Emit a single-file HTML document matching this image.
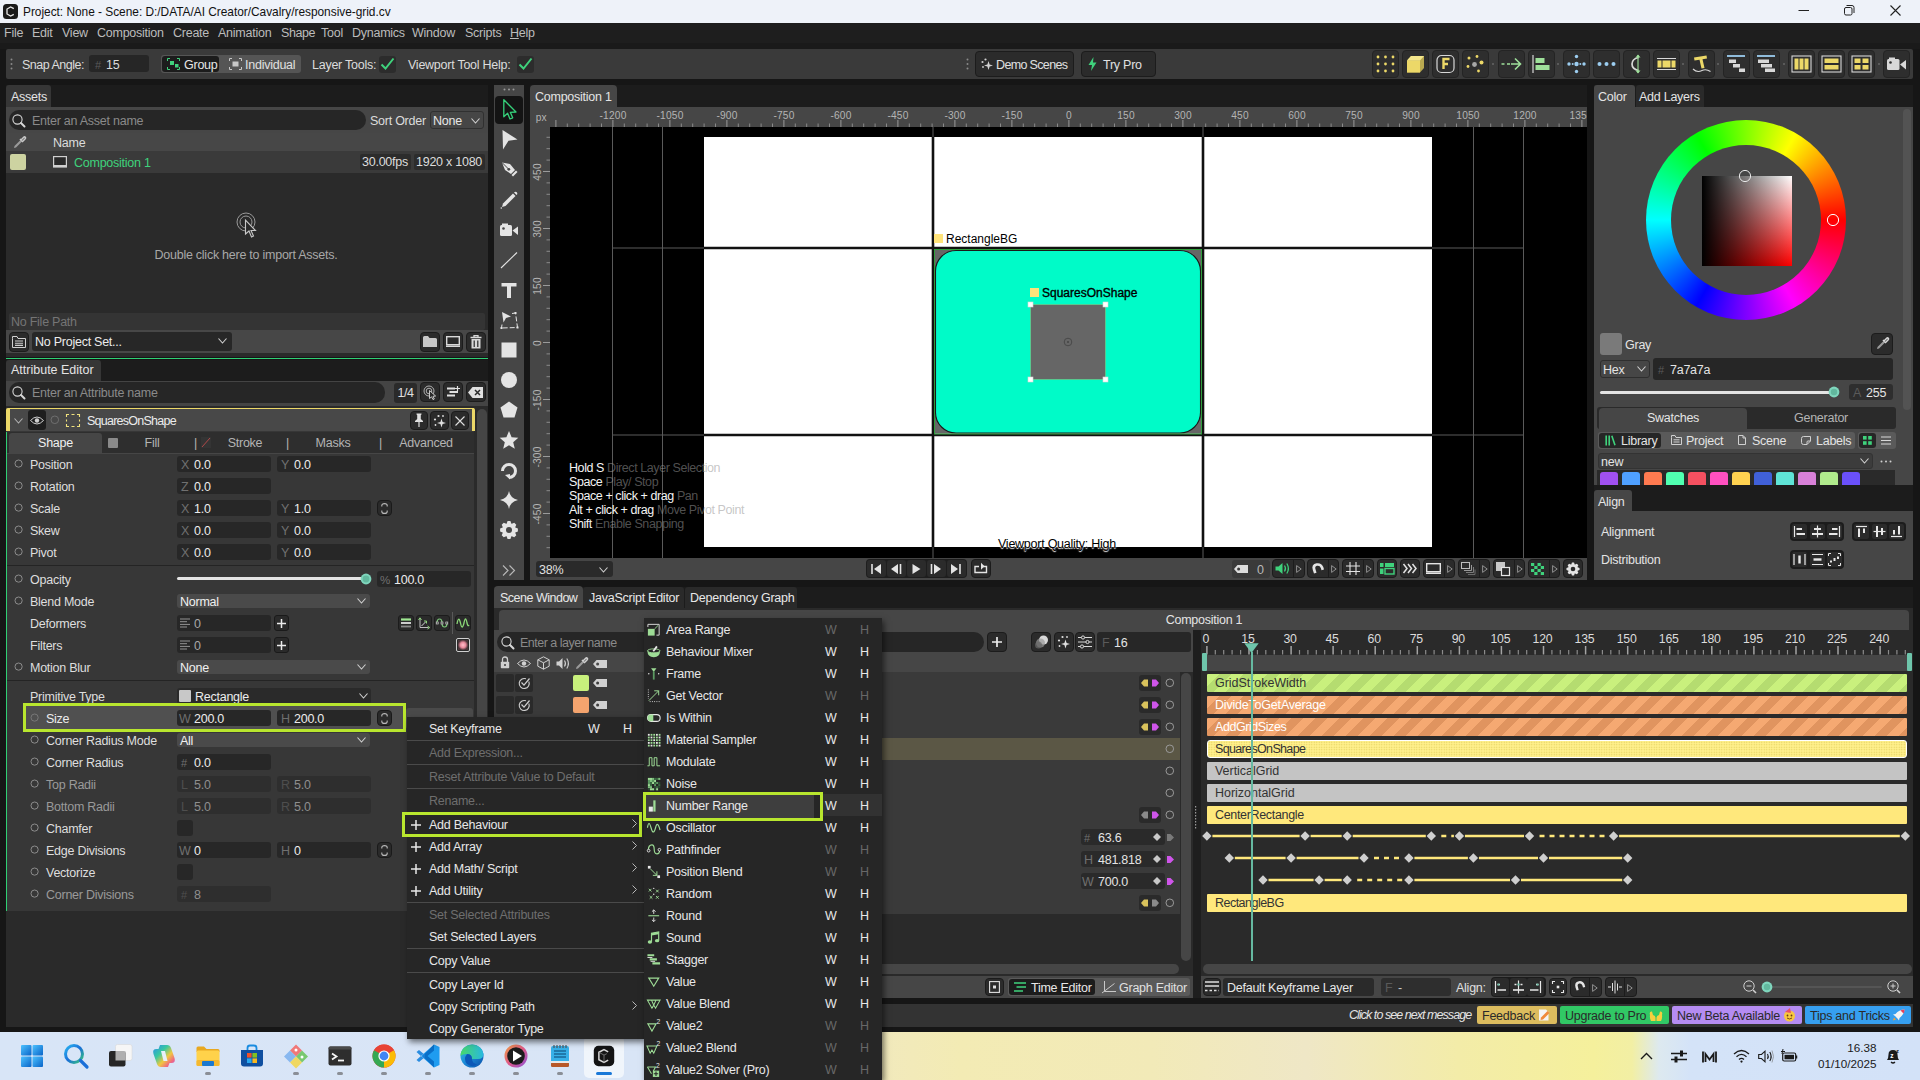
<!DOCTYPE html>
<html><head><meta charset="utf-8"><title>Cavalry</title>
<style>
html,body{margin:0;padding:0;}
body{width:1920px;height:1080px;overflow:hidden;position:relative;background:#161616;font-family:"Liberation Sans",sans-serif;font-size:12.5px;color:#d2d2d2;}
body div, body svg{position:absolute;box-sizing:border-box;}
svg{overflow:visible;}
.f{background:#262626;border-radius:3px;}
.dd{background:#4a4a4a;border-radius:3px;}
.btn{background:#2b2b2b;border:1px solid #1c1c1c;border-radius:4px;}
</style></head><body>
<div style="left:0px;top:0px;width:1920px;height:23px;background:#eef2f9;"></div><svg style="left:3px;top:4px;" width="15" height="15" viewBox="0 0 15 15"><rect x="0" y="0" width="15" height="15" rx="3.5" fill="#1a1a1a"/><path d="M10.8 4.6 L7.6 2.9 L4 5 V10 L7.6 12.1 L10.8 10.4" fill="none" stroke="#e8e8e8" stroke-width="1.3"/></svg><div style="left:23px;top:3.5px;height:16px;line-height:16px;color:#111;font-size:11.9px;letter-spacing:-0.02px;white-space:nowrap;">Project: None - Scene: D:/DATA/AI Creator/Cavalry/responsive-grid.cv</div><svg style="left:1798px;top:4px;" width="110" height="14" viewBox="0 0 110 14"><path d="M0.5 6.5 H11" stroke="#222" stroke-width="1" fill="none"/><rect x="46.5" y="3.5" width="7.5" height="7.5" rx="1.5" fill="none" stroke="#222" stroke-width="1"/><path d="M48.5 1.5 H54 Q56 1.5 56 3.5 V9" fill="none" stroke="#222" stroke-width="1"/><path d="M92.5 1.5 L102.5 11.5 M102.5 1.5 L92.5 11.5" stroke="#222" stroke-width="1.1" fill="none"/></svg><div style="left:0px;top:23px;width:1920px;height:20px;background:#1e1e1e;"></div><div style="left:0px;top:43px;width:1920px;height:6px;background:#1a1a1a;"></div><div style="left:4px;top:25.0px;height:16px;line-height:16px;color:#bcbcbc;font-size:12.5px;letter-spacing:-0.25px;white-space:nowrap;">File</div><div style="left:32px;top:25.0px;height:16px;line-height:16px;color:#bcbcbc;font-size:12.5px;letter-spacing:-0.25px;white-space:nowrap;">Edit</div><div style="left:62px;top:25.0px;height:16px;line-height:16px;color:#bcbcbc;font-size:12.5px;letter-spacing:-0.25px;white-space:nowrap;">View</div><div style="left:97px;top:25.0px;height:16px;line-height:16px;color:#bcbcbc;font-size:12.5px;letter-spacing:-0.25px;white-space:nowrap;">Composition</div><div style="left:173px;top:25.0px;height:16px;line-height:16px;color:#bcbcbc;font-size:12.5px;letter-spacing:-0.25px;white-space:nowrap;">Create</div><div style="left:218px;top:25.0px;height:16px;line-height:16px;color:#bcbcbc;font-size:12.5px;letter-spacing:-0.25px;white-space:nowrap;">Animation</div><div style="left:281px;top:25.0px;height:16px;line-height:16px;color:#bcbcbc;font-size:12.5px;letter-spacing:-0.45px;white-space:nowrap;">Shape</div><div style="left:321px;top:25.0px;height:16px;line-height:16px;color:#bcbcbc;font-size:12.5px;letter-spacing:-0.25px;white-space:nowrap;">Tool</div><div style="left:352px;top:25.0px;height:16px;line-height:16px;color:#bcbcbc;font-size:12.5px;letter-spacing:-0.25px;white-space:nowrap;">Dynamics</div><div style="left:412px;top:25.0px;height:16px;line-height:16px;color:#bcbcbc;font-size:12.5px;letter-spacing:-0.25px;white-space:nowrap;">Window</div><div style="left:465px;top:25.0px;height:16px;line-height:16px;color:#bcbcbc;font-size:12.5px;letter-spacing:-0.25px;white-space:nowrap;">Scripts</div><div style="left:510px;top:25.0px;height:16px;line-height:16px;color:#bcbcbc;font-size:12.5px;letter-spacing:-0.25px;white-space:nowrap;"><u>H</u>elp</div><div style="left:6px;top:49px;width:1907px;height:30px;background:#3a3a3a;border-radius:2px;"></div><svg style="left:10px;top:58px;" width="3" height="12" viewBox="0 0 3 12"><circle cx="1.5" cy="1.5" r="1" fill="#8a8a8a"/><circle cx="1.5" cy="6" r="1" fill="#8a8a8a"/><circle cx="1.5" cy="10.5" r="1" fill="#8a8a8a"/></svg><div style="left:22px;top:56.5px;height:16px;line-height:16px;color:#dcdcdc;font-size:12.5px;letter-spacing:-0.5px;white-space:nowrap;">Snap Angle:</div><div class="f" style="left:89px;top:55px;width:60px;height:17px;"></div><div style="left:95px;top:56.5px;height:16px;line-height:16px;color:#5a5a5a;font-size:11px;letter-spacing:-0.25px;white-space:nowrap;">#</div><div style="left:106px;top:56.5px;height:16px;line-height:16px;color:#dcdcdc;font-size:12.5px;letter-spacing:-0.25px;white-space:nowrap;">15</div><div style="left:161px;top:55px;width:140px;height:18px;background:#555;border-radius:3px;"></div><div style="left:162px;top:56px;width:57px;height:16px;background:#1c1c1c;border-radius:3px;"></div><svg style="left:167px;top:58px;" width="13" height="12" viewBox="0 0 13 12"><rect x="3" y="3" width="4" height="4" fill="#3fd27c"/><rect x="8" y="6" width="3.5" height="3.5" fill="#3fd27c"/><path d="M0.5 3 V0.5 H3 M10 0.5 H12.5 V3 M12.5 9 V11.5 H10 M3 11.5 H0.5 V9" fill="none" stroke="#3fd27c" stroke-width="1"/></svg><div style="left:184px;top:56.5px;height:16px;line-height:16px;color:#e6e6e6;font-size:12.5px;letter-spacing:-0.25px;white-space:nowrap;">Group</div><svg style="left:229px;top:58px;" width="13" height="12" viewBox="0 0 13 12"><rect x="3.5" y="3.5" width="6" height="5" fill="#c8c8c8"/><path d="M0.5 3 V0.5 H3 M10 0.5 H12.5 V3 M12.5 9 V11.5 H10 M3 11.5 H0.5 V9" fill="none" stroke="#c8c8c8" stroke-width="1"/></svg><div style="left:245px;top:56.5px;height:16px;line-height:16px;color:#e0e0e0;font-size:12.5px;letter-spacing:-0.25px;white-space:nowrap;">Individual</div><div style="left:312px;top:56.5px;height:16px;line-height:16px;color:#dcdcdc;font-size:12.5px;letter-spacing:-0.25px;white-space:nowrap;">Layer Tools:</div><div style="left:379px;top:56px;width:17px;height:17px;background:#2c2c2c;border-radius:3px;"></div><svg style="left:380px;top:57px;" width="15" height="14" viewBox="0 0 15 14"><path d="M1.5 7.5 L5.5 11.5 L13.5 1.5" fill="none" stroke="#3fd27c" stroke-width="2"/></svg><div style="left:408px;top:56.5px;height:16px;line-height:16px;color:#dcdcdc;font-size:12.5px;letter-spacing:-0.25px;white-space:nowrap;">Viewport Tool Help:</div><div style="left:517px;top:56px;width:17px;height:17px;background:#2c2c2c;border-radius:3px;"></div><svg style="left:518px;top:57px;" width="15" height="14" viewBox="0 0 15 14"><path d="M1.5 7.5 L5.5 11.5 L13.5 1.5" fill="none" stroke="#3fd27c" stroke-width="2"/></svg><svg style="left:966px;top:58px;" width="3" height="12" viewBox="0 0 3 12"><circle cx="1.5" cy="1.5" r="1" fill="#8a8a8a"/><circle cx="1.5" cy="6" r="1" fill="#8a8a8a"/><circle cx="1.5" cy="10.5" r="1" fill="#8a8a8a"/></svg><div class="btn" style="left:975px;top:51px;width:99px;height:26px;"></div><svg style="left:981px;top:58px;" width="12" height="12" viewBox="0 0 12 12"><path d="M7.5 3 L8.6 6.4 L12 7.5 L8.6 8.6 L7.5 12 L6.4 8.6 L3 7.5 L6.4 6.4 Z" fill="#d0d0d0"/><circle cx="1.5" cy="4" r="1.1" fill="#d0d0d0"/><circle cx="4.5" cy="1.5" r="1.1" fill="#d0d0d0"/><circle cx="2" cy="9" r="0.9" fill="#d0d0d0"/></svg><div style="left:996px;top:56.5px;height:16px;line-height:16px;color:#e0e0e0;font-size:12.5px;letter-spacing:-0.65px;white-space:nowrap;">Demo Scenes</div><div class="btn" style="left:1081px;top:51px;width:75px;height:26px;"></div><svg style="left:1088px;top:57px;" width="9" height="14" viewBox="0 0 9 14"><path d="M5.5 0 L0.5 8 H4 L3 14 L8.5 5.5 H5 Z" fill="#3fd27c"/></svg><div style="left:1103px;top:56.5px;height:16px;line-height:16px;color:#e0e0e0;font-size:12.5px;letter-spacing:-0.25px;white-space:nowrap;">Try Pro</div><div style="left:1372px;top:50px;width:27px;height:28px;background:#2e2e2e;border-radius:4px;border:1px solid #242424;"></div><svg style="left:1375px;top:54px;" width="21" height="20" viewBox="0 0 21 20"><circle cx="3.0" cy="3" r="1.400" fill="#ecd868"/><circle cx="3.0" cy="10" r="1.400" fill="#ecd868"/><circle cx="3.0" cy="17" r="1.400" fill="#ecd868"/><circle cx="10.5" cy="3" r="1.400" fill="#ecd868"/><circle cx="10.5" cy="10" r="1.400" fill="#ecd868"/><circle cx="10.5" cy="17" r="1.400" fill="#ecd868"/><circle cx="18.0" cy="3" r="1.400" fill="#ecd868"/><circle cx="18.0" cy="10" r="1.400" fill="#ecd868"/><circle cx="18.0" cy="17" r="1.400" fill="#ecd868"/></svg><div style="left:1402px;top:50px;width:27px;height:28px;background:#2e2e2e;border-radius:4px;border:1px solid #242424;"></div><svg style="left:1405px;top:54px;" width="21" height="20" viewBox="0 0 21 20"><path d="M2 6.500 L6 2 H19 V14 L15 18.500 H2 Z" fill="#b8a850"/><rect x="2" y="6.500" width="13" height="12" fill="#ecd868"/><path d="M2 6.500 L6 2 H19 L15 6.500 Z" fill="#f4e68c"/></svg><div style="left:1432px;top:50px;width:27px;height:28px;background:#2e2e2e;border-radius:4px;border:1px solid #242424;"></div><svg style="left:1435px;top:54px;" width="21" height="20" viewBox="0 0 21 20"><rect x="2" y="1.500" width="17" height="17" rx="4.500" fill="none" stroke="#d8d8d8" stroke-width="1.200"/><path d="M8.500 15 V5 H14.500 M8.500 10 H13" fill="none" stroke="#ecd868" stroke-width="2.400"/></svg><div style="left:1462px;top:50px;width:27px;height:28px;background:#2e2e2e;border-radius:4px;border:1px solid #242424;"></div><svg style="left:1465px;top:54px;" width="21" height="20" viewBox="0 0 21 20"><circle cx="4" cy="4" r="1.500" fill="#ecd868"/><circle cx="12" cy="2.500" r="1.400" fill="#ecd868"/><circle cx="9.500" cy="10.500" r="2.400" fill="#a8a8a8"/><circle cx="16.500" cy="8.500" r="2" fill="#ecd868"/><circle cx="3" cy="12.500" r="1.400" fill="#ecd868"/><circle cx="13.500" cy="17" r="1.400" fill="#ecd868"/></svg><svg style="left:1492px;top:63px;" width="2" height="2" viewBox="0 0 2 2"><circle cx="1" cy="1" r="0.900" fill="#6a6a6a"/></svg><div style="left:1497.5px;top:50px;width:27px;height:28px;background:#2e2e2e;border-radius:4px;border:1px solid #242424;"></div><svg style="left:1500.5px;top:54px;" width="21" height="20" viewBox="0 0 21 20"><path d="M0.500 10 H11" stroke="#9ee09a" stroke-width="1.600" stroke-dasharray="3 2.500"/><path d="M10 10 H19 M14 4.500 L19.500 10 L14 15.500" fill="none" stroke="#9ee09a" stroke-width="1.600"/></svg><div style="left:1527.5px;top:50px;width:27px;height:28px;background:#2e2e2e;border-radius:4px;border:1px solid #242424;"></div><svg style="left:1530.5px;top:54px;" width="21" height="20" viewBox="0 0 21 20"><path d="M2 1 V19" stroke="#d8d8d8" stroke-width="1.200"/><rect x="4.500" y="4" width="9" height="5" fill="#9ee09a"/><rect x="4.500" y="11" width="14" height="5" fill="#9ee09a"/></svg><svg style="left:1557px;top:63px;" width="2" height="2" viewBox="0 0 2 2"><circle cx="1" cy="1" r="0.900" fill="#6a6a6a"/></svg><div style="left:1562.5px;top:50px;width:27px;height:28px;background:#2e2e2e;border-radius:4px;border:1px solid #242424;"></div><svg style="left:1565.5px;top:54px;" width="21" height="20" viewBox="0 0 21 20"><circle cx="10.500" cy="10" r="2.200" fill="#9ccdf0"/><circle cx="10.500" cy="2.500" r="1.700" fill="#9ccdf0"/><circle cx="10.500" cy="17.500" r="1.700" fill="#9ccdf0"/><circle cx="3" cy="10" r="1.700" fill="#9ccdf0"/><circle cx="18" cy="10" r="1.700" fill="#9ccdf0"/><circle cx="6.700" cy="10" r="1" fill="#9ccdf0"/><circle cx="14.300" cy="10" r="1" fill="#9ccdf0"/></svg><div style="left:1593px;top:50px;width:27px;height:28px;background:#2e2e2e;border-radius:4px;border:1px solid #242424;"></div><svg style="left:1596px;top:54px;" width="21" height="20" viewBox="0 0 21 20"><circle cx="3.500" cy="10" r="2" fill="#9ccdf0"/><circle cx="10.500" cy="10" r="2" fill="#9ccdf0"/><circle cx="17.500" cy="10" r="2" fill="#9ccdf0"/></svg><div style="left:1623px;top:50px;width:27px;height:28px;background:#2e2e2e;border-radius:4px;border:1px solid #242424;"></div><svg style="left:1626px;top:54px;" width="21" height="20" viewBox="0 0 21 20"><path d="M12.500 3.500 Q6 5 6 10 Q6 15 12.500 16.500" fill="none" stroke="#d8d8d8" stroke-width="1.700"/><path d="M12 1 V19" stroke="#9ee09a" stroke-width="1.100"/><path d="M9.500 3.500 L12 0.500 L14.500 3.500 Z M9.500 16.500 L12 19.500 L14.500 16.500 Z" fill="#9ee09a"/></svg><div style="left:1652.5px;top:50px;width:27px;height:28px;background:#2e2e2e;border-radius:4px;border:1px solid #242424;"></div><svg style="left:1655.5px;top:54px;" width="21" height="20" viewBox="0 0 21 20"><path d="M1 4.500 H20 M1 15.500 H20" stroke="#d8d8d8" stroke-width="1"/><rect x="1.500" y="6.500" width="4" height="7" fill="#ecd868"/><rect x="6.500" y="6.500" width="8" height="7" fill="#ecd868"/><rect x="15.500" y="6.500" width="4" height="7" fill="#ecd868"/></svg><svg style="left:1682px;top:63px;" width="2" height="2" viewBox="0 0 2 2"><circle cx="1" cy="1" r="0.900" fill="#6a6a6a"/></svg><div style="left:1687.5px;top:50px;width:27px;height:28px;background:#2e2e2e;border-radius:4px;border:1px solid #242424;"></div><svg style="left:1690.5px;top:54px;" width="21" height="20" viewBox="0 0 21 20"><path d="M3 3.500 L15.500 1.500 L16 4.500 L11.500 5.200 L13.500 14 L10.500 14.500 L8.500 5.700 L3.500 6.500 Z" fill="#ecd868"/><path d="M2 15 Q6 19 11 16.500 Q15 14.500 19.500 17.500" fill="none" stroke="#d8d8d8" stroke-width="1.100"/></svg><svg style="left:1717px;top:63px;" width="2" height="2" viewBox="0 0 2 2"><circle cx="1" cy="1" r="0.900" fill="#6a6a6a"/></svg><div style="left:1723px;top:50px;width:27px;height:28px;background:#2e2e2e;border-radius:4px;border:1px solid #242424;"></div><svg style="left:1726px;top:54px;" width="21" height="20" viewBox="0 0 21 20"><path d="M1 2 H19" stroke="#9ccdf0" stroke-width="1.800"/><rect x="3" y="5.500" width="7" height="3.500" fill="#d8d8d8"/><rect x="7" y="10" width="7" height="3.500" fill="#d8d8d8"/><rect x="13" y="14.500" width="6" height="3.500" fill="#d8d8d8"/></svg><div style="left:1753px;top:50px;width:27px;height:28px;background:#2e2e2e;border-radius:4px;border:1px solid #242424;"></div><svg style="left:1756px;top:54px;" width="21" height="20" viewBox="0 0 21 20"><path d="M1 2 H19" stroke="#9ccdf0" stroke-width="1.800"/><rect x="2" y="5.500" width="11" height="3.500" fill="#d8d8d8"/><rect x="5" y="10" width="11" height="3.500" fill="#d8d8d8"/><rect x="9" y="14.500" width="10" height="3.500" fill="#d8d8d8"/></svg><svg style="left:1782.5px;top:63px;" width="2" height="2" viewBox="0 0 2 2"><circle cx="1" cy="1" r="0.900" fill="#6a6a6a"/></svg><div style="left:1788px;top:50px;width:27px;height:28px;background:#2e2e2e;border-radius:4px;border:1px solid #242424;"></div><svg style="left:1791px;top:54px;" width="21" height="20" viewBox="0 0 21 20"><rect x="1" y="2" width="19" height="16" fill="none" stroke="#d8d8d8" stroke-width="1.100"/><rect x="3.500" y="4.500" width="4" height="11" fill="#ecd868"/><rect x="8.500" y="4.500" width="4" height="11" fill="#ecd868"/><rect x="13.500" y="4.500" width="4" height="11" fill="#ecd868"/></svg><div style="left:1818px;top:50px;width:27px;height:28px;background:#2e2e2e;border-radius:4px;border:1px solid #242424;"></div><svg style="left:1821px;top:54px;" width="21" height="20" viewBox="0 0 21 20"><rect x="1" y="2" width="19" height="16" fill="none" stroke="#d8d8d8" stroke-width="1.100"/><rect x="3.500" y="4.500" width="14" height="4.500" fill="#ecd868"/><rect x="3.500" y="11" width="14" height="4.500" fill="#ecd868"/></svg><div style="left:1848px;top:50px;width:27px;height:28px;background:#2e2e2e;border-radius:4px;border:1px solid #242424;"></div><svg style="left:1851px;top:54px;" width="21" height="20" viewBox="0 0 21 20"><rect x="1" y="2" width="19" height="16" fill="none" stroke="#d8d8d8" stroke-width="1.100"/><rect x="3.500" y="4.500" width="6" height="4.500" fill="#ecd868"/><rect x="11.500" y="4.500" width="6" height="4.500" fill="#ecd868"/><rect x="3.500" y="11" width="6" height="4.500" fill="#ecd868"/><rect x="11.500" y="11" width="6" height="4.500" fill="#ecd868"/></svg><svg style="left:1877.5px;top:63px;" width="2" height="2" viewBox="0 0 2 2"><circle cx="1" cy="1" r="0.900" fill="#6a6a6a"/></svg><div style="left:1883px;top:50px;width:27px;height:28px;background:#2e2e2e;border-radius:4px;border:1px solid #242424;"></div><svg style="left:1886px;top:54px;" width="21" height="20" viewBox="0 0 21 20"><rect x="1" y="5" width="12.500" height="11" rx="1.500" fill="#d8d8d8"/><path d="M14 10.500 L20 6 V15.500 Z" fill="#d8d8d8"/><rect x="3" y="3.500" width="6" height="2" fill="#d8d8d8"/><circle cx="4.500" cy="8.500" r="1.300" fill="#2e2e2e"/></svg><div style="left:6px;top:85px;width:482px;height:22px;background:#1c1c1c;"></div><div style="left:6px;top:85px;width:45px;height:22px;background:#363636;border-radius:3px 3px 0 0;"></div><div style="left:11px;top:88.5px;height:16px;line-height:16px;color:#e4e4e4;font-size:12.5px;letter-spacing:-0.25px;white-space:nowrap;">Assets</div><div style="left:6px;top:107px;width:482px;height:250px;background:#2a2a2a;"></div><div style="left:6px;top:107px;width:482px;height:26px;background:#464646;"></div><div style="left:9px;top:110px;width:357px;height:20px;background:#262626;border-radius:10px;"></div><svg style="left:12px;top:113.5px;" width="14" height="14" viewBox="0 0 14 14"><circle cx="5.5" cy="5.5" r="4.6" fill="none" stroke="#d8d8d8" stroke-width="1.1"/><path d="M9 9 L12.5 12.5" stroke="#d8d8d8" stroke-width="2" stroke-linecap="round"/></svg><div style="left:32px;top:112.5px;height:16px;line-height:16px;color:#8a8a8a;font-size:12.5px;letter-spacing:-0.25px;white-space:nowrap;">Enter an Asset name</div><div style="left:370px;top:112.5px;height:16px;line-height:16px;color:#dcdcdc;font-size:12.5px;letter-spacing:-0.25px;white-space:nowrap;">Sort Order</div><div style="left:430px;top:111px;width:54px;height:18px;background:#464646;border-radius:3px;border:1px solid #303030;"></div><div style="left:433px;top:112.5px;height:16px;line-height:16px;color:#e6e6e6;font-size:12.5px;letter-spacing:-0.25px;white-space:nowrap;">None</div><svg style="left:471px;top:117.5px;" width="9" height="6" viewBox="0 0 9 6"><path d="M0.5 0.5 L4.5 5 L8.5 0.5" fill="none" stroke="#d0d0d0" stroke-width="1.1"/></svg><div style="left:6px;top:133px;width:482px;height:18px;background:#474747;"></div><svg style="left:13px;top:136px;" width="13" height="13" viewBox="0 0 13 13"><path d="M1 12 L1.5 10 L7.5 4 L9 5.5 L3 11.5 Z" fill="#9a9a9a"/><path d="M7 3 L10 6 M8 4 L10.5 1.5 Q11.5 0.5 12.3 1.3 Q13 2 12 3 L9.5 5.5" stroke="#c8c8c8" stroke-width="1.6" fill="none"/></svg><div style="left:53px;top:134.5px;height:16px;line-height:16px;color:#dcdcdc;font-size:12.5px;letter-spacing:-0.25px;white-space:nowrap;">Name</div><div style="left:6px;top:151px;width:482px;height:22px;background:#3a3a3a;"></div><div style="left:10px;top:154px;width:16px;height:16px;background:#cdd3a1;border-radius:2px;"></div><svg style="left:53px;top:156px;" width="14" height="12" viewBox="0 0 14 12"><rect x="0.6" y="0.6" width="12.8" height="9" fill="#2a2a2a" stroke="#d0d0d0" stroke-width="1.2"/><rect x="0" y="10" width="14" height="1.6" fill="#d0d0d0"/></svg><div style="left:74px;top:154.5px;height:16px;line-height:16px;color:#3fd27c;font-size:12.5px;letter-spacing:-0.25px;white-space:nowrap;">Composition 1</div><div style="left:360px;top:154px;width:51px;height:16px;background:#2c2c2c;border-radius:2px;"></div><div style="left:362px;top:154.0px;height:16px;line-height:16px;color:#dcdcdc;font-size:12.5px;letter-spacing:-0.25px;white-space:nowrap;">30.00fps</div><div style="left:414px;top:154px;width:71px;height:16px;background:#2c2c2c;border-radius:2px;"></div><div style="left:416px;top:154.0px;height:16px;line-height:16px;color:#dcdcdc;font-size:12.5px;letter-spacing:-0.25px;white-space:nowrap;">1920 x 1080</div><svg style="left:235px;top:211px;" width="24" height="28" viewBox="0 0 24 28"><circle cx="11" cy="11" r="9" fill="none" stroke="#9a9a9a" stroke-width="1"/><circle cx="11" cy="11" r="6" fill="none" stroke="#9a9a9a" stroke-width="1"/><path d="M10.5 9 V23 L14 20 L16.5 26 L18.5 25 L16 19.5 L20.5 19.5 Z" fill="#2a2a2a" stroke="#c8c8c8" stroke-width="1.1"/></svg><div style="left:66px;top:246.5px;height:16px;line-height:16px;color:#a8a8a8;font-size:12.5px;letter-spacing:-0.25px;white-space:nowrap;width:360px;text-align:center;">Double click here to import Assets.</div><div style="left:9px;top:313px;width:476px;height:17px;background:#343434;border-radius:2px;"></div><div style="left:11px;top:313.5px;height:16px;line-height:16px;color:#757575;font-size:12.5px;letter-spacing:-0.25px;white-space:nowrap;">No File Path</div><div style="left:6px;top:330px;width:482px;height:23px;background:#474747;"></div><div class="btn" style="left:9px;top:332px;width:20px;height:20px;"></div><svg style="left:12px;top:336px;" width="14" height="12" viewBox="0 0 14 12"><path d="M0.5 2.5 V0.5 H5 L6 2.5 H13.5 V11.5 H0.5 Z" fill="none" stroke="#d0d0d0" stroke-width="1"/><path d="M3 5 H11 M3 7.2 H11 M3 9.4 H11" stroke="#d0d0d0" stroke-width="1.1"/></svg><div style="left:32px;top:332px;width:200px;height:19px;background:#272727;border-radius:3px;"></div><div style="left:35px;top:333.5px;height:16px;line-height:16px;color:#ececec;font-size:12.5px;letter-spacing:-0.25px;white-space:nowrap;">No Project Set...</div><svg style="left:218px;top:338px;" width="9" height="6" viewBox="0 0 9 6"><path d="M0.5 0.5 L4.5 5 L8.5 0.5" fill="none" stroke="#d0d0d0" stroke-width="1.1"/></svg><div class="btn" style="left:420px;top:332px;width:20px;height:20px;"></div><div class="btn" style="left:443px;top:332px;width:20px;height:20px;"></div><div class="btn" style="left:466px;top:332px;width:20px;height:20px;"></div><svg style="left:423px;top:336px;" width="14" height="11" viewBox="0 0 14 11"><path d="M0 1.5 Q0 0 1.5 0 H5 L6.5 2 H12.5 Q14 2 14 3.5 V11 H0 Z" fill="#c8c8c8"/></svg><svg style="left:446px;top:336px;" width="14" height="11" viewBox="0 0 14 11"><rect x="0.7" y="0.7" width="12.6" height="8" fill="#2a2a2a" stroke="#d8d8d8" stroke-width="1.4"/><rect x="0" y="9.5" width="14" height="1.5" fill="#d8d8d8"/></svg><svg style="left:470px;top:335px;" width="12" height="14" viewBox="0 0 12 14"><path d="M0.5 2.5 H11.5 M4 2.5 V0.7 H8 V2.5" stroke="#d8d8d8" stroke-width="1.3" fill="none"/><path d="M1.5 4 H10.5 V13.5 H1.5 Z" fill="#d8d8d8"/><path d="M4.2 5.5 V12 M7.8 5.5 V12" stroke="#2a2a2a" stroke-width="1.2"/></svg><div style="left:6px;top:358px;width:482px;height:1px;background:#2fcf74;"></div><div style="left:6px;top:360px;width:482px;height:21px;background:#1c1c1c;"></div><div style="left:6px;top:360px;width:95px;height:21px;background:#363636;border-radius:3px 3px 0 0;"></div><div style="left:11px;top:361.7px;height:16px;line-height:16px;color:#e4e4e4;font-size:12.5px;letter-spacing:0px;white-space:nowrap;">Attribute Editor</div><div style="left:6px;top:381px;width:482px;height:646px;background:#2a2a2a;"></div><div style="left:6px;top:381px;width:482px;height:25px;background:#444444;"></div><div style="left:9px;top:382px;width:376px;height:21px;background:#262626;border-radius:10px;"></div><svg style="left:12px;top:385.5px;" width="14" height="14" viewBox="0 0 14 14"><circle cx="5.5" cy="5.5" r="4.6" fill="none" stroke="#d8d8d8" stroke-width="1.1"/><path d="M9 9 L12.5 12.5" stroke="#d8d8d8" stroke-width="2" stroke-linecap="round"/></svg><div style="left:32px;top:384.5px;height:16px;line-height:16px;color:#8a8a8a;font-size:12.5px;letter-spacing:-0.25px;white-space:nowrap;">Enter an Attribute name</div><div style="left:394px;top:383px;width:23px;height:20px;background:#2a2a2a;border-radius:3px;"></div><div style="left:394px;top:384.5px;height:16px;line-height:16px;color:#e0e0e0;font-size:12.5px;letter-spacing:-0.5px;white-space:nowrap;width:23px;text-align:center;">1/4</div><div class="btn" style="left:420px;top:382px;width:20px;height:20px;"></div><div class="btn" style="left:443px;top:382px;width:20px;height:20px;"></div><div class="btn" style="left:466px;top:382px;width:20px;height:20px;"></div><svg style="left:423px;top:385px;" width="15" height="15" viewBox="0 0 15 15"><circle cx="6" cy="6" r="5" fill="none" stroke="#b0b0b0" stroke-width="1"/><circle cx="6" cy="6" r="2.8" fill="none" stroke="#b0b0b0" stroke-width="1"/><path d="M6.5 5.5 V13.5 L8.6 11.8 L10 14.6 L11.3 14 L10 11.3 L12.6 11 Z" fill="#2b2b2b" stroke="#d8d8d8" stroke-width="0.9"/></svg><svg style="left:447px;top:386px;" width="13" height="12" viewBox="0 0 13 12"><path d="M0 2.5 H8 M2.5 6 H11 M0 9.5 H8" stroke="#e0e0e0" stroke-width="1.8"/><path d="M10.5 0 V5 M8 2.5 H13" stroke="#e0e0e0" stroke-width="1.2"/></svg><svg style="left:468px;top:387px;" width="15" height="11" viewBox="0 0 15 11"><path d="M0 5.5 L4.5 0 H15 V11 H4.5 Z" fill="#e0e0e0"/><path d="M7 3 L12 8 M12 3 L7 8" stroke="#2b2b2b" stroke-width="1.5"/></svg><div style="left:6px;top:408px;width:468px;height:503px;background:#373737;"></div><div style="left:477px;top:409px;width:10px;height:400px;background:#454545;border-radius:5px;"></div><div style="left:6px;top:408px;width:469px;height:23px;background:#484848;border-left:4px solid #ecd868;border-right:3px solid #ecd868;border-top:1px solid #ecd868;border-radius:2px 2px 0 0;"></div><svg style="left:14px;top:418px;" width="9" height="6" viewBox="0 0 9 6"><path d="M0.5 0.5 L4.5 5 L8.5 0.5" fill="none" stroke="#b0b0b0" stroke-width="1.1"/></svg><div style="left:28px;top:410px;width:18px;height:20px;background:#1e1e1e;border-radius:3px;"></div><svg style="left:30px;top:415.5px;" width="14" height="9" viewBox="0 0 14 9"><path d="M0.5 4.5 Q7 -2.5 13.5 4.5 Q7 11.5 0.5 4.5 Z" fill="none" stroke="#d0d0d0" stroke-width="1"/><circle cx="7" cy="4.5" r="2.2" fill="#d0d0d0"/></svg><svg style="left:50.2px;top:415.2px;" width="9.6" height="9.6" viewBox="0 0 9.6 9.6"><circle cx="4.8" cy="4.8" r="3.8" fill="none" stroke="#6e6e6e" stroke-width="1"/></svg><svg style="left:66px;top:414px;" width="14" height="13" viewBox="0 0 14 13"><path d="M0.5 3 V0.5 H3 M5.5 0.5 H8.5 M11 0.5 H13.5 V3 M13.5 5.5 V7.5 M13.5 10 V12.5 H11 M8.5 12.5 H5.5 M3 12.5 H0.5 V10 M0.5 7.5 V5.5" fill="none" stroke="#f0e27e" stroke-width="1.1"/></svg><div style="left:87px;top:412.5px;height:16px;line-height:16px;color:#ececec;font-size:12.5px;letter-spacing:-0.75px;white-space:nowrap;">SquaresOnShape</div><div class="btn" style="left:410px;top:411px;width:18px;height:19px;"></div><div class="btn" style="left:430px;top:411px;width:19px;height:19px;"></div><div class="btn" style="left:451px;top:411px;width:18px;height:19px;"></div><svg style="left:414px;top:413px;" width="10" height="15" viewBox="0 0 10 15"><path d="M2.5 0.5 H7.5 V1.5 L6.8 2 V6 L9 8 V9 H1 V8 L3.2 6 V2 L2.5 1.5 Z" fill="#e0e0e0"/><path d="M5 9 V14" stroke="#e0e0e0" stroke-width="1.2"/></svg><svg style="left:433px;top:414px;" width="14" height="14" viewBox="0 0 14 14"><path d="M8.5 4.5 L9.6 7.9 L13 9 L9.6 10.1 L8.5 13.5 L7.4 10.1 L4 9 L7.4 7.9 Z" fill="#e0e0e0"/><circle cx="2" cy="5.5" r="1.1" fill="#e0e0e0"/><circle cx="5.5" cy="2" r="1.1" fill="#e0e0e0"/><circle cx="2.5" cy="11" r="0.9" fill="#e0e0e0"/><circle cx="10" cy="2" r="0.9" fill="#e0e0e0"/></svg><svg style="left:455px;top:416px;" width="10" height="10" viewBox="0 0 10 10"><path d="M0.5 0.5 L9.5 9.5 M9.5 0.5 L0.5 9.5" stroke="#e0e0e0" stroke-width="1.1"/></svg><div style="left:6px;top:432px;width:1px;height:479px;background:#2fcf74;"></div><div style="left:7px;top:432px;width:467px;height:21px;background:#2e2e2e;"></div><div style="left:9px;top:433px;width:93px;height:20px;background:#464646;border-radius:3px 3px 0 0;"></div><div style="left:9px;top:434.5px;height:16px;line-height:16px;color:#f0f0f0;font-size:12.5px;letter-spacing:-0.25px;white-space:nowrap;width:93px;text-align:center;">Shape</div><div style="left:108px;top:438px;width:10px;height:10px;background:#8a8a8a;border-radius:1px;"></div><div style="left:104px;top:434.5px;height:16px;line-height:16px;color:#b4b4b4;font-size:12.5px;letter-spacing:-0.25px;white-space:nowrap;width:96px;text-align:center;">Fill</div><div style="left:194px;top:434.5px;height:16px;line-height:16px;color:#b4b4b4;font-size:12.5px;letter-spacing:-0.25px;white-space:nowrap;">|</div><svg style="left:201px;top:437px;" width="10" height="11" viewBox="0 0 10 11"><rect x="0" y="0" width="10" height="11" fill="#343434"/><path d="M1 10 L9 1" stroke="#b04848" stroke-width="1"/></svg><div style="left:198px;top:434.5px;height:16px;line-height:16px;color:#b4b4b4;font-size:12.5px;letter-spacing:-0.25px;white-space:nowrap;width:94px;text-align:center;">Stroke</div><div style="left:286px;top:434.5px;height:16px;line-height:16px;color:#b4b4b4;font-size:12.5px;letter-spacing:-0.25px;white-space:nowrap;">|</div><div style="left:286px;top:434.5px;height:16px;line-height:16px;color:#b4b4b4;font-size:12.5px;letter-spacing:-0.25px;white-space:nowrap;width:94px;text-align:center;">Masks</div><div style="left:379px;top:434.5px;height:16px;line-height:16px;color:#b4b4b4;font-size:12.5px;letter-spacing:-0.25px;white-space:nowrap;">|</div><div style="left:380px;top:434.5px;height:16px;line-height:16px;color:#b4b4b4;font-size:12.5px;letter-spacing:-0.25px;white-space:nowrap;width:92px;text-align:center;">Advanced</div><div style="left:7px;top:453px;width:467px;height:1px;background:#464646;"></div><svg style="left:14.4px;top:458.9px;" width="9.2" height="9.2" viewBox="0 0 9.2 9.2"><circle cx="4.6" cy="4.6" r="3.6" fill="none" stroke="#8c8c8c" stroke-width="1"/></svg><div style="left:30px;top:456.5px;height:16px;line-height:16px;color:#dedede;font-size:12.5px;letter-spacing:-0.25px;white-space:nowrap;">Position</div><div style="left:177px;top:456px;width:94px;height:16px;background:#272727;border-radius:3px;"></div><div style="left:181px;top:456.5px;height:16px;line-height:16px;color:#707070;font-size:12.5px;letter-spacing:-0.3px;white-space:nowrap;">X</div><div style="left:194px;top:456.5px;height:16px;line-height:16px;color:#ececec;font-size:12.5px;letter-spacing:-0.25px;white-space:nowrap;">0.0</div><div style="left:277px;top:456px;width:94px;height:16px;background:#272727;border-radius:3px;"></div><div style="left:281px;top:456.5px;height:16px;line-height:16px;color:#707070;font-size:12.5px;letter-spacing:-0.3px;white-space:nowrap;">Y</div><div style="left:294px;top:456.5px;height:16px;line-height:16px;color:#ececec;font-size:12.5px;letter-spacing:-0.25px;white-space:nowrap;">0.0</div><svg style="left:14.4px;top:480.9px;" width="9.2" height="9.2" viewBox="0 0 9.2 9.2"><circle cx="4.6" cy="4.6" r="3.6" fill="none" stroke="#8c8c8c" stroke-width="1"/></svg><div style="left:30px;top:478.5px;height:16px;line-height:16px;color:#dedede;font-size:12.5px;letter-spacing:-0.25px;white-space:nowrap;">Rotation</div><div style="left:177px;top:478px;width:94px;height:16px;background:#272727;border-radius:3px;"></div><div style="left:181px;top:478.5px;height:16px;line-height:16px;color:#707070;font-size:12.5px;letter-spacing:-0.3px;white-space:nowrap;">Z</div><div style="left:194px;top:478.5px;height:16px;line-height:16px;color:#ececec;font-size:12.5px;letter-spacing:-0.25px;white-space:nowrap;">0.0</div><svg style="left:14.4px;top:502.9px;" width="9.2" height="9.2" viewBox="0 0 9.2 9.2"><circle cx="4.6" cy="4.6" r="3.6" fill="none" stroke="#8c8c8c" stroke-width="1"/></svg><div style="left:30px;top:500.5px;height:16px;line-height:16px;color:#dedede;font-size:12.5px;letter-spacing:-0.25px;white-space:nowrap;">Scale</div><div style="left:177px;top:500px;width:94px;height:16px;background:#272727;border-radius:3px;"></div><div style="left:181px;top:500.5px;height:16px;line-height:16px;color:#707070;font-size:12.5px;letter-spacing:-0.3px;white-space:nowrap;">X</div><div style="left:194px;top:500.5px;height:16px;line-height:16px;color:#ececec;font-size:12.5px;letter-spacing:-0.25px;white-space:nowrap;">1.0</div><div style="left:277px;top:500px;width:94px;height:16px;background:#272727;border-radius:3px;"></div><div style="left:281px;top:500.5px;height:16px;line-height:16px;color:#707070;font-size:12.5px;letter-spacing:-0.3px;white-space:nowrap;">Y</div><div style="left:294px;top:500.5px;height:16px;line-height:16px;color:#ececec;font-size:12.5px;letter-spacing:-0.25px;white-space:nowrap;">1.0</div><svg style="left:14.4px;top:524.9px;" width="9.2" height="9.2" viewBox="0 0 9.2 9.2"><circle cx="4.6" cy="4.6" r="3.6" fill="none" stroke="#8c8c8c" stroke-width="1"/></svg><div style="left:30px;top:522.5px;height:16px;line-height:16px;color:#dedede;font-size:12.5px;letter-spacing:-0.25px;white-space:nowrap;">Skew</div><div style="left:177px;top:522px;width:94px;height:16px;background:#272727;border-radius:3px;"></div><div style="left:181px;top:522.5px;height:16px;line-height:16px;color:#707070;font-size:12.5px;letter-spacing:-0.3px;white-space:nowrap;">X</div><div style="left:194px;top:522.5px;height:16px;line-height:16px;color:#ececec;font-size:12.5px;letter-spacing:-0.25px;white-space:nowrap;">0.0</div><div style="left:277px;top:522px;width:94px;height:16px;background:#272727;border-radius:3px;"></div><div style="left:281px;top:522.5px;height:16px;line-height:16px;color:#707070;font-size:12.5px;letter-spacing:-0.3px;white-space:nowrap;">Y</div><div style="left:294px;top:522.5px;height:16px;line-height:16px;color:#ececec;font-size:12.5px;letter-spacing:-0.25px;white-space:nowrap;">0.0</div><svg style="left:14.4px;top:546.9px;" width="9.2" height="9.2" viewBox="0 0 9.2 9.2"><circle cx="4.6" cy="4.6" r="3.6" fill="none" stroke="#8c8c8c" stroke-width="1"/></svg><div style="left:30px;top:544.5px;height:16px;line-height:16px;color:#dedede;font-size:12.5px;letter-spacing:-0.25px;white-space:nowrap;">Pivot</div><div style="left:177px;top:544px;width:94px;height:16px;background:#272727;border-radius:3px;"></div><div style="left:181px;top:544.5px;height:16px;line-height:16px;color:#707070;font-size:12.5px;letter-spacing:-0.3px;white-space:nowrap;">X</div><div style="left:194px;top:544.5px;height:16px;line-height:16px;color:#ececec;font-size:12.5px;letter-spacing:-0.25px;white-space:nowrap;">0.0</div><div style="left:277px;top:544px;width:94px;height:16px;background:#272727;border-radius:3px;"></div><div style="left:281px;top:544.5px;height:16px;line-height:16px;color:#707070;font-size:12.5px;letter-spacing:-0.3px;white-space:nowrap;">Y</div><div style="left:294px;top:544.5px;height:16px;line-height:16px;color:#ececec;font-size:12.5px;letter-spacing:-0.25px;white-space:nowrap;">0.0</div><div style="left:377px;top:500px;width:15px;height:16px;background:#2a2a2a;border-radius:4px;border:1px solid #1a1a1a;"></div><svg style="left:381px;top:502.5px;" width="7" height="11" viewBox="0 0 7 11"><path d="M0.8 3.4 V2.6 Q0.8 0.6 3.5 0.6 Q6.2 0.6 6.2 2.6 V3.4 M0.8 7.6 V8.4 Q0.8 10.4 3.5 10.4 Q6.2 10.4 6.2 8.4 V7.6" fill="none" stroke="#b8b8b8" stroke-width="1.1"/></svg><div style="left:7px;top:565px;width:467px;height:1px;background:#242424;"></div><svg style="left:14.4px;top:573.9px;" width="9.2" height="9.2" viewBox="0 0 9.2 9.2"><circle cx="4.6" cy="4.6" r="3.6" fill="none" stroke="#8c8c8c" stroke-width="1"/></svg><div style="left:30px;top:571.5px;height:16px;line-height:16px;color:#dedede;font-size:12.5px;letter-spacing:-0.25px;white-space:nowrap;">Opacity</div><div style="left:177px;top:577px;width:190px;height:3px;background:#e4e4e4;border-radius:2px;"></div><svg style="left:360px;top:573px;" width="12" height="12" viewBox="0 0 12 12"><circle cx="6" cy="6" r="5.4" fill="#7fd6bd"/><circle cx="6" cy="6" r="3.4" fill="#62b89e"/></svg><div style="left:377px;top:571px;width:94px;height:16px;background:#272727;border-radius:3px;"></div><div style="left:380px;top:571.5px;height:16px;line-height:16px;color:#707070;font-size:11.5px;letter-spacing:-0.25px;white-space:nowrap;">%</div><div style="left:394px;top:571.5px;height:16px;line-height:16px;color:#ececec;font-size:12.5px;letter-spacing:-0.25px;white-space:nowrap;">100.0</div><svg style="left:14.4px;top:595.9px;" width="9.2" height="9.2" viewBox="0 0 9.2 9.2"><circle cx="4.6" cy="4.6" r="3.6" fill="none" stroke="#8c8c8c" stroke-width="1"/></svg><div style="left:30px;top:593.5px;height:16px;line-height:16px;color:#dedede;font-size:12.5px;letter-spacing:-0.25px;white-space:nowrap;">Blend Mode</div><div class="dd" style="left:177px;top:594px;width:193px;height:14px;"></div><div style="left:180px;top:593.5px;height:16px;line-height:16px;color:#f0f0f0;font-size:12.5px;letter-spacing:-0.25px;white-space:nowrap;">Normal</div><svg style="left:357px;top:598px;" width="9" height="6" viewBox="0 0 9 6"><path d="M0.5 0.5 L4.5 5 L8.5 0.5" fill="none" stroke="#d0d0d0" stroke-width="1.1"/></svg><div style="left:30px;top:615.5px;height:16px;line-height:16px;color:#dedede;font-size:12.5px;letter-spacing:-0.25px;white-space:nowrap;">Deformers</div><div style="left:177px;top:615px;width:94px;height:16px;background:#272727;border-radius:3px;"></div><svg style="left:180px;top:618px;" width="10" height="10" viewBox="0 0 10 10"><path d="M0 1 H10 M0 3.7 H7 M0 6.4 H10 M0 9 H7" stroke="#a0a0a0" stroke-width="0.9"/></svg><div style="left:194px;top:615.5px;height:16px;line-height:16px;color:#a8a8a8;font-size:12.5px;letter-spacing:-0.25px;white-space:nowrap;">0</div><div style="left:274px;top:615px;width:15px;height:16px;background:#2a2a2a;border-radius:3px;border:1px solid #1a1a1a;"></div><svg style="left:277px;top:618.5px;" width="9" height="9" viewBox="0 0 9 9"><path d="M4.5 0 V9 M0 4.5 H9" stroke="#ececec" stroke-width="1.5"/></svg><div style="left:30px;top:637.5px;height:16px;line-height:16px;color:#dedede;font-size:12.5px;letter-spacing:-0.25px;white-space:nowrap;">Filters</div><div style="left:177px;top:637px;width:94px;height:16px;background:#272727;border-radius:3px;"></div><svg style="left:180px;top:640px;" width="10" height="10" viewBox="0 0 10 10"><path d="M0 1 H10 M0 3.7 H7 M0 6.4 H10 M0 9 H7" stroke="#a0a0a0" stroke-width="0.9"/></svg><div style="left:194px;top:637.5px;height:16px;line-height:16px;color:#a8a8a8;font-size:12.5px;letter-spacing:-0.25px;white-space:nowrap;">0</div><div style="left:274px;top:637px;width:15px;height:16px;background:#2a2a2a;border-radius:3px;border:1px solid #1a1a1a;"></div><svg style="left:277px;top:640.5px;" width="9" height="9" viewBox="0 0 9 9"><path d="M4.5 0 V9 M0 4.5 H9" stroke="#ececec" stroke-width="1.5"/></svg><div style="left:398px;top:615px;width:16px;height:16px;background:#2a2a2a;border-radius:3px;border:1px solid #1c1c1c;"></div><div style="left:416px;top:615px;width:16px;height:16px;background:#2a2a2a;border-radius:3px;border:1px solid #1c1c1c;"></div><div style="left:434px;top:615px;width:16px;height:16px;background:#2a2a2a;border-radius:3px;border:1px solid #1c1c1c;"></div><div style="left:455px;top:615px;width:16px;height:16px;background:#2a2a2a;border-radius:3px;border:1px solid #1c1c1c;"></div><svg style="left:401px;top:618px;" width="10" height="10" viewBox="0 0 10 10"><path d="M0 1.500 H10" stroke="#9ee890" stroke-width="2.200"/><path d="M0 5 H10" stroke="#e0e0e0" stroke-width="1.800"/><path d="M0 8.500 H10" stroke="#8a8a8a" stroke-width="1.800"/></svg><svg style="left:418px;top:617px;" width="12" height="12" viewBox="0 0 12 12"><path d="M2 2 V10.500 H10.500" stroke="#c0c0c0" stroke-width="1" fill="none"/><path d="M3.500 9 L8 4.500" stroke="#d8d8d8" stroke-width="1"/><path d="M0.500 3 L2 0.800 L3.500 3 M9.500 9 L11.700 10.500 L9.500 12" stroke="#8cd878" stroke-width="1" fill="none"/><path d="M6 4 H8.500 V6.500" stroke="#8cd878" stroke-width="1" fill="none"/></svg><svg style="left:436px;top:618px;" width="12" height="10" viewBox="0 0 12 10"><path d="M1 5 Q1 1 3.500 1 Q6 1 6 5 Q6 9 8.500 9 Q11 9 11 5" stroke="#7cc878" stroke-width="1.200" fill="none"/><rect x="0.200" y="4" width="2" height="2" fill="#373737" stroke="#e0e0e0" stroke-width="0.600"/><rect x="5" y="4" width="2" height="2" fill="#373737" stroke="#e0e0e0" stroke-width="0.600"/><rect x="9.800" y="4" width="2" height="2" fill="#373737" stroke="#e0e0e0" stroke-width="0.600"/></svg><div style="left:452px;top:612px;width:1px;height:22px;background:#5a5a5a;"></div><svg style="left:457px;top:618px;" width="12" height="10" viewBox="0 0 12 10"><path d="M0 6 Q1.5 -3 3.5 5 Q5 13 7 5 Q8.5 -3 10 5 Q11 9 12 7" stroke="#8cd878" stroke-width="1.3" fill="none"/></svg><div style="left:456px;top:638px;width:14px;height:14px;background:#2a2a2a;border-radius:2px;border:1px solid #d0d0d0;"></div><svg style="left:458px;top:640px;" width="10" height="10" viewBox="0 0 10 10"><defs><radialGradient id="pk"><stop offset="0" stop-color="#ffc0cc"/><stop offset="0.550" stop-color="#e88a9c"/><stop offset="1" stop-color="#4a3438"/></radialGradient></defs><rect x="0" y="0" width="10" height="10" fill="url(#pk)"/></svg><svg style="left:14.4px;top:661.9px;" width="9.2" height="9.2" viewBox="0 0 9.2 9.2"><circle cx="4.6" cy="4.6" r="3.6" fill="none" stroke="#8c8c8c" stroke-width="1"/></svg><div style="left:30px;top:659.5px;height:16px;line-height:16px;color:#dedede;font-size:12.5px;letter-spacing:-0.25px;white-space:nowrap;">Motion Blur</div><div class="dd" style="left:177px;top:660px;width:193px;height:14px;"></div><div style="left:180px;top:659.5px;height:16px;line-height:16px;color:#f0f0f0;font-size:12.5px;letter-spacing:-0.25px;white-space:nowrap;">None</div><svg style="left:357px;top:664px;" width="9" height="6" viewBox="0 0 9 6"><path d="M0.5 0.5 L4.5 5 L8.5 0.5" fill="none" stroke="#d0d0d0" stroke-width="1.1"/></svg><div style="left:7px;top:680px;width:467px;height:1px;background:#242424;"></div><div style="left:30px;top:688.5px;height:16px;line-height:16px;color:#dedede;font-size:12.5px;letter-spacing:-0.25px;white-space:nowrap;">Primitive Type</div><div style="left:177px;top:688px;width:194px;height:16px;background:#2a2a2a;border-radius:3px;"></div><div style="left:179px;top:690px;width:12px;height:12px;background:#c8c8c8;border-radius:1px;"></div><div style="left:195px;top:688.5px;height:16px;line-height:16px;color:#ececec;font-size:12.5px;letter-spacing:-0.25px;white-space:nowrap;">Rectangle</div><svg style="left:359px;top:693px;" width="9" height="6" viewBox="0 0 9 6"><path d="M0.5 0.5 L4.5 5 L8.5 0.5" fill="none" stroke="#d0d0d0" stroke-width="1.1"/></svg><div style="left:23px;top:703px;width:383px;height:29px;background:#b8e62e;"></div><div style="left:26px;top:706px;width:377px;height:23px;background:#505050;"></div><svg style="left:30.4px;top:712.9px;" width="9.2" height="9.2" viewBox="0 0 9.2 9.2"><circle cx="4.6" cy="4.6" r="3.6" fill="none" stroke="#777" stroke-width="1"/></svg><div style="left:46px;top:710.5px;height:16px;line-height:16px;color:#ececec;font-size:12.5px;letter-spacing:-0.25px;white-space:nowrap;">Size</div><div style="left:177px;top:710px;width:94px;height:16px;background:#272727;border-radius:3px;"></div><div style="left:179px;top:710.5px;height:16px;line-height:16px;color:#6e6e6e;font-size:12.5px;letter-spacing:-0.3px;white-space:nowrap;">W</div><div style="left:194px;top:710.5px;height:16px;line-height:16px;color:#ececec;font-size:12.5px;letter-spacing:-0.25px;white-space:nowrap;">200.0</div><div style="left:277px;top:710px;width:94px;height:16px;background:#272727;border-radius:3px;"></div><div style="left:281px;top:710.5px;height:16px;line-height:16px;color:#6e6e6e;font-size:12.5px;letter-spacing:-0.3px;white-space:nowrap;">H</div><div style="left:294px;top:710.5px;height:16px;line-height:16px;color:#ececec;font-size:12.5px;letter-spacing:-0.25px;white-space:nowrap;">200.0</div><div style="left:377px;top:710px;width:15px;height:16px;background:#2a2a2a;border-radius:4px;border:1px solid #1a1a1a;"></div><svg style="left:381px;top:712.5px;" width="7" height="11" viewBox="0 0 7 11"><path d="M0.8 3.4 V2.6 Q0.8 0.6 3.5 0.6 Q6.2 0.6 6.2 2.6 V3.4 M0.8 7.6 V8.4 Q0.8 10.4 3.5 10.4 Q6.2 10.4 6.2 8.4 V7.6" fill="none" stroke="#b8b8b8" stroke-width="1.1"/></svg><svg style="left:30.4px;top:734.9px;" width="9.2" height="9.2" viewBox="0 0 9.2 9.2"><circle cx="4.6" cy="4.6" r="3.6" fill="none" stroke="#8c8c8c" stroke-width="1"/></svg><div style="left:46px;top:732.5px;height:16px;line-height:16px;color:#dedede;font-size:12.5px;letter-spacing:-0.25px;white-space:nowrap;">Corner Radius Mode</div><div class="dd" style="left:177px;top:733px;width:193px;height:14px;"></div><div style="left:180px;top:732.5px;height:16px;line-height:16px;color:#f0f0f0;font-size:12.5px;letter-spacing:-0.25px;white-space:nowrap;">All</div><svg style="left:357px;top:737px;" width="9" height="6" viewBox="0 0 9 6"><path d="M0.5 0.5 L4.5 5 L8.5 0.5" fill="none" stroke="#d0d0d0" stroke-width="1.1"/></svg><svg style="left:30.4px;top:756.9px;" width="9.2" height="9.2" viewBox="0 0 9.2 9.2"><circle cx="4.6" cy="4.6" r="3.6" fill="none" stroke="#8c8c8c" stroke-width="1"/></svg><div style="left:46px;top:754.5px;height:16px;line-height:16px;color:#dedede;font-size:12.5px;letter-spacing:-0.25px;white-space:nowrap;">Corner Radius</div><div style="left:177px;top:754px;width:94px;height:16px;background:#272727;border-radius:3px;"></div><div style="left:181px;top:754.5px;height:16px;line-height:16px;color:#707070;font-size:11px;letter-spacing:-0.3px;white-space:nowrap;">#</div><div style="left:194px;top:754.5px;height:16px;line-height:16px;color:#ececec;font-size:12.5px;letter-spacing:-0.25px;white-space:nowrap;">0.0</div><svg style="left:30.4px;top:778.9px;" width="9.2" height="9.2" viewBox="0 0 9.2 9.2"><circle cx="4.6" cy="4.6" r="3.6" fill="none" stroke="#8c8c8c" stroke-width="1"/></svg><div style="left:46px;top:776.5px;height:16px;line-height:16px;color:#9a9a9a;font-size:12.5px;letter-spacing:-0.25px;white-space:nowrap;">Top Radii</div><div style="left:177px;top:776px;width:94px;height:16px;background:#2e2e2e;border-radius:3px;"></div><div style="left:181px;top:776.5px;height:16px;line-height:16px;color:#4e4e4e;font-size:12.5px;letter-spacing:-0.3px;white-space:nowrap;">L</div><div style="left:194px;top:776.5px;height:16px;line-height:16px;color:#8e8e8e;font-size:12.5px;letter-spacing:-0.25px;white-space:nowrap;">5.0</div><div style="left:277px;top:776px;width:94px;height:16px;background:#2e2e2e;border-radius:3px;"></div><div style="left:281px;top:776.5px;height:16px;line-height:16px;color:#4e4e4e;font-size:12.5px;letter-spacing:-0.3px;white-space:nowrap;">R</div><div style="left:294px;top:776.5px;height:16px;line-height:16px;color:#8e8e8e;font-size:12.5px;letter-spacing:-0.25px;white-space:nowrap;">5.0</div><svg style="left:30.4px;top:800.9px;" width="9.2" height="9.2" viewBox="0 0 9.2 9.2"><circle cx="4.6" cy="4.6" r="3.6" fill="none" stroke="#8c8c8c" stroke-width="1"/></svg><div style="left:46px;top:798.5px;height:16px;line-height:16px;color:#9a9a9a;font-size:12.5px;letter-spacing:-0.25px;white-space:nowrap;">Bottom Radii</div><div style="left:177px;top:798px;width:94px;height:16px;background:#2e2e2e;border-radius:3px;"></div><div style="left:181px;top:798.5px;height:16px;line-height:16px;color:#4e4e4e;font-size:12.5px;letter-spacing:-0.3px;white-space:nowrap;">L</div><div style="left:194px;top:798.5px;height:16px;line-height:16px;color:#8e8e8e;font-size:12.5px;letter-spacing:-0.25px;white-space:nowrap;">5.0</div><div style="left:277px;top:798px;width:94px;height:16px;background:#2e2e2e;border-radius:3px;"></div><div style="left:281px;top:798.5px;height:16px;line-height:16px;color:#4e4e4e;font-size:12.5px;letter-spacing:-0.3px;white-space:nowrap;">R</div><div style="left:294px;top:798.5px;height:16px;line-height:16px;color:#8e8e8e;font-size:12.5px;letter-spacing:-0.25px;white-space:nowrap;">5.0</div><svg style="left:30.4px;top:822.9px;" width="9.2" height="9.2" viewBox="0 0 9.2 9.2"><circle cx="4.6" cy="4.6" r="3.6" fill="none" stroke="#8c8c8c" stroke-width="1"/></svg><div style="left:46px;top:820.5px;height:16px;line-height:16px;color:#dedede;font-size:12.5px;letter-spacing:-0.25px;white-space:nowrap;">Chamfer</div><div style="left:177px;top:820px;width:16px;height:16px;background:#272727;border-radius:3px;"></div><svg style="left:30.4px;top:844.9px;" width="9.2" height="9.2" viewBox="0 0 9.2 9.2"><circle cx="4.6" cy="4.6" r="3.6" fill="none" stroke="#8c8c8c" stroke-width="1"/></svg><div style="left:46px;top:842.5px;height:16px;line-height:16px;color:#dedede;font-size:12.5px;letter-spacing:-0.25px;white-space:nowrap;">Edge Divisions</div><div style="left:177px;top:842px;width:94px;height:16px;background:#272727;border-radius:3px;"></div><div style="left:179px;top:842.5px;height:16px;line-height:16px;color:#707070;font-size:12.5px;letter-spacing:-0.3px;white-space:nowrap;">W</div><div style="left:194px;top:842.5px;height:16px;line-height:16px;color:#ececec;font-size:12.5px;letter-spacing:-0.25px;white-space:nowrap;">0</div><div style="left:277px;top:842px;width:94px;height:16px;background:#272727;border-radius:3px;"></div><div style="left:281px;top:842.5px;height:16px;line-height:16px;color:#707070;font-size:12.5px;letter-spacing:-0.3px;white-space:nowrap;">H</div><div style="left:294px;top:842.5px;height:16px;line-height:16px;color:#ececec;font-size:12.5px;letter-spacing:-0.25px;white-space:nowrap;">0</div><div style="left:377px;top:842px;width:15px;height:16px;background:#2a2a2a;border-radius:4px;border:1px solid #1a1a1a;"></div><svg style="left:381px;top:844.5px;" width="7" height="11" viewBox="0 0 7 11"><path d="M0.8 3.4 V2.6 Q0.8 0.6 3.5 0.6 Q6.2 0.6 6.2 2.6 V3.4 M0.8 7.6 V8.4 Q0.8 10.4 3.5 10.4 Q6.2 10.4 6.2 8.4 V7.6" fill="none" stroke="#b8b8b8" stroke-width="1.1"/></svg><svg style="left:30.4px;top:866.9px;" width="9.2" height="9.2" viewBox="0 0 9.2 9.2"><circle cx="4.6" cy="4.6" r="3.6" fill="none" stroke="#8c8c8c" stroke-width="1"/></svg><div style="left:46px;top:864.5px;height:16px;line-height:16px;color:#dedede;font-size:12.5px;letter-spacing:-0.25px;white-space:nowrap;">Vectorize</div><div style="left:177px;top:864px;width:16px;height:16px;background:#272727;border-radius:3px;"></div><svg style="left:30.4px;top:888.9px;" width="9.2" height="9.2" viewBox="0 0 9.2 9.2"><circle cx="4.6" cy="4.6" r="3.6" fill="none" stroke="#8c8c8c" stroke-width="1"/></svg><div style="left:46px;top:886.5px;height:16px;line-height:16px;color:#9a9a9a;font-size:12.5px;letter-spacing:-0.25px;white-space:nowrap;">Corner Divisions</div><div style="left:177px;top:886px;width:94px;height:16px;background:#2e2e2e;border-radius:3px;"></div><div style="left:181px;top:886.5px;height:16px;line-height:16px;color:#4e4e4e;font-size:11px;letter-spacing:-0.3px;white-space:nowrap;">#</div><div style="left:194px;top:886.5px;height:16px;line-height:16px;color:#8e8e8e;font-size:12.5px;letter-spacing:-0.25px;white-space:nowrap;">8</div><div style="left:494px;top:85px;width:30px;height:495px;background:#464646;"></div><svg style="left:503px;top:88px;" width="12" height="3" viewBox="0 0 12 3"><circle cx="1.5" cy="1.5" r="1" fill="#9a9a9a"/><circle cx="6" cy="1.5" r="1" fill="#9a9a9a"/><circle cx="10.5" cy="1.5" r="1" fill="#9a9a9a"/></svg><div style="left:495px;top:96px;width:28px;height:28px;background:#141414;border-radius:4px;"></div><svg style="left:499px;top:99px;" width="20" height="20" viewBox="0 0 20 20"><path d="M4.800 0.800 V17.800 L8.600 14.300 L11 20 L13.700 18.800 L11.300 13.300 L17 13 Z" fill="none" stroke="#35d07a" stroke-width="1.3" stroke-linejoin="round"/></svg><svg style="left:499px;top:130px;" width="20" height="20" viewBox="0 0 20 20"><path d="M3.500 0 L18.500 9.500 L9.500 10.800 L4 19.500 Z" fill="#e4e4e4"/></svg><svg style="left:499px;top:160px;" width="20" height="20" viewBox="0 0 20 20"><path d="M3 2.5 L11 4 L16 10 L12 14 L6 10 Z" fill="#e4e4e4"/><path d="M3 2.5 L9.5 9" stroke="#464646" stroke-width="1"/><circle cx="9.8" cy="9.3" r="1.4" fill="#464646"/><path d="M12.5 15 L17 10.5 L18.5 12 L14 16.5 Z" fill="#e4e4e4"/></svg><svg style="left:499px;top:190px;" width="20" height="20" viewBox="0 0 20 20"><path d="M3 17 L4 13.5 L14 3.5 L16.5 6 L6.5 16 Z" fill="#e4e4e4"/><path d="M15 2.5 Q16.5 1 18 2.5 Q19 4 17.5 5 Z" fill="#e4e4e4"/><circle cx="2.3" cy="18" r="0.8" fill="#e4e4e4"/></svg><svg style="left:499px;top:220px;" width="20" height="20" viewBox="0 0 20 20"><rect x="1" y="5" width="12" height="11" rx="1.5" fill="#e4e4e4"/><path d="M13.5 10.5 L19 6.5 V15 Z" fill="#e4e4e4"/><rect x="3" y="3.5" width="6" height="2" fill="#e4e4e4"/><circle cx="4.5" cy="8.5" r="1.3" fill="#464646"/></svg><svg style="left:499px;top:250px;" width="20" height="20" viewBox="0 0 20 20"><path d="M2 18 L18 2.5" stroke="#e4e4e4" stroke-width="1.1"/></svg><svg style="left:499px;top:280px;" width="20" height="20" viewBox="0 0 20 20"><path d="M2.5 3 H17.5 V6.5 H12 V18 H8 V6.5 H2.5 Z" fill="#e4e4e4"/></svg><svg style="left:499px;top:310px;" width="20" height="20" viewBox="0 0 20 20"><path d="M3 2 L12 6.5 L7 8 L4.5 12.5 Z" fill="#e4e4e4"/><path d="M13 3.5 L16.5 3 L18.5 17.5 L2.5 18 L3 14.5" stroke="#e4e4e4" stroke-width="1" fill="none" stroke-dasharray="5 2"/><rect x="1.5" y="17" width="2" height="2" fill="#e4e4e4"/><rect x="17.5" y="16.5" width="2" height="2" fill="#e4e4e4"/><rect x="15.5" y="2" width="2" height="2" fill="#e4e4e4"/></svg><svg style="left:499px;top:340px;" width="20" height="20" viewBox="0 0 20 20"><rect x="2.5" y="2.5" width="15" height="15" fill="#e4e4e4"/></svg><svg style="left:499px;top:370px;" width="20" height="20" viewBox="0 0 20 20"><circle cx="10" cy="10" r="8" fill="#e4e4e4"/></svg><svg style="left:499px;top:400px;" width="20" height="20" viewBox="0 0 20 20"><path d="M10 1.5 L18.5 7.5 L15.5 17.5 H4.5 L1.5 7.5 Z" fill="#e4e4e4"/></svg><svg style="left:499px;top:430px;" width="20" height="20" viewBox="0 0 20 20"><path d="M10 1 L12.6 7.2 L19.3 7.8 L14.2 12.2 L15.8 18.8 L10 15.2 L4.2 18.8 L5.8 12.2 L0.7 7.8 L7.4 7.2 Z" fill="#e4e4e4"/></svg><svg style="left:499px;top:460px;" width="20" height="20" viewBox="0 0 20 20"><path d="M3.5 11 A6.5 6.5 0 1 1 10 17.5" fill="none" stroke="#e4e4e4" stroke-width="3"/><path d="M6 15 L11 14 L11 19.5 Z" fill="#e4e4e4"/></svg><svg style="left:499px;top:490px;" width="20" height="20" viewBox="0 0 20 20"><path d="M10 1 Q11 8 19 10 Q11 12 10 19 Q9 12 1 10 Q9 8 10 1 Z" fill="#e4e4e4"/></svg><svg style="left:499px;top:520px;" width="20" height="20" viewBox="0 0 20 20"><polygon points="18.89,8.57 18.89,11.43 16.36,12.40 16.19,12.81 17.30,15.27 15.27,17.30 12.81,16.19 12.40,16.36 11.43,18.89 8.57,18.89 7.60,16.36 7.19,16.19 4.73,17.30 2.70,15.27 3.81,12.81 3.64,12.40 1.11,11.43 1.11,8.57 3.64,7.60 3.81,7.19 2.70,4.73 4.73,2.70 7.19,3.81 7.60,3.64 8.57,1.11 11.43,1.11 12.40,3.64 12.81,3.81 15.27,2.70 17.30,4.73 16.19,7.19 16.36,7.60" fill="#e4e4e4"/><circle cx="10" cy="10" r="3" fill="#464646"/></svg><svg style="left:502px;top:565px;" width="14" height="11" viewBox="0 0 14 11"><path d="M1 0.5 L6 5.5 L1 10.5 M7.5 0.5 L12.5 5.5 L7.5 10.5" fill="none" stroke="#b8b8b8" stroke-width="1.1"/></svg><div style="left:530px;top:85px;width:1057px;height:22px;background:#1c1c1c;"></div><div style="left:530px;top:85px;width:87px;height:22px;background:#464646;border-radius:4px 4px 0 0;"></div><div style="left:535px;top:88.5px;height:16px;line-height:16px;color:#e4e4e4;font-size:12.5px;letter-spacing:-0.25px;white-space:nowrap;">Composition 1</div><div style="left:530px;top:107px;width:1057px;height:473px;background:#464646;"></div><div style="left:550px;top:127px;width:1037px;height:431px;background:#000;"></div><svg style="left:530px;top:107px;" width="1057" height="20" viewBox="0 0 1057 20"><path d="M25.9 13 V20" stroke="#9a9a9a" stroke-width="1"/><path d="M37.3 16.5 V20" stroke="#8a8a8a" stroke-width="1"/><path d="M48.7 16.5 V20" stroke="#8a8a8a" stroke-width="1"/><path d="M60.1 16.5 V20" stroke="#8a8a8a" stroke-width="1"/><path d="M71.5 16.5 V20" stroke="#8a8a8a" stroke-width="1"/><path d="M82.9 13 V20" stroke="#9a9a9a" stroke-width="1"/><path d="M94.3 16.5 V20" stroke="#8a8a8a" stroke-width="1"/><path d="M105.7 16.5 V20" stroke="#8a8a8a" stroke-width="1"/><path d="M117.1 16.5 V20" stroke="#8a8a8a" stroke-width="1"/><path d="M128.5 16.5 V20" stroke="#8a8a8a" stroke-width="1"/><path d="M139.9 13 V20" stroke="#9a9a9a" stroke-width="1"/><path d="M151.3 16.5 V20" stroke="#8a8a8a" stroke-width="1"/><path d="M162.7 16.5 V20" stroke="#8a8a8a" stroke-width="1"/><path d="M174.1 16.5 V20" stroke="#8a8a8a" stroke-width="1"/><path d="M185.5 16.5 V20" stroke="#8a8a8a" stroke-width="1"/><path d="M196.9 13 V20" stroke="#9a9a9a" stroke-width="1"/><path d="M208.3 16.5 V20" stroke="#8a8a8a" stroke-width="1"/><path d="M219.7 16.5 V20" stroke="#8a8a8a" stroke-width="1"/><path d="M231.1 16.5 V20" stroke="#8a8a8a" stroke-width="1"/><path d="M242.5 16.5 V20" stroke="#8a8a8a" stroke-width="1"/><path d="M253.9 13 V20" stroke="#9a9a9a" stroke-width="1"/><path d="M265.3 16.5 V20" stroke="#8a8a8a" stroke-width="1"/><path d="M276.7 16.5 V20" stroke="#8a8a8a" stroke-width="1"/><path d="M288.1 16.5 V20" stroke="#8a8a8a" stroke-width="1"/><path d="M299.5 16.5 V20" stroke="#8a8a8a" stroke-width="1"/><path d="M310.9 13 V20" stroke="#9a9a9a" stroke-width="1"/><path d="M322.3 16.5 V20" stroke="#8a8a8a" stroke-width="1"/><path d="M333.7 16.5 V20" stroke="#8a8a8a" stroke-width="1"/><path d="M345.1 16.5 V20" stroke="#8a8a8a" stroke-width="1"/><path d="M356.5 16.5 V20" stroke="#8a8a8a" stroke-width="1"/><path d="M367.9 13 V20" stroke="#9a9a9a" stroke-width="1"/><path d="M379.3 16.5 V20" stroke="#8a8a8a" stroke-width="1"/><path d="M390.7 16.5 V20" stroke="#8a8a8a" stroke-width="1"/><path d="M402.1 16.5 V20" stroke="#8a8a8a" stroke-width="1"/><path d="M413.5 16.5 V20" stroke="#8a8a8a" stroke-width="1"/><path d="M424.9 13 V20" stroke="#9a9a9a" stroke-width="1"/><path d="M436.3 16.5 V20" stroke="#8a8a8a" stroke-width="1"/><path d="M447.7 16.5 V20" stroke="#8a8a8a" stroke-width="1"/><path d="M459.1 16.5 V20" stroke="#8a8a8a" stroke-width="1"/><path d="M470.5 16.5 V20" stroke="#8a8a8a" stroke-width="1"/><path d="M481.9 13 V20" stroke="#9a9a9a" stroke-width="1"/><path d="M493.3 16.5 V20" stroke="#8a8a8a" stroke-width="1"/><path d="M504.7 16.5 V20" stroke="#8a8a8a" stroke-width="1"/><path d="M516.1 16.5 V20" stroke="#8a8a8a" stroke-width="1"/><path d="M527.5 16.5 V20" stroke="#8a8a8a" stroke-width="1"/><path d="M538.9 13 V20" stroke="#9a9a9a" stroke-width="1"/><path d="M550.3 16.5 V20" stroke="#8a8a8a" stroke-width="1"/><path d="M561.7 16.5 V20" stroke="#8a8a8a" stroke-width="1"/><path d="M573.1 16.5 V20" stroke="#8a8a8a" stroke-width="1"/><path d="M584.5 16.5 V20" stroke="#8a8a8a" stroke-width="1"/><path d="M595.9 13 V20" stroke="#9a9a9a" stroke-width="1"/><path d="M607.3 16.5 V20" stroke="#8a8a8a" stroke-width="1"/><path d="M618.7 16.5 V20" stroke="#8a8a8a" stroke-width="1"/><path d="M630.1 16.5 V20" stroke="#8a8a8a" stroke-width="1"/><path d="M641.5 16.5 V20" stroke="#8a8a8a" stroke-width="1"/><path d="M652.9 13 V20" stroke="#9a9a9a" stroke-width="1"/><path d="M664.3 16.5 V20" stroke="#8a8a8a" stroke-width="1"/><path d="M675.7 16.5 V20" stroke="#8a8a8a" stroke-width="1"/><path d="M687.1 16.5 V20" stroke="#8a8a8a" stroke-width="1"/><path d="M698.5 16.5 V20" stroke="#8a8a8a" stroke-width="1"/><path d="M709.9 13 V20" stroke="#9a9a9a" stroke-width="1"/><path d="M721.3 16.5 V20" stroke="#8a8a8a" stroke-width="1"/><path d="M732.7 16.5 V20" stroke="#8a8a8a" stroke-width="1"/><path d="M744.1 16.5 V20" stroke="#8a8a8a" stroke-width="1"/><path d="M755.5 16.5 V20" stroke="#8a8a8a" stroke-width="1"/><path d="M766.9 13 V20" stroke="#9a9a9a" stroke-width="1"/><path d="M778.3 16.5 V20" stroke="#8a8a8a" stroke-width="1"/><path d="M789.7 16.5 V20" stroke="#8a8a8a" stroke-width="1"/><path d="M801.1 16.5 V20" stroke="#8a8a8a" stroke-width="1"/><path d="M812.5 16.5 V20" stroke="#8a8a8a" stroke-width="1"/><path d="M823.9 13 V20" stroke="#9a9a9a" stroke-width="1"/><path d="M835.3 16.5 V20" stroke="#8a8a8a" stroke-width="1"/><path d="M846.7 16.5 V20" stroke="#8a8a8a" stroke-width="1"/><path d="M858.1 16.5 V20" stroke="#8a8a8a" stroke-width="1"/><path d="M869.5 16.5 V20" stroke="#8a8a8a" stroke-width="1"/><path d="M880.9 13 V20" stroke="#9a9a9a" stroke-width="1"/><path d="M892.3 16.5 V20" stroke="#8a8a8a" stroke-width="1"/><path d="M903.7 16.5 V20" stroke="#8a8a8a" stroke-width="1"/><path d="M915.1 16.5 V20" stroke="#8a8a8a" stroke-width="1"/><path d="M926.5 16.5 V20" stroke="#8a8a8a" stroke-width="1"/><path d="M937.9 13 V20" stroke="#9a9a9a" stroke-width="1"/><path d="M949.3 16.5 V20" stroke="#8a8a8a" stroke-width="1"/><path d="M960.7 16.5 V20" stroke="#8a8a8a" stroke-width="1"/><path d="M972.1 16.5 V20" stroke="#8a8a8a" stroke-width="1"/><path d="M983.5 16.5 V20" stroke="#8a8a8a" stroke-width="1"/><path d="M994.9 13 V20" stroke="#9a9a9a" stroke-width="1"/><path d="M1006.3 16.5 V20" stroke="#8a8a8a" stroke-width="1"/><path d="M1017.7 16.5 V20" stroke="#8a8a8a" stroke-width="1"/><path d="M1029.1 16.5 V20" stroke="#8a8a8a" stroke-width="1"/><path d="M1040.5 16.5 V20" stroke="#8a8a8a" stroke-width="1"/><path d="M1051.9 13 V20" stroke="#9a9a9a" stroke-width="1"/></svg><div style="left:588.0px;top:109.6px;height:12px;line-height:12px;color:#b4b4b4;font-size:10.2px;letter-spacing:0.2px;white-space:nowrap;width:50px;text-align:center;">-1200</div><div style="left:645.0px;top:109.6px;height:12px;line-height:12px;color:#b4b4b4;font-size:10.2px;letter-spacing:0.2px;white-space:nowrap;width:50px;text-align:center;">-1050</div><div style="left:702.0px;top:109.6px;height:12px;line-height:12px;color:#b4b4b4;font-size:10.2px;letter-spacing:0.2px;white-space:nowrap;width:50px;text-align:center;">-900</div><div style="left:759.0px;top:109.6px;height:12px;line-height:12px;color:#b4b4b4;font-size:10.2px;letter-spacing:0.2px;white-space:nowrap;width:50px;text-align:center;">-750</div><div style="left:816.0px;top:109.6px;height:12px;line-height:12px;color:#b4b4b4;font-size:10.2px;letter-spacing:0.2px;white-space:nowrap;width:50px;text-align:center;">-600</div><div style="left:873.0px;top:109.6px;height:12px;line-height:12px;color:#b4b4b4;font-size:10.2px;letter-spacing:0.2px;white-space:nowrap;width:50px;text-align:center;">-450</div><div style="left:930.0px;top:109.6px;height:12px;line-height:12px;color:#b4b4b4;font-size:10.2px;letter-spacing:0.2px;white-space:nowrap;width:50px;text-align:center;">-300</div><div style="left:987.0px;top:109.6px;height:12px;line-height:12px;color:#b4b4b4;font-size:10.2px;letter-spacing:0.2px;white-space:nowrap;width:50px;text-align:center;">-150</div><div style="left:1044.0px;top:109.6px;height:12px;line-height:12px;color:#b4b4b4;font-size:10.2px;letter-spacing:0.2px;white-space:nowrap;width:50px;text-align:center;">0</div><div style="left:1101.0px;top:109.6px;height:12px;line-height:12px;color:#b4b4b4;font-size:10.2px;letter-spacing:0.2px;white-space:nowrap;width:50px;text-align:center;">150</div><div style="left:1158.0px;top:109.6px;height:12px;line-height:12px;color:#b4b4b4;font-size:10.2px;letter-spacing:0.2px;white-space:nowrap;width:50px;text-align:center;">300</div><div style="left:1215.0px;top:109.6px;height:12px;line-height:12px;color:#b4b4b4;font-size:10.2px;letter-spacing:0.2px;white-space:nowrap;width:50px;text-align:center;">450</div><div style="left:1272.0px;top:109.6px;height:12px;line-height:12px;color:#b4b4b4;font-size:10.2px;letter-spacing:0.2px;white-space:nowrap;width:50px;text-align:center;">600</div><div style="left:1329.0px;top:109.6px;height:12px;line-height:12px;color:#b4b4b4;font-size:10.2px;letter-spacing:0.2px;white-space:nowrap;width:50px;text-align:center;">750</div><div style="left:1386.0px;top:109.6px;height:12px;line-height:12px;color:#b4b4b4;font-size:10.2px;letter-spacing:0.2px;white-space:nowrap;width:50px;text-align:center;">900</div><div style="left:1443.0px;top:109.6px;height:12px;line-height:12px;color:#b4b4b4;font-size:10.2px;letter-spacing:0.2px;white-space:nowrap;width:50px;text-align:center;">1050</div><div style="left:1500.0px;top:109.6px;height:12px;line-height:12px;color:#b4b4b4;font-size:10.2px;letter-spacing:0.2px;white-space:nowrap;width:50px;text-align:center;">1200</div><div style="left:1567px;top:109.6px;height:12px;line-height:12px;color:#b4b4b4;font-size:10.2px;letter-spacing:0.2px;white-space:nowrap;width:20px;text-align:right;overflow:hidden;">135</div><div style="left:535.8px;top:109.6px;height:16px;line-height:16px;color:#b4b4b4;font-size:10.2px;letter-spacing:0px;white-space:nowrap;">px</div><svg style="left:530px;top:127px;" width="20" height="431" viewBox="0 0 20 431"><path d="M16.5 420.7 H20" stroke="#8a8a8a" stroke-width="1"/><path d="M16.5 409.3 H20" stroke="#8a8a8a" stroke-width="1"/><path d="M16.5 397.9 H20" stroke="#8a8a8a" stroke-width="1"/><path d="M13 386.5 H20" stroke="#9a9a9a" stroke-width="1"/><path d="M16.5 375.1 H20" stroke="#8a8a8a" stroke-width="1"/><path d="M16.5 363.7 H20" stroke="#8a8a8a" stroke-width="1"/><path d="M16.5 352.3 H20" stroke="#8a8a8a" stroke-width="1"/><path d="M16.5 340.9 H20" stroke="#8a8a8a" stroke-width="1"/><path d="M13 329.5 H20" stroke="#9a9a9a" stroke-width="1"/><path d="M16.5 318.1 H20" stroke="#8a8a8a" stroke-width="1"/><path d="M16.5 306.7 H20" stroke="#8a8a8a" stroke-width="1"/><path d="M16.5 295.3 H20" stroke="#8a8a8a" stroke-width="1"/><path d="M16.5 283.9 H20" stroke="#8a8a8a" stroke-width="1"/><path d="M13 272.5 H20" stroke="#9a9a9a" stroke-width="1"/><path d="M16.5 261.1 H20" stroke="#8a8a8a" stroke-width="1"/><path d="M16.5 249.7 H20" stroke="#8a8a8a" stroke-width="1"/><path d="M16.5 238.3 H20" stroke="#8a8a8a" stroke-width="1"/><path d="M16.5 226.9 H20" stroke="#8a8a8a" stroke-width="1"/><path d="M13 215.5 H20" stroke="#9a9a9a" stroke-width="1"/><path d="M16.5 204.1 H20" stroke="#8a8a8a" stroke-width="1"/><path d="M16.5 192.7 H20" stroke="#8a8a8a" stroke-width="1"/><path d="M16.5 181.3 H20" stroke="#8a8a8a" stroke-width="1"/><path d="M16.5 169.9 H20" stroke="#8a8a8a" stroke-width="1"/><path d="M13 158.5 H20" stroke="#9a9a9a" stroke-width="1"/><path d="M16.5 147.1 H20" stroke="#8a8a8a" stroke-width="1"/><path d="M16.5 135.7 H20" stroke="#8a8a8a" stroke-width="1"/><path d="M16.5 124.3 H20" stroke="#8a8a8a" stroke-width="1"/><path d="M16.5 112.9 H20" stroke="#8a8a8a" stroke-width="1"/><path d="M13 101.5 H20" stroke="#9a9a9a" stroke-width="1"/><path d="M16.5 90.1 H20" stroke="#8a8a8a" stroke-width="1"/><path d="M16.5 78.7 H20" stroke="#8a8a8a" stroke-width="1"/><path d="M16.5 67.3 H20" stroke="#8a8a8a" stroke-width="1"/><path d="M16.5 55.9 H20" stroke="#8a8a8a" stroke-width="1"/><path d="M13 44.5 H20" stroke="#9a9a9a" stroke-width="1"/><path d="M16.5 33.1 H20" stroke="#8a8a8a" stroke-width="1"/><path d="M16.5 21.7 H20" stroke="#8a8a8a" stroke-width="1"/><path d="M16.5 10.3 H20" stroke="#8a8a8a" stroke-width="1"/></svg><div style="left:513.3px;top:507.5px;width:50px;height:12px;line-height:12px;font-size:10.2px;letter-spacing:0.2px;color:#b4b4b4;text-align:center;transform:rotate(-90deg);">-450</div><div style="left:513.3px;top:450.5px;width:50px;height:12px;line-height:12px;font-size:10.2px;letter-spacing:0.2px;color:#b4b4b4;text-align:center;transform:rotate(-90deg);">-300</div><div style="left:513.3px;top:393.5px;width:50px;height:12px;line-height:12px;font-size:10.2px;letter-spacing:0.2px;color:#b4b4b4;text-align:center;transform:rotate(-90deg);">-150</div><div style="left:513.3px;top:336.5px;width:50px;height:12px;line-height:12px;font-size:10.2px;letter-spacing:0.2px;color:#b4b4b4;text-align:center;transform:rotate(-90deg);">0</div><div style="left:513.3px;top:279.5px;width:50px;height:12px;line-height:12px;font-size:10.2px;letter-spacing:0.2px;color:#b4b4b4;text-align:center;transform:rotate(-90deg);">150</div><div style="left:513.3px;top:222.5px;width:50px;height:12px;line-height:12px;font-size:10.2px;letter-spacing:0.2px;color:#b4b4b4;text-align:center;transform:rotate(-90deg);">300</div><div style="left:513.3px;top:165.5px;width:50px;height:12px;line-height:12px;font-size:10.2px;letter-spacing:0.2px;color:#b4b4b4;text-align:center;transform:rotate(-90deg);">450</div><svg style="left:550px;top:127px;" width="1037" height="431" viewBox="0 0 1037 431"><rect x="154" y="10" width="728" height="410" fill="#fff"/><path d="M62.5 0 L62.5 431" stroke="#5a5a5a" stroke-width="1"/><path d="M112.5 0 L112.5 431" stroke="#5a5a5a" stroke-width="1"/><path d="M923.5 0 L923.5 431" stroke="#5a5a5a" stroke-width="1"/><path d="M973.5 0 L973.5 431" stroke="#5a5a5a" stroke-width="1"/><path d="M62.5 121 L154 121" stroke="#5a5a5a" stroke-width="1"/><path d="M882 121 L973.5 121" stroke="#5a5a5a" stroke-width="1"/><path d="M62.5 308 L154 308" stroke="#5a5a5a" stroke-width="1"/><path d="M882 308 L973.5 308" stroke="#5a5a5a" stroke-width="1"/><path d="M383 0 L383 10" stroke="#5a5a5a" stroke-width="1"/><path d="M383 420 L383 431" stroke="#5a5a5a" stroke-width="1"/><path d="M383 10 L383 420" stroke="#111" stroke-width="2.6"/><path d="M653 0 L653 10" stroke="#5a5a5a" stroke-width="1"/><path d="M653 420 L653 431" stroke="#5a5a5a" stroke-width="1"/><path d="M653 10 L653 420" stroke="#111" stroke-width="2.6"/><path d="M154 121 L882 121" stroke="#111" stroke-width="2.6"/><path d="M154 308 L882 308" stroke="#111" stroke-width="2.6"/><rect x="385" y="123" width="266" height="183.5" fill="#666"/><rect x="385.5" y="123.5" width="265" height="182.500" rx="20.500" fill="#00fbc8" stroke="#1a1a1a" stroke-width="1.100"/><rect x="384.5" y="122.5" width="267" height="184.5" fill="none" stroke="#2f9e3c" stroke-width="1"/><rect x="480" y="177" width="76" height="76" fill="#666"/><rect x="480.5" y="177.5" width="75" height="75" fill="none" stroke="#58c890" stroke-width="1"/><rect x="478.0" y="175.0" width="5" height="5" fill="#fff" stroke="#d8d8d8" stroke-width="0.6"/><rect x="553.0" y="175.0" width="5" height="5" fill="#fff" stroke="#d8d8d8" stroke-width="0.6"/><rect x="478.0" y="250.0" width="5" height="5" fill="#fff" stroke="#d8d8d8" stroke-width="0.6"/><rect x="553.0" y="250.0" width="5" height="5" fill="#fff" stroke="#d8d8d8" stroke-width="0.6"/><circle cx="518" cy="215" r="3.8" fill="none" stroke="#454545" stroke-width="0.9"/><circle cx="518" cy="215" r="1" fill="#454545"/><rect x="384" y="107" width="9" height="9" fill="#ffe37a"/><rect x="480" y="161" width="9" height="9" fill="#ffe37a"/></svg><div style="left:946px;top:230.5px;height:16px;line-height:16px;color:#000;font-size:12px;letter-spacing:0px;white-space:nowrap;text-shadow:0 0 1px #fff;">RectangleBG</div><div style="left:1042px;top:285.0px;height:16px;line-height:16px;color:#000;font-size:12px;letter-spacing:0px;white-space:nowrap;-webkit-text-stroke:0.350px #000;">SquaresOnShape</div><div style="left:569px;top:460.5px;height:14px;line-height:14px;color:#fff;font-size:12.5px;letter-spacing:-0.42px;white-space:nowrap;"><span style="color:#f4f4f4">Hold S</span> <span style="color:rgba(150,150,150,.55)">Direct Layer Selection</span></div><div style="left:569px;top:474.5px;height:14px;line-height:14px;color:#fff;font-size:12.5px;letter-spacing:-0.42px;white-space:nowrap;"><span style="color:#f4f4f4">Space</span> <span style="color:rgba(150,150,150,.55)">Play/ Stop</span></div><div style="left:569px;top:488.5px;height:14px;line-height:14px;color:#fff;font-size:12.5px;letter-spacing:-0.42px;white-space:nowrap;"><span style="color:#f4f4f4">Space + click + drag</span> <span style="color:rgba(150,150,150,.55)">Pan</span></div><div style="left:569px;top:502.5px;height:14px;line-height:14px;color:#fff;font-size:12.5px;letter-spacing:-0.42px;white-space:nowrap;"><span style="color:#f4f4f4">Alt + click + drag</span> <span style="color:rgba(150,150,150,.55)">Move Pivot Point</span></div><div style="left:569px;top:516.5px;height:14px;line-height:14px;color:#fff;font-size:12.5px;letter-spacing:-0.42px;white-space:nowrap;"><span style="color:#f4f4f4">Shift</span> <span style="color:rgba(150,150,150,.55)">Enable Snapping</span></div><div style="left:998px;top:535.5px;height:16px;line-height:16px;color:#000;font-size:12.5px;letter-spacing:-0.25px;white-space:nowrap;text-shadow:0 1px 1px #fff,0 0 2px #fff;">Viewport Quality: High</div><div style="left:0;top:-1px;width:1920px;height:0"><div style="left:536px;top:562px;width:77px;height:16px;background:#2a2a2a;border-radius:3px;"></div><div style="left:539px;top:563.0px;height:16px;line-height:16px;color:#e0e0e0;font-size:12.5px;letter-spacing:-0.25px;white-space:nowrap;">38%</div><svg style="left:599px;top:568px;" width="9" height="6" viewBox="0 0 9 6"><path d="M0.5 0.5 L4.5 5 L8.5 0.5" fill="none" stroke="#d0d0d0" stroke-width="1.1"/></svg><div style="left:866px;top:560px;width:101px;height:19px;background:#1e1e1e;border-radius:4px;"></div><div style="left:867px;top:561px;width:19px;height:17px;background:#2b2b2b;border-radius:3px;"></div><svg style="left:869px;top:562.5px;" width="14" height="14" viewBox="0 0 14 14"><path d="M3 2 V12" stroke="#e4e4e4" stroke-width="1.6"/><path d="M12 2 V12 L5 7 Z" fill="#e4e4e4"/></svg><div style="left:887px;top:561px;width:19px;height:17px;background:#2b2b2b;border-radius:3px;"></div><svg style="left:889px;top:562.5px;" width="14" height="14" viewBox="0 0 14 14"><path d="M9 2 V12 L2 7 Z" fill="#e4e4e4"/><path d="M11.5 2 V12" stroke="#e4e4e4" stroke-width="1.6"/></svg><div style="left:907px;top:561px;width:19px;height:17px;background:#2b2b2b;border-radius:3px;"></div><svg style="left:909px;top:562.5px;" width="14" height="14" viewBox="0 0 14 14"><path d="M3.5 2 V12 L11.5 7 Z" fill="#e4e4e4"/></svg><div style="left:927px;top:561px;width:19px;height:17px;background:#2b2b2b;border-radius:3px;"></div><svg style="left:929px;top:562.5px;" width="14" height="14" viewBox="0 0 14 14"><path d="M2.5 2 V12" stroke="#e4e4e4" stroke-width="1.6"/><path d="M5 2 V12 L12 7 Z" fill="#e4e4e4"/></svg><div style="left:947px;top:561px;width:19px;height:17px;background:#2b2b2b;border-radius:3px;"></div><svg style="left:949px;top:562.5px;" width="14" height="14" viewBox="0 0 14 14"><path d="M2 2 V12 L9 7 Z" fill="#e4e4e4"/><path d="M11 2 V12" stroke="#e4e4e4" stroke-width="1.6"/></svg><div style="left:971px;top:560px;width:20px;height:19px;background:#2b2b2b;border-radius:4px;border:1px solid #1c1c1c;"></div><svg style="left:974px;top:563px;" width="14" height="12" viewBox="0 0 14 12"><path d="M1 5 V10.5 H12.5 V4.5 H9" fill="none" stroke="#e4e4e4" stroke-width="1.4"/><path d="M1 5 V4.5 H5" fill="none" stroke="#e4e4e4" stroke-width="1.4"/><path d="M7 1 L10.5 4.5 L7 8 Z" fill="#e4e4e4" transform="translate(0,-0.3)"/></svg><div style="left:1232px;top:561px;width:38px;height:18px;background:#3a3a3a;border-radius:3px;"></div><svg style="left:1234px;top:566px;" width="14" height="8" viewBox="0 0 14 8"><path d="M0 4 L3.5 0 H14 V8 H3.5 Z" fill="#dcdcdc"/><circle cx="4.6" cy="4" r="1.5" fill="#3a3a3a"/></svg><div style="left:1257px;top:562.5px;height:16px;line-height:16px;color:#b8b8b8;font-size:12.5px;letter-spacing:-0.25px;white-space:nowrap;">0</div><div style="left:1272px;top:560px;width:33px;height:19px;background:#2b2b2b;border-radius:4px;border:1px solid #1c1c1c;"></div><svg style="left:1275px;top:563px;" width="16" height="13" viewBox="0 0 16 13"><path d="M0.5 4.5 H3.5 L7.5 1 V12 L3.5 8.5 H0.5 Z" fill="#3fd27c"/><path d="M9.5 3.5 Q11.5 6.5 9.5 9.5 M11.8 1.5 Q15 6.5 11.8 11.5" fill="none" stroke="#3fd27c" stroke-width="1.2"/></svg><div style="left:1293px;top:561px;width:1px;height:17px;background:#1c1c1c;"></div><svg style="left:1296px;top:565.5px;" width="6" height="8" viewBox="0 0 6 8"><path d="M0.6 0.6 L5.2 4 L0.6 7.4 Z" fill="none" stroke="#9a9a9a" stroke-width="0.9"/></svg><div style="left:1307px;top:560px;width:32px;height:19px;background:#2b2b2b;border-radius:4px;border:1px solid #1c1c1c;"></div><svg style="left:1311px;top:563px;" width="14" height="13" viewBox="0 0 14 13"><path d="M3 11.5 L1.8 8 Q0 2.5 5.5 1.3 Q10.5 0.5 12.3 5 L13 7.5 L10.5 8.3 L9.8 6 Q8.8 3.2 6 3.8 Q3.5 4.6 4.5 7.3 L5.5 10.7 Z" fill="#e4e4e4"/></svg><div style="left:1328px;top:561px;width:1px;height:17px;background:#1c1c1c;"></div><svg style="left:1331px;top:565.5px;" width="6" height="8" viewBox="0 0 6 8"><path d="M0.6 0.6 L5.2 4 L0.6 7.4 Z" fill="none" stroke="#9a9a9a" stroke-width="0.9"/></svg><div style="left:1342px;top:560px;width:32px;height:19px;background:#2b2b2b;border-radius:4px;border:1px solid #1c1c1c;"></div><svg style="left:1346px;top:563px;" width="14" height="13" viewBox="0 0 14 13"><path d="M4 0 V13 M10 0 V13 M0 4 H14 M0 9.5 H14" stroke="#e4e4e4" stroke-width="1.1"/></svg><div style="left:1363px;top:561px;width:1px;height:17px;background:#1c1c1c;"></div><svg style="left:1366px;top:565.5px;" width="6" height="8" viewBox="0 0 6 8"><path d="M0.6 0.6 L5.2 4 L0.6 7.4 Z" fill="none" stroke="#9a9a9a" stroke-width="0.9"/></svg><div style="left:1377px;top:560px;width:20px;height:19px;background:#2b2b2b;border-radius:4px;border:1px solid #1c1c1c;"></div><svg style="left:1380px;top:564px;" width="14" height="11" viewBox="0 0 14 11"><rect x="0" y="0" width="3.5" height="4" fill="#3fd27c"/><rect x="5" y="0" width="9" height="4" fill="#3fd27c"/><rect x="0" y="5.5" width="3.5" height="5.5" fill="#3fd27c"/><rect x="5" y="5.5" width="9" height="5.5" fill="none" stroke="#3fd27c" stroke-width="1.4"/></svg><div style="left:1400px;top:560px;width:20px;height:19px;background:#2b2b2b;border-radius:4px;border:1px solid #1c1c1c;"></div><svg style="left:1403px;top:565px;" width="14" height="9" viewBox="0 0 14 9"><path d="M0.5 0 L4 4.5 L0.5 9 M5 0 L8.5 4.5 L5 9 M9.5 0 L13 4.5 L9.5 9" fill="none" stroke="#e4e4e4" stroke-width="1.5"/></svg><div style="left:1423px;top:560px;width:32px;height:19px;background:#2b2b2b;border-radius:4px;border:1px solid #1c1c1c;"></div><svg style="left:1426px;top:564px;" width="15" height="11" viewBox="0 0 15 11"><rect x="0.7" y="0.7" width="13.6" height="8" fill="#2b2b2b" stroke="#e4e4e4" stroke-width="1.4"/><rect x="0" y="9.5" width="15" height="1.5" fill="#e4e4e4"/></svg><div style="left:1444px;top:561px;width:1px;height:17px;background:#1c1c1c;"></div><svg style="left:1447px;top:565.5px;" width="6" height="8" viewBox="0 0 6 8"><path d="M0.6 0.6 L5.2 4 L0.6 7.4 Z" fill="none" stroke="#9a9a9a" stroke-width="0.9"/></svg><div style="left:1458px;top:560px;width:32px;height:19px;background:#2b2b2b;border-radius:4px;border:1px solid #1c1c1c;"></div><svg style="left:1461px;top:563px;" width="14" height="13" viewBox="0 0 14 13"><rect x="0.5" y="0.5" width="8" height="6" fill="none" stroke="#bcbcbc" stroke-width="1"/><path d="M10.5 3 V8.5 H3" fill="none" stroke="#9a9a9a" stroke-width="1"/><path d="M12.5 5 V10.5 H5" fill="none" stroke="#7c7c7c" stroke-width="1"/><path d="M14 7.5 V12.5 H7" fill="none" stroke="#6a6a6a" stroke-width="1"/></svg><div style="left:1479px;top:561px;width:1px;height:17px;background:#1c1c1c;"></div><svg style="left:1482px;top:565.5px;" width="6" height="8" viewBox="0 0 6 8"><path d="M0.6 0.6 L5.2 4 L0.6 7.4 Z" fill="none" stroke="#9a9a9a" stroke-width="0.9"/></svg><div style="left:1493px;top:560px;width:32px;height:19px;background:#2b2b2b;border-radius:4px;border:1px solid #1c1c1c;"></div><svg style="left:1496px;top:563px;" width="15" height="14" viewBox="0 0 15 14"><rect x="0" y="0" width="9" height="9" fill="#c8c8c8"/><rect x="5.5" y="5.5" width="8" height="8" fill="#2b2b2b" stroke="#e4e4e4" stroke-width="1.2"/></svg><div style="left:1514px;top:561px;width:1px;height:17px;background:#1c1c1c;"></div><svg style="left:1517px;top:565.5px;" width="6" height="8" viewBox="0 0 6 8"><path d="M0.6 0.6 L5.2 4 L0.6 7.4 Z" fill="none" stroke="#9a9a9a" stroke-width="0.9"/></svg><div style="left:1528px;top:560px;width:32px;height:19px;background:#2b2b2b;border-radius:4px;border:1px solid #1c1c1c;"></div><svg style="left:1531px;top:564px;" width="13" height="12" viewBox="0 0 13 12"><rect x="0.0" y="0" width="3.25" height="3" fill="#3fd27c"/><rect x="0.0" y="6" width="3.25" height="3" fill="#3fd27c"/><rect x="3.25" y="3" width="3.25" height="3" fill="#3fd27c"/><rect x="3.25" y="9" width="3.25" height="3" fill="#3fd27c"/><rect x="6.5" y="0" width="3.25" height="3" fill="#3fd27c"/><rect x="6.5" y="6" width="3.25" height="3" fill="#3fd27c"/><rect x="9.75" y="3" width="3.25" height="3" fill="#3fd27c"/><rect x="9.75" y="9" width="3.25" height="3" fill="#3fd27c"/></svg><div style="left:1549px;top:561px;width:1px;height:17px;background:#1c1c1c;"></div><svg style="left:1552px;top:565.5px;" width="6" height="8" viewBox="0 0 6 8"><path d="M0.6 0.6 L5.2 4 L0.6 7.4 Z" fill="none" stroke="#9a9a9a" stroke-width="0.9"/></svg><div style="left:1563px;top:560px;width:20px;height:19px;background:#2b2b2b;border-radius:4px;border:1px solid #1c1c1c;"></div><svg style="left:1566px;top:563px;" width="14" height="14" viewBox="0 0 14 14"><polygon points="13.52,5.95 13.52,8.05 11.59,8.73 11.46,9.02 12.35,10.86 10.86,12.35 9.02,11.46 8.73,11.59 8.05,13.52 5.95,13.52 5.27,11.59 4.98,11.46 3.14,12.35 1.65,10.86 2.54,9.02 2.41,8.73 0.48,8.05 0.48,5.95 2.41,5.27 2.54,4.98 1.65,3.14 3.14,1.65 4.98,2.54 5.27,2.41 5.95,0.48 8.05,0.48 8.73,2.41 9.02,2.54 10.86,1.65 12.35,3.14 11.46,4.98 11.59,5.27" fill="#e4e4e4"/><circle cx="7" cy="7" r="2.3" fill="#2b2b2b"/></svg></div><div style="left:1594px;top:85px;width:319px;height:22px;background:#1c1c1c;"></div><div style="left:1594px;top:85px;width:41px;height:22px;background:#464646;border-radius:3px 3px 0 0;"></div><div style="left:1598px;top:88.5px;height:16px;line-height:16px;color:#e4e4e4;font-size:12.5px;letter-spacing:-0.25px;white-space:nowrap;">Color</div><div style="left:1636px;top:85px;width:68px;height:22px;background:#2a2a2a;border-radius:3px 3px 0 0;"></div><div style="left:1639px;top:88.5px;height:16px;line-height:16px;color:#e4e4e4;font-size:12.5px;letter-spacing:-0.25px;white-space:nowrap;">Add Layers</div><div style="left:1594px;top:107px;width:319px;height:377.5px;background:#464646;"></div><div style="left:1900px;top:107px;width:13px;height:378px;background:#464646;"></div><div style="left:1903px;top:109px;width:8px;height:301px;background:#535353;border-radius:4px;"></div><div style="left:1646px;top:120px;width:200px;height:200px;border-radius:50%;background:conic-gradient(from 90deg,#ff0000,#ff00ff,#0000ff,#00ffff,#00ff00,#ffff00,#ff0000);"></div><div style="left:1671px;top:145px;width:150px;height:150px;background:#464646;border-radius:50%;"></div><div style="left:1702px;top:176px;width:90px;height:90px;background:linear-gradient(to right,#000,rgba(0,0,0,0)),linear-gradient(to bottom,#fff,#f00);"></div><svg style="left:1738px;top:169px;" width="14" height="14" viewBox="0 0 14 14"><circle cx="7" cy="7" r="5.6" fill="none" stroke="#e8e8e8" stroke-width="1"/></svg><svg style="left:1826px;top:213px;" width="14" height="14" viewBox="0 0 14 14"><circle cx="7" cy="7" r="5.6" fill="none" stroke="#fff" stroke-width="1"/></svg><div style="left:1600px;top:333px;width:22px;height:22px;background:#7a7a7a;border-radius:3px;"></div><div style="left:1625px;top:336.5px;height:16px;line-height:16px;color:#e4e4e4;font-size:12.5px;letter-spacing:-0.25px;white-space:nowrap;">Gray</div><div style="left:1871px;top:333px;width:22px;height:22px;background:#2b2b2b;border-radius:4px;border:1px solid #1c1c1c;"></div><svg style="left:1876px;top:337px;" width="13" height="13" viewBox="0 0 13 13"><path d="M1 12 L1.5 10 L7.5 4 L9 5.5 L3 11.5 Z" fill="#9a9a9a"/><path d="M7 3 L10 6 M8 4 L10.5 1.5 Q11.5 0.5 12.3 1.3 Q13 2 12 3 L9.5 5.5" stroke="#d8d8d8" stroke-width="1.6" fill="none"/></svg><div style="left:1600px;top:360px;width:50px;height:18px;background:#464646;border-radius:3px;border:1px solid #2e2e2e;"></div><div style="left:1603px;top:361.5px;height:16px;line-height:16px;color:#e4e4e4;font-size:12.5px;letter-spacing:-0.25px;white-space:nowrap;">Hex</div><svg style="left:1637px;top:366px;" width="9" height="6" viewBox="0 0 9 6"><path d="M0.5 0.5 L4.5 5 L8.5 0.5" fill="none" stroke="#d0d0d0" stroke-width="1.1"/></svg><div style="left:1653px;top:358px;width:240px;height:22px;background:#262626;border-radius:3px;"></div><div style="left:1658px;top:361.5px;height:16px;line-height:16px;color:#5a5a5a;font-size:11px;letter-spacing:-0.25px;white-space:nowrap;">#</div><div style="left:1670px;top:361.5px;height:16px;line-height:16px;color:#e4e4e4;font-size:12.5px;letter-spacing:-0.25px;white-space:nowrap;">7a7a7a</div><div style="left:1600px;top:390.5px;width:236px;height:3px;background:#e4e4e4;border-radius:2px;"></div><svg style="left:1828px;top:386px;" width="12" height="12" viewBox="0 0 12 12"><circle cx="6" cy="6" r="5.4" fill="#7fd6bd"/><circle cx="6" cy="6" r="3.2" fill="#62b89e"/></svg><div style="left:1849px;top:384px;width:44px;height:16px;background:#2e2e2e;border-radius:3px;"></div><div style="left:1853px;top:384.5px;height:16px;line-height:16px;color:#5a5a5a;font-size:12.5px;letter-spacing:-0.25px;white-space:nowrap;">A</div><div style="left:1866px;top:384.5px;height:16px;line-height:16px;color:#e4e4e4;font-size:12.5px;letter-spacing:-0.25px;white-space:nowrap;">255</div><div style="left:1597px;top:407px;width:299px;height:22px;background:#2a2a2a;border-radius:3px;"></div><div style="left:1599px;top:408px;width:148px;height:21px;background:#464646;border-radius:4px 4px 0 0;"></div><div style="left:1599px;top:410.0px;height:16px;line-height:16px;color:#e4e4e4;font-size:12.5px;letter-spacing:-0.25px;white-space:nowrap;width:148px;text-align:center;">Swatches</div><div style="left:1747px;top:410.0px;height:16px;line-height:16px;color:#b4b4b4;font-size:12.5px;letter-spacing:-0.25px;white-space:nowrap;width:148px;text-align:center;">Generator</div><div style="left:1598px;top:432px;width:257px;height:17px;background:#5a5a5a;border-radius:3px;"></div><div style="left:1599px;top:433px;width:62px;height:15px;background:#262626;border-radius:3px;"></div><svg style="left:1605px;top:435px;" width="11" height="11" viewBox="0 0 11 11"><path d="M1.2 0.5 V10.5 M4.2 0.5 V10.5 M6.8 0.8 L10 10.3" stroke="#3fd27c" stroke-width="1.6" fill="none"/></svg><div style="left:1621px;top:433.0px;height:16px;line-height:16px;color:#e4e4e4;font-size:12.5px;letter-spacing:-0.25px;white-space:nowrap;">Library</div><svg style="left:1671px;top:435px;" width="11" height="10" viewBox="0 0 11 10"><path d="M0.5 2.5 V0.5 H4 L5 2.5 H10.5 V9.5 H0.5 Z" fill="none" stroke="#d0d0d0" stroke-width="1"/><path d="M2.5 4.8 H8.5 M2.5 7 H8.5" stroke="#d0d0d0" stroke-width="1"/></svg><div style="left:1686px;top:433.0px;height:16px;line-height:16px;color:#e4e4e4;font-size:12.5px;letter-spacing:-0.25px;white-space:nowrap;">Project</div><svg style="left:1738px;top:435px;" width="8" height="10" viewBox="0 0 8 10"><path d="M0.5 0.5 H5 L7.5 3 V9.5 H0.5 Z M5 0.5 V3 H7.5" fill="none" stroke="#d0d0d0" stroke-width="1"/></svg><div style="left:1752px;top:433.0px;height:16px;line-height:16px;color:#e4e4e4;font-size:12.5px;letter-spacing:-0.25px;white-space:nowrap;">Scene</div><svg style="left:1801px;top:436px;" width="10" height="9" viewBox="0 0 10 9"><path d="M2.5 0.5 H9.5 V5 L6 8.5 H2.5 Q0.5 8.5 0.5 6.5 V2.5 Q0.5 0.5 2.5 0.5 Z M9.5 5 H7 Q6 5 6 6 V8.5" fill="none" stroke="#d0d0d0" stroke-width="1"/></svg><div style="left:1816px;top:433.0px;height:16px;line-height:16px;color:#e4e4e4;font-size:12.5px;letter-spacing:-0.25px;white-space:nowrap;">Labels</div><div style="left:1858px;top:432px;width:38px;height:17px;background:#5a5a5a;border-radius:3px;"></div><div style="left:1859px;top:433px;width:17px;height:15px;background:#262626;border-radius:3px;"></div><svg style="left:1863px;top:436px;" width="9" height="9" viewBox="0 0 9 9"><rect x="0" y="0" width="3.6" height="3.6" fill="#3fd27c"/><rect x="5.2" y="0" width="3.6" height="3.6" fill="#3fd27c"/><rect x="0" y="5.2" width="3.6" height="3.6" fill="#3fd27c"/><rect x="5.2" y="5.2" width="3.6" height="3.6" fill="#3fd27c"/></svg><svg style="left:1881px;top:436px;" width="10" height="9" viewBox="0 0 10 9"><path d="M0 1 H10 M0 4.5 H10 M0 8 H10" stroke="#d8d8d8" stroke-width="1"/></svg><div style="left:1598px;top:453px;width:275px;height:16px;background:#3c3c3c;border-radius:3px;border:1px solid #333;"></div><div style="left:1601px;top:454.0px;height:16px;line-height:16px;color:#e4e4e4;font-size:12.5px;letter-spacing:-0.25px;white-space:nowrap;">new</div><svg style="left:1860px;top:458px;" width="9" height="6" viewBox="0 0 9 6"><path d="M0.5 0.5 L4.5 5 L8.5 0.5" fill="none" stroke="#d0d0d0" stroke-width="1.1"/></svg><svg style="left:1880px;top:460px;" width="12" height="3" viewBox="0 0 12 3"><circle cx="1.5" cy="1.5" r="1" fill="#d0d0d0"/><circle cx="6" cy="1.5" r="1" fill="#d0d0d0"/><circle cx="10.5" cy="1.5" r="1" fill="#d0d0d0"/></svg><div style="left:1597px;top:470px;width:298px;height:14.5px;background:#2a2a2a;"></div><div style="left:1600px;top:472px;width:18px;height:12.5px;background:#a050f0;border-radius:3px 3px 0 0;"></div><div style="left:1622px;top:472px;width:18px;height:12.5px;background:#4fa0ff;border-radius:3px 3px 0 0;"></div><div style="left:1644px;top:472px;width:18px;height:12.5px;background:#ff7a50;border-radius:3px 3px 0 0;"></div><div style="left:1666px;top:472px;width:18px;height:12.5px;background:#50ffb0;border-radius:3px 3px 0 0;"></div><div style="left:1688px;top:472px;width:18px;height:12.5px;background:#f55060;border-radius:3px 3px 0 0;"></div><div style="left:1710px;top:472px;width:18px;height:12.5px;background:#ff50c0;border-radius:3px 3px 0 0;"></div><div style="left:1732px;top:472px;width:18px;height:12.5px;background:#ffd250;border-radius:3px 3px 0 0;"></div><div style="left:1754px;top:472px;width:18px;height:12.5px;background:#4060d8;border-radius:3px 3px 0 0;"></div><div style="left:1776px;top:472px;width:18px;height:12.5px;background:#5fe3d6;border-radius:3px 3px 0 0;"></div><div style="left:1798px;top:472px;width:18px;height:12.5px;background:#d880d8;border-radius:3px 3px 0 0;"></div><div style="left:1820px;top:472px;width:18px;height:12.5px;background:#b0ea8c;border-radius:3px 3px 0 0;"></div><div style="left:1842px;top:472px;width:18px;height:12.5px;background:#6a50fa;border-radius:3px 3px 0 0;"></div><div style="left:1594px;top:485px;width:319px;height:5px;background:#1c1c1c;"></div><div style="left:1594px;top:490px;width:319px;height:21px;background:#1c1c1c;"></div><div style="left:1594px;top:490px;width:38px;height:21px;background:#464646;border-radius:3px 3px 0 0;"></div><div style="left:1598px;top:493.8px;height:16px;line-height:16px;color:#e4e4e4;font-size:12.5px;letter-spacing:-0.25px;white-space:nowrap;">Align</div><div style="left:1594px;top:511px;width:319px;height:69px;background:#464646;"></div><div style="left:1601px;top:524.0px;height:16px;line-height:16px;color:#e4e4e4;font-size:12.5px;letter-spacing:-0.25px;white-space:nowrap;">Alignment</div><div style="left:1601px;top:552.0px;height:16px;line-height:16px;color:#e4e4e4;font-size:12.5px;letter-spacing:-0.25px;white-space:nowrap;">Distribution</div><div style="left:1790px;top:522px;width:54px;height:19px;background:#1c1c1c;border-radius:4px;"></div><div style="left:1791px;top:523px;width:17px;height:17px;background:#2b2b2b;border-radius:3px;border:1px solid #1c1c1c;"></div><svg style="left:1793px;top:525px;" width="13" height="13" viewBox="0 0 13 13"><path d="M1.5 1 V12" stroke="#e8e8e8" stroke-width="1.2"/><path d="M3.5 4 H9 M3.5 9 H12" stroke="#e8e8e8" stroke-width="2"/></svg><div style="left:1809px;top:523px;width:17px;height:17px;background:#2b2b2b;border-radius:3px;border:1px solid #1c1c1c;"></div><svg style="left:1811px;top:525px;" width="13" height="13" viewBox="0 0 13 13"><path d="M6.5 0.5 V12.5" stroke="#e8e8e8" stroke-width="1.2"/><path d="M3 4 H10 M1 9 H12" stroke="#e8e8e8" stroke-width="2"/></svg><div style="left:1826px;top:523px;width:17px;height:17px;background:#2b2b2b;border-radius:3px;border:1px solid #1c1c1c;"></div><svg style="left:1828px;top:525px;" width="13" height="13" viewBox="0 0 13 13"><path d="M11.5 1 V12" stroke="#e8e8e8" stroke-width="1.2"/><path d="M4 4 H9.5 M1 9 H9.5" stroke="#e8e8e8" stroke-width="2"/></svg><div style="left:1852px;top:522px;width:54px;height:19px;background:#1c1c1c;border-radius:4px;"></div><div style="left:1853px;top:523px;width:17px;height:17px;background:#2b2b2b;border-radius:3px;border:1px solid #1c1c1c;"></div><svg style="left:1855px;top:525px;" width="13" height="13" viewBox="0 0 13 13"><path d="M1 1.5 H12" stroke="#e8e8e8" stroke-width="1.2"/><path d="M4 3.5 V12 M9 3.5 V8" stroke="#e8e8e8" stroke-width="2"/></svg><div style="left:1871px;top:523px;width:17px;height:17px;background:#2b2b2b;border-radius:3px;border:1px solid #1c1c1c;"></div><svg style="left:1873px;top:525px;" width="13" height="13" viewBox="0 0 13 13"><path d="M0.5 6.5 H12.5" stroke="#e8e8e8" stroke-width="1.2"/><path d="M4 1 V12 M9 3 V10" stroke="#e8e8e8" stroke-width="2"/></svg><div style="left:1888px;top:523px;width:17px;height:17px;background:#2b2b2b;border-radius:3px;border:1px solid #1c1c1c;"></div><svg style="left:1890px;top:525px;" width="13" height="13" viewBox="0 0 13 13"><path d="M1 11.5 H12" stroke="#e8e8e8" stroke-width="1.2"/><path d="M4 5 V9.5 M9 1 V9.5" stroke="#e8e8e8" stroke-width="2"/></svg><div style="left:1790px;top:550px;width:54px;height:19px;background:#1c1c1c;border-radius:4px;"></div><div style="left:1791px;top:551px;width:17px;height:17px;background:#2b2b2b;border-radius:3px;border:1px solid #1c1c1c;"></div><svg style="left:1793px;top:553px;" width="13" height="13" viewBox="0 0 13 13"><path d="M1 1 V12 M12 1 V12" stroke="#e8e8e8" stroke-width="1.2"/><path d="M6.5 2.5 V10.5" stroke="#e8e8e8" stroke-width="2.4"/></svg><div style="left:1809px;top:551px;width:17px;height:17px;background:#2b2b2b;border-radius:3px;border:1px solid #1c1c1c;"></div><svg style="left:1811px;top:553px;" width="13" height="13" viewBox="0 0 13 13"><path d="M1 1.5 H12 M1 11.5 H12" stroke="#e8e8e8" stroke-width="1.2"/><path d="M2.5 6.5 H10.5" stroke="#e8e8e8" stroke-width="2.4"/></svg><div style="left:1826px;top:551px;width:17px;height:17px;background:#2b2b2b;border-radius:3px;border:1px solid #1c1c1c;"></div><svg style="left:1828px;top:553px;" width="13" height="13" viewBox="0 0 13 13"><path d="M0.5 3 V0.5 H3 M10 0.5 H12.5 V3 M12.5 10 V12.5 H10 M3 12.5 H0.5 V10" fill="none" stroke="#e8e8e8" stroke-width="1"/><path d="M3 9.5 V7.5 M6.5 8 V5 M10 6 V3.5" stroke="#e8e8e8" stroke-width="2"/></svg><div style="left:494px;top:587px;width:1419px;height:21px;background:#1c1c1c;"></div><div style="left:494px;top:586px;width:89px;height:22px;background:#464646;border-radius:4px 4px 0 0;"></div><div style="left:500px;top:589.5px;height:16px;line-height:16px;color:#e8e8e8;font-size:12.5px;letter-spacing:-0.5px;white-space:nowrap;">Scene Window</div><div style="left:583px;top:587px;width:101px;height:21px;background:#2a2a2a;border-radius:3px 3px 0 0;"></div><div style="left:589px;top:589.5px;height:16px;line-height:16px;color:#e8e8e8;font-size:12.5px;letter-spacing:-0.25px;white-space:nowrap;">JavaScript Editor</div><div style="left:685px;top:587px;width:112px;height:21px;background:#2a2a2a;border-radius:3px 3px 0 0;"></div><div style="left:690px;top:589.5px;height:16px;line-height:16px;color:#e8e8e8;font-size:12.5px;letter-spacing:-0.25px;white-space:nowrap;">Dependency Graph</div><div style="left:494px;top:608px;width:1419px;height:390px;background:#2a2a2a;"></div><div style="left:499px;top:610px;width:1410px;height:20px;background:#464646;border-radius:4px 4px 0 0;"></div><div style="left:1104px;top:611.5px;height:16px;line-height:16px;color:#e4e4e4;font-size:12.5px;letter-spacing:-0.25px;white-space:nowrap;width:200px;text-align:center;">Composition 1</div><div style="left:494px;top:630px;width:699px;height:42px;background:#464646;"></div><div style="left:497px;top:632px;width:487px;height:20px;background:#262626;border-radius:10px;"></div><svg style="left:501px;top:635.5px;" width="14" height="14" viewBox="0 0 14 14"><circle cx="5.5" cy="5.5" r="4.6" fill="none" stroke="#d8d8d8" stroke-width="1.1"/><path d="M9 9 L12.5 12.5" stroke="#d8d8d8" stroke-width="2" stroke-linecap="round"/></svg><div style="left:520px;top:634.5px;height:16px;line-height:16px;color:#8a8a8a;font-size:12.5px;letter-spacing:-0.5px;white-space:nowrap;">Enter a layer name</div><div class="btn" style="left:987px;top:632px;width:20px;height:20px;"></div><svg style="left:992px;top:637px;" width="10" height="10" viewBox="0 0 10 10"><path d="M5 0 V10 M0 5 H10" stroke="#ececec" stroke-width="1.7"/></svg><div class="btn" style="left:1031px;top:632px;width:20px;height:20px;"></div><div class="btn" style="left:1054px;top:632px;width:20px;height:20px;"></div><div class="btn" style="left:1075px;top:632px;width:20px;height:20px;"></div><svg style="left:1034px;top:635px;" width="15" height="14" viewBox="0 0 15 14"><circle cx="9.5" cy="5" r="4.5" fill="#d8d8d8"/><circle cx="6.5" cy="8" r="4.5" fill="#9a9a9a" opacity="0.7"/><circle cx="4.5" cy="10" r="3.5" fill="#6a6a6a" opacity="0.7"/></svg><svg style="left:1057px;top:635px;" width="14" height="14" viewBox="0 0 14 14"><path d="M8.5 4.5 L9.6 7.9 L13 9 L9.6 10.1 L8.5 13.5 L7.4 10.1 L4 9 L7.4 7.9 Z" fill="#e0e0e0"/><circle cx="2" cy="5.5" r="1.1" fill="#e0e0e0"/><circle cx="5.5" cy="2" r="1.1" fill="#e0e0e0"/><circle cx="2.5" cy="11" r="0.9" fill="#e0e0e0"/><circle cx="10" cy="2" r="0.9" fill="#e0e0e0"/></svg><svg style="left:1078px;top:635px;" width="14" height="14" viewBox="0 0 14 14"><path d="M0 2.5 H14 M0 7 H14 M0 11.5 H14" stroke="#d8d8d8" stroke-width="1"/><circle cx="5" cy="2.5" r="1.6" fill="#2b2b2b" stroke="#d8d8d8" stroke-width="1"/><circle cx="9.5" cy="7" r="1.6" fill="#2b2b2b" stroke="#d8d8d8" stroke-width="1"/><circle cx="4" cy="11.5" r="1.6" fill="#2b2b2b" stroke="#d8d8d8" stroke-width="1"/></svg><div style="left:1097px;top:632px;width:94px;height:20px;background:#272727;border-radius:3px;"></div><div style="left:1102px;top:634.5px;height:16px;line-height:16px;color:#5a5a5a;font-size:12.5px;letter-spacing:-0.25px;white-space:nowrap;">F</div><div style="left:1114px;top:634.5px;height:16px;line-height:16px;color:#e4e4e4;font-size:12.5px;letter-spacing:-0.25px;white-space:nowrap;">16</div><svg style="left:500px;top:656px;" width="10" height="13" viewBox="0 0 10 13"><path d="M2.5 6 V3.5 Q2.5 1 5 1 Q7.5 1 7.5 3.5 V6" fill="none" stroke="#d0d0d0" stroke-width="1.3"/><rect x="0.8" y="5.8" width="8.4" height="6.5" rx="0.8" fill="#d0d0d0"/><rect x="4.2" y="8" width="1.6" height="2" fill="#464646"/></svg><svg style="left:517px;top:659.0px;" width="14" height="9" viewBox="0 0 14 9"><path d="M0.5 4.5 Q7 -2.5 13.5 4.5 Q7 11.5 0.5 4.5 Z" fill="none" stroke="#d0d0d0" stroke-width="1"/><circle cx="7" cy="4.5" r="2.2" fill="#d0d0d0"/></svg><svg style="left:537px;top:656px;" width="13" height="14" viewBox="0 0 13 14"><path d="M6.5 0.8 L12.2 3.8 V10.2 L6.5 13.2 L0.8 10.2 V3.8 Z M0.8 3.8 L6.5 6.8 L12.2 3.8 M6.5 6.8 V13.2" fill="none" stroke="#d0d0d0" stroke-width="1"/></svg><svg style="left:556px;top:657px;" width="14" height="13" viewBox="0 0 14 13"><path d="M0.5 4.5 H3 L6.5 1 V12 L3 8.5 H0.5 Z" fill="#d0d0d0"/><path d="M8.5 3.5 Q10.5 6.5 8.5 9.5 M10.8 1.5 Q14 6.5 10.8 11.5" fill="none" stroke="#d0d0d0" stroke-width="1.1"/></svg><svg style="left:575px;top:657px;" width="13" height="13" viewBox="0 0 13 13"><path d="M1 12 L1.5 10 L7.5 4 L9 5.5 L3 11.5 Z" fill="#9a9a9a"/><path d="M7 3 L10 6 M8 4 L10.5 1.5 Q11.5 0.5 12.3 1.3 Q13 2 12 3 L9.5 5.5" stroke="#d0d0d0" stroke-width="1.6" fill="none"/></svg><svg style="left:593px;top:659.5px;" width="14" height="8" viewBox="0 0 14 8"><path d="M0 4 L3.5 0 H14 V8 H3.5 Z" fill="#d0d0d0"/><circle cx="4.6" cy="4" r="1.5" fill="#464646"/></svg><div style="left:494px;top:672px;width:686px;height:242px;background:#3a3a3a;"></div><div style="left:494px;top:738px;width:686px;height:22px;background:#5b5745;"></div><div style="left:496px;top:674px;width:18px;height:18px;background:#2a2a2a;border-radius:2px;"></div><div style="left:515px;top:674px;width:18px;height:18px;background:#2a2a2a;border-radius:2px;"></div><svg style="left:518px;top:677px;" width="13" height="12" viewBox="0 0 13 12"><path d="M10.8 4.5 A5 5 0 1 1 8 1.8" fill="none" stroke="#d0d0d0" stroke-width="1.1"/><path d="M3.5 5.5 L6 8.2 L11.5 1.5" fill="none" stroke="#d0d0d0" stroke-width="1.2"/></svg><div style="left:573px;top:675px;width:16px;height:16px;background:#c8f07c;border-radius:2px;"></div><svg style="left:593px;top:679px;" width="14" height="8" viewBox="0 0 14 8"><path d="M0 4 L3.5 0 H14 V8 H3.5 Z" fill="#d0d0d0"/><circle cx="4.6" cy="4" r="1.5" fill="#3a3a3a"/></svg><div style="left:496px;top:696px;width:18px;height:18px;background:#2a2a2a;border-radius:2px;"></div><div style="left:515px;top:696px;width:18px;height:18px;background:#2a2a2a;border-radius:2px;"></div><svg style="left:518px;top:699px;" width="13" height="12" viewBox="0 0 13 12"><path d="M10.8 4.5 A5 5 0 1 1 8 1.8" fill="none" stroke="#d0d0d0" stroke-width="1.1"/><path d="M3.5 5.5 L6 8.2 L11.5 1.5" fill="none" stroke="#d0d0d0" stroke-width="1.2"/></svg><div style="left:573px;top:697px;width:16px;height:16px;background:#f4a46e;border-radius:2px;"></div><svg style="left:593px;top:701px;" width="14" height="8" viewBox="0 0 14 8"><path d="M0 4 L3.5 0 H14 V8 H3.5 Z" fill="#d0d0d0"/><circle cx="4.6" cy="4" r="1.5" fill="#3a3a3a"/></svg><div style="left:496px;top:718px;width:18px;height:18px;background:#2a2a2a;border-radius:2px;"></div><div style="left:515px;top:718px;width:18px;height:18px;background:#2a2a2a;border-radius:2px;"></div><svg style="left:518px;top:721px;" width="13" height="12" viewBox="0 0 13 12"><path d="M10.8 4.5 A5 5 0 1 1 8 1.8" fill="none" stroke="#d0d0d0" stroke-width="1.1"/><path d="M3.5 5.5 L6 8.2 L11.5 1.5" fill="none" stroke="#d0d0d0" stroke-width="1.2"/></svg><div style="left:573px;top:719px;width:16px;height:16px;background:#f4a46e;border-radius:2px;"></div><svg style="left:593px;top:723px;" width="14" height="8" viewBox="0 0 14 8"><path d="M0 4 L3.5 0 H14 V8 H3.5 Z" fill="#d0d0d0"/><circle cx="4.6" cy="4" r="1.5" fill="#3a3a3a"/></svg><div style="left:496px;top:740px;width:18px;height:18px;background:#2a2a2a;border-radius:2px;"></div><div style="left:515px;top:740px;width:18px;height:18px;background:#2a2a2a;border-radius:2px;"></div><svg style="left:518px;top:743px;" width="13" height="12" viewBox="0 0 13 12"><path d="M10.8 4.5 A5 5 0 1 1 8 1.8" fill="none" stroke="#d0d0d0" stroke-width="1.1"/><path d="M3.5 5.5 L6 8.2 L11.5 1.5" fill="none" stroke="#d0d0d0" stroke-width="1.2"/></svg><div style="left:573px;top:741px;width:16px;height:16px;background:#ffe87c;border-radius:2px;"></div><svg style="left:593px;top:745px;" width="14" height="8" viewBox="0 0 14 8"><path d="M0 4 L3.5 0 H14 V8 H3.5 Z" fill="#d0d0d0"/><circle cx="4.6" cy="4" r="1.5" fill="#3a3a3a"/></svg><div style="left:496px;top:762px;width:18px;height:18px;background:#2a2a2a;border-radius:2px;"></div><div style="left:515px;top:762px;width:18px;height:18px;background:#2a2a2a;border-radius:2px;"></div><svg style="left:518px;top:765px;" width="13" height="12" viewBox="0 0 13 12"><path d="M10.8 4.5 A5 5 0 1 1 8 1.8" fill="none" stroke="#d0d0d0" stroke-width="1.1"/><path d="M3.5 5.5 L6 8.2 L11.5 1.5" fill="none" stroke="#d0d0d0" stroke-width="1.2"/></svg><div style="left:573px;top:763px;width:16px;height:16px;background:#c4c4c4;border-radius:2px;"></div><svg style="left:593px;top:767px;" width="14" height="8" viewBox="0 0 14 8"><path d="M0 4 L3.5 0 H14 V8 H3.5 Z" fill="#d0d0d0"/><circle cx="4.6" cy="4" r="1.5" fill="#3a3a3a"/></svg><div style="left:496px;top:784px;width:18px;height:18px;background:#2a2a2a;border-radius:2px;"></div><div style="left:515px;top:784px;width:18px;height:18px;background:#2a2a2a;border-radius:2px;"></div><svg style="left:518px;top:787px;" width="13" height="12" viewBox="0 0 13 12"><path d="M10.8 4.5 A5 5 0 1 1 8 1.8" fill="none" stroke="#d0d0d0" stroke-width="1.1"/><path d="M3.5 5.5 L6 8.2 L11.5 1.5" fill="none" stroke="#d0d0d0" stroke-width="1.2"/></svg><div style="left:573px;top:785px;width:16px;height:16px;background:#c4c4c4;border-radius:2px;"></div><svg style="left:593px;top:789px;" width="14" height="8" viewBox="0 0 14 8"><path d="M0 4 L3.5 0 H14 V8 H3.5 Z" fill="#d0d0d0"/><circle cx="4.6" cy="4" r="1.5" fill="#3a3a3a"/></svg><div style="left:496px;top:806px;width:18px;height:18px;background:#2a2a2a;border-radius:2px;"></div><div style="left:515px;top:806px;width:18px;height:18px;background:#2a2a2a;border-radius:2px;"></div><svg style="left:518px;top:809px;" width="13" height="12" viewBox="0 0 13 12"><path d="M10.8 4.5 A5 5 0 1 1 8 1.8" fill="none" stroke="#d0d0d0" stroke-width="1.1"/><path d="M3.5 5.5 L6 8.2 L11.5 1.5" fill="none" stroke="#d0d0d0" stroke-width="1.2"/></svg><div style="left:573px;top:807px;width:16px;height:16px;background:#ffe87c;border-radius:2px;"></div><svg style="left:593px;top:811px;" width="14" height="8" viewBox="0 0 14 8"><path d="M0 4 L3.5 0 H14 V8 H3.5 Z" fill="#d0d0d0"/><circle cx="4.6" cy="4" r="1.5" fill="#3a3a3a"/></svg><div style="left:496px;top:894px;width:18px;height:18px;background:#2a2a2a;border-radius:2px;"></div><div style="left:515px;top:894px;width:18px;height:18px;background:#2a2a2a;border-radius:2px;"></div><svg style="left:518px;top:897px;" width="13" height="12" viewBox="0 0 13 12"><path d="M10.8 4.5 A5 5 0 1 1 8 1.8" fill="none" stroke="#d0d0d0" stroke-width="1.1"/><path d="M3.5 5.5 L6 8.2 L11.5 1.5" fill="none" stroke="#d0d0d0" stroke-width="1.2"/></svg><div style="left:573px;top:895px;width:16px;height:16px;background:#ffe87c;border-radius:2px;"></div><svg style="left:593px;top:899px;" width="14" height="8" viewBox="0 0 14 8"><path d="M0 4 L3.5 0 H14 V8 H3.5 Z" fill="#d0d0d0"/><circle cx="4.6" cy="4" r="1.5" fill="#3a3a3a"/></svg><div style="left:1139px;top:675px;width:22px;height:16px;background:#2a2a2a;border-radius:3px;"></div><svg style="left:1141px;top:679px;" width="18" height="8" viewBox="0 0 18 8"><path d="M0 4 L3 0.5 H7 V7.5 H3 Z" fill="#d9c25c"/><path d="M18 4 L15 0.5 H11 V7.5 H15 Z" fill="#cf55ea"/></svg><div style="left:1139px;top:697px;width:22px;height:16px;background:#2a2a2a;border-radius:3px;"></div><svg style="left:1141px;top:701px;" width="18" height="8" viewBox="0 0 18 8"><path d="M0 4 L3 0.5 H7 V7.5 H3 Z" fill="#d9c25c"/><path d="M18 4 L15 0.5 H11 V7.5 H15 Z" fill="#cf55ea"/></svg><div style="left:1139px;top:719px;width:22px;height:16px;background:#2a2a2a;border-radius:3px;"></div><svg style="left:1141px;top:723px;" width="18" height="8" viewBox="0 0 18 8"><path d="M0 4 L3 0.5 H7 V7.5 H3 Z" fill="#d9c25c"/><path d="M18 4 L15 0.5 H11 V7.5 H15 Z" fill="#cf55ea"/></svg><div style="left:1139px;top:807px;width:22px;height:16px;background:#2a2a2a;border-radius:3px;"></div><svg style="left:1141px;top:811px;" width="18" height="8" viewBox="0 0 18 8"><path d="M0 4 L3 0.5 H7 V7.5 H3 Z" fill="#8a8a8a"/><path d="M18 4 L15 0.5 H11 V7.5 H15 Z" fill="#cf55ea"/></svg><div style="left:1139px;top:895px;width:22px;height:16px;background:#2a2a2a;border-radius:3px;"></div><svg style="left:1141px;top:899px;" width="18" height="8" viewBox="0 0 18 8"><path d="M0 4 L3 0.5 H7 V7.5 H3 Z" fill="#d9c25c"/><path d="M18 4 L15 0.5 H11 V7.5 H15 Z" fill="#8a8a8a"/></svg><svg style="left:1165.2px;top:678.2px;" width="9.6" height="9.6" viewBox="0 0 9.6 9.6"><circle cx="4.8" cy="4.8" r="3.8" fill="none" stroke="#9a9a9a" stroke-width="1"/></svg><svg style="left:1165.2px;top:700.2px;" width="9.6" height="9.6" viewBox="0 0 9.6 9.6"><circle cx="4.8" cy="4.8" r="3.8" fill="none" stroke="#9a9a9a" stroke-width="1"/></svg><svg style="left:1165.2px;top:722.2px;" width="9.6" height="9.6" viewBox="0 0 9.6 9.6"><circle cx="4.8" cy="4.8" r="3.8" fill="none" stroke="#9a9a9a" stroke-width="1"/></svg><svg style="left:1165.2px;top:744.2px;" width="9.6" height="9.6" viewBox="0 0 9.6 9.6"><circle cx="4.8" cy="4.8" r="3.8" fill="none" stroke="#9a9a9a" stroke-width="1"/></svg><svg style="left:1165.2px;top:766.2px;" width="9.6" height="9.6" viewBox="0 0 9.6 9.6"><circle cx="4.8" cy="4.8" r="3.8" fill="none" stroke="#9a9a9a" stroke-width="1"/></svg><svg style="left:1165.2px;top:788.2px;" width="9.6" height="9.6" viewBox="0 0 9.6 9.6"><circle cx="4.8" cy="4.8" r="3.8" fill="none" stroke="#9a9a9a" stroke-width="1"/></svg><svg style="left:1165.2px;top:810.2px;" width="9.6" height="9.6" viewBox="0 0 9.6 9.6"><circle cx="4.8" cy="4.8" r="3.8" fill="none" stroke="#9a9a9a" stroke-width="1"/></svg><svg style="left:1165.2px;top:898.2px;" width="9.6" height="9.6" viewBox="0 0 9.6 9.6"><circle cx="4.8" cy="4.8" r="3.8" fill="none" stroke="#9a9a9a" stroke-width="1"/></svg><div style="left:1081px;top:829px;width:84px;height:16px;background:#2a2a2a;border-radius:3px;"></div><div style="left:1084px;top:829.5px;height:16px;line-height:16px;color:#707070;font-size:11px;letter-spacing:-0.25px;white-space:nowrap;">#</div><div style="left:1098px;top:829.5px;height:16px;line-height:16px;color:#e4e4e4;font-size:12.5px;letter-spacing:-0.25px;white-space:nowrap;">63.6</div><svg style="left:1153px;top:833px;" width="8" height="8" viewBox="0 0 8 8"><path d="M4 0 L8 4 L4 8 L0 4 Z" fill="#c8c8c8"/></svg><svg style="left:1167px;top:833.5px;" width="7" height="7" viewBox="0 0 7 7"><path d="M0 0 H3.5 L7 3.5 L3.5 7 H0 Z" fill="#7a7a7a"/></svg><div style="left:1081px;top:851px;width:84px;height:16px;background:#2a2a2a;border-radius:3px;"></div><div style="left:1084px;top:851.5px;height:16px;line-height:16px;color:#707070;font-size:12.5px;letter-spacing:-0.25px;white-space:nowrap;">H</div><div style="left:1098px;top:851.5px;height:16px;line-height:16px;color:#e4e4e4;font-size:12.5px;letter-spacing:-0.25px;white-space:nowrap;">481.818</div><svg style="left:1153px;top:855px;" width="8" height="8" viewBox="0 0 8 8"><path d="M4 0 L8 4 L4 8 L0 4 Z" fill="#c8c8c8"/></svg><svg style="left:1167px;top:855.5px;" width="7" height="7" viewBox="0 0 7 7"><path d="M0 0 H3.5 L7 3.5 L3.5 7 H0 Z" fill="#cf55ea"/></svg><div style="left:1081px;top:873px;width:84px;height:16px;background:#2a2a2a;border-radius:3px;"></div><div style="left:1082px;top:873.5px;height:16px;line-height:16px;color:#707070;font-size:12.5px;letter-spacing:-0.25px;white-space:nowrap;">W</div><div style="left:1098px;top:873.5px;height:16px;line-height:16px;color:#e4e4e4;font-size:12.5px;letter-spacing:-0.25px;white-space:nowrap;">700.0</div><svg style="left:1153px;top:877px;" width="8" height="8" viewBox="0 0 8 8"><path d="M4 0 L8 4 L4 8 L0 4 Z" fill="#c8c8c8"/></svg><svg style="left:1167px;top:877.5px;" width="7" height="7" viewBox="0 0 7 7"><path d="M0 0 H3.5 L7 3.5 L3.5 7 H0 Z" fill="#cf55ea"/></svg><div style="left:1181px;top:673px;width:10px;height:288px;background:#464646;border-radius:5px;"></div><div style="left:497px;top:964px;width:682px;height:10px;background:#464646;border-radius:5px;"></div><div style="left:494px;top:976px;width:699px;height:22px;background:#464646;"></div><div class="btn" style="left:985px;top:978px;width:19px;height:18px;"></div><svg style="left:989px;top:981px;" width="11" height="12" viewBox="0 0 11 12"><rect x="0.6" y="0.6" width="9.8" height="10.8" fill="none" stroke="#e0e0e0" stroke-width="1.1"/><rect x="4" y="4.5" width="3" height="3" fill="#e0e0e0"/></svg><div style="left:1008px;top:978px;width:182px;height:18px;background:#5a5a5a;border-radius:3px;"></div><div style="left:1009px;top:979px;width:86px;height:16px;background:#1c1c1c;border-radius:3px;"></div><svg style="left:1014px;top:982px;" width="12" height="10" viewBox="0 0 12 10"><path d="M0 1 H12 M2.5 5 H12 M0 9 H9" stroke="#3fd27c" stroke-width="1.6"/></svg><div style="left:1031px;top:979.5px;height:16px;line-height:16px;color:#e8e8e8;font-size:12.5px;letter-spacing:-0.25px;white-space:nowrap;">Time Editor</div><svg style="left:1102px;top:981px;" width="14" height="13" viewBox="0 0 14 13"><path d="M2.5 0 V10.5 H14" stroke="#c8c8c8" stroke-width="1" fill="none"/><path d="M0 12 L12.5 2.5" stroke="#c8c8c8" stroke-width="1"/></svg><div style="left:1119px;top:979.5px;height:16px;line-height:16px;color:#e0e0e0;font-size:12.5px;letter-spacing:-0.25px;white-space:nowrap;">Graph Editor</div><div style="left:1193px;top:630px;width:8px;height:368px;background:#1e1e1e;"></div><svg style="left:1195px;top:806px;" width="2" height="24" viewBox="0 0 2 24"><rect x="0" y="0" width="1.2" height="1.5" fill="#9a9a9a"/><rect x="0" y="3" width="1.2" height="1.5" fill="#9a9a9a"/><rect x="0" y="6" width="1.2" height="1.5" fill="#9a9a9a"/><rect x="0" y="9" width="1.2" height="1.5" fill="#9a9a9a"/><rect x="0" y="12" width="1.2" height="1.5" fill="#9a9a9a"/><rect x="0" y="15" width="1.2" height="1.5" fill="#9a9a9a"/><rect x="0" y="18" width="1.2" height="1.5" fill="#9a9a9a"/><rect x="0" y="21" width="1.2" height="1.5" fill="#9a9a9a"/></svg><div style="left:1201px;top:630px;width:712px;height:23px;background:#2a2a2a;"></div><svg style="left:1201px;top:630px;" width="712" height="24" viewBox="0 0 712 24"><path d="M5.9 16 V24.500" stroke="#a4a4a4" stroke-width="1.500"/><path d="M14.3 20 V24.500" stroke="#8c8c8c" stroke-width="1.200"/><path d="M22.7 20 V24.500" stroke="#8c8c8c" stroke-width="1.200"/><path d="M31.1 20 V24.500" stroke="#8c8c8c" stroke-width="1.200"/><path d="M39.6 20 V24.500" stroke="#8c8c8c" stroke-width="1.200"/><path d="M48.0 16 V24.500" stroke="#a4a4a4" stroke-width="1.500"/><path d="M56.4 20 V24.500" stroke="#8c8c8c" stroke-width="1.200"/><path d="M64.8 20 V24.500" stroke="#8c8c8c" stroke-width="1.200"/><path d="M73.2 20 V24.500" stroke="#8c8c8c" stroke-width="1.200"/><path d="M81.6 20 V24.500" stroke="#8c8c8c" stroke-width="1.200"/><path d="M90.1 16 V24.500" stroke="#a4a4a4" stroke-width="1.500"/><path d="M98.5 20 V24.500" stroke="#8c8c8c" stroke-width="1.200"/><path d="M106.9 20 V24.500" stroke="#8c8c8c" stroke-width="1.200"/><path d="M115.3 20 V24.500" stroke="#8c8c8c" stroke-width="1.200"/><path d="M123.7 20 V24.500" stroke="#8c8c8c" stroke-width="1.200"/><path d="M132.1 16 V24.500" stroke="#a4a4a4" stroke-width="1.500"/><path d="M140.5 20 V24.500" stroke="#8c8c8c" stroke-width="1.200"/><path d="M149.0 20 V24.500" stroke="#8c8c8c" stroke-width="1.200"/><path d="M157.4 20 V24.500" stroke="#8c8c8c" stroke-width="1.200"/><path d="M165.8 20 V24.500" stroke="#8c8c8c" stroke-width="1.200"/><path d="M174.2 16 V24.500" stroke="#a4a4a4" stroke-width="1.500"/><path d="M182.6 20 V24.500" stroke="#8c8c8c" stroke-width="1.200"/><path d="M191.0 20 V24.500" stroke="#8c8c8c" stroke-width="1.200"/><path d="M199.4 20 V24.500" stroke="#8c8c8c" stroke-width="1.200"/><path d="M207.9 20 V24.500" stroke="#8c8c8c" stroke-width="1.200"/><path d="M216.3 16 V24.500" stroke="#a4a4a4" stroke-width="1.500"/><path d="M224.7 20 V24.500" stroke="#8c8c8c" stroke-width="1.200"/><path d="M233.1 20 V24.500" stroke="#8c8c8c" stroke-width="1.200"/><path d="M241.5 20 V24.500" stroke="#8c8c8c" stroke-width="1.200"/><path d="M249.9 20 V24.500" stroke="#8c8c8c" stroke-width="1.200"/><path d="M258.4 16 V24.500" stroke="#a4a4a4" stroke-width="1.500"/><path d="M266.8 20 V24.500" stroke="#8c8c8c" stroke-width="1.200"/><path d="M275.2 20 V24.500" stroke="#8c8c8c" stroke-width="1.200"/><path d="M283.6 20 V24.500" stroke="#8c8c8c" stroke-width="1.200"/><path d="M292.0 20 V24.500" stroke="#8c8c8c" stroke-width="1.200"/><path d="M300.4 16 V24.500" stroke="#a4a4a4" stroke-width="1.500"/><path d="M308.8 20 V24.500" stroke="#8c8c8c" stroke-width="1.200"/><path d="M317.3 20 V24.500" stroke="#8c8c8c" stroke-width="1.200"/><path d="M325.7 20 V24.500" stroke="#8c8c8c" stroke-width="1.200"/><path d="M334.1 20 V24.500" stroke="#8c8c8c" stroke-width="1.200"/><path d="M342.5 16 V24.500" stroke="#a4a4a4" stroke-width="1.500"/><path d="M350.9 20 V24.500" stroke="#8c8c8c" stroke-width="1.200"/><path d="M359.3 20 V24.500" stroke="#8c8c8c" stroke-width="1.200"/><path d="M367.7 20 V24.500" stroke="#8c8c8c" stroke-width="1.200"/><path d="M376.2 20 V24.500" stroke="#8c8c8c" stroke-width="1.200"/><path d="M384.6 16 V24.500" stroke="#a4a4a4" stroke-width="1.500"/><path d="M393.0 20 V24.500" stroke="#8c8c8c" stroke-width="1.200"/><path d="M401.4 20 V24.500" stroke="#8c8c8c" stroke-width="1.200"/><path d="M409.8 20 V24.500" stroke="#8c8c8c" stroke-width="1.200"/><path d="M418.2 20 V24.500" stroke="#8c8c8c" stroke-width="1.200"/><path d="M426.7 16 V24.500" stroke="#a4a4a4" stroke-width="1.500"/><path d="M435.1 20 V24.500" stroke="#8c8c8c" stroke-width="1.200"/><path d="M443.5 20 V24.500" stroke="#8c8c8c" stroke-width="1.200"/><path d="M451.9 20 V24.500" stroke="#8c8c8c" stroke-width="1.200"/><path d="M460.3 20 V24.500" stroke="#8c8c8c" stroke-width="1.200"/><path d="M468.7 16 V24.500" stroke="#a4a4a4" stroke-width="1.500"/><path d="M477.1 20 V24.500" stroke="#8c8c8c" stroke-width="1.200"/><path d="M485.6 20 V24.500" stroke="#8c8c8c" stroke-width="1.200"/><path d="M494.0 20 V24.500" stroke="#8c8c8c" stroke-width="1.200"/><path d="M502.4 20 V24.500" stroke="#8c8c8c" stroke-width="1.200"/><path d="M510.8 16 V24.500" stroke="#a4a4a4" stroke-width="1.500"/><path d="M519.2 20 V24.500" stroke="#8c8c8c" stroke-width="1.200"/><path d="M527.6 20 V24.500" stroke="#8c8c8c" stroke-width="1.200"/><path d="M536.0 20 V24.500" stroke="#8c8c8c" stroke-width="1.200"/><path d="M544.5 20 V24.500" stroke="#8c8c8c" stroke-width="1.200"/><path d="M552.9 16 V24.500" stroke="#a4a4a4" stroke-width="1.500"/><path d="M561.3 20 V24.500" stroke="#8c8c8c" stroke-width="1.200"/><path d="M569.7 20 V24.500" stroke="#8c8c8c" stroke-width="1.200"/><path d="M578.1 20 V24.500" stroke="#8c8c8c" stroke-width="1.200"/><path d="M586.5 20 V24.500" stroke="#8c8c8c" stroke-width="1.200"/><path d="M595.0 16 V24.500" stroke="#a4a4a4" stroke-width="1.500"/><path d="M603.4 20 V24.500" stroke="#8c8c8c" stroke-width="1.200"/><path d="M611.8 20 V24.500" stroke="#8c8c8c" stroke-width="1.200"/><path d="M620.2 20 V24.500" stroke="#8c8c8c" stroke-width="1.200"/><path d="M628.6 20 V24.500" stroke="#8c8c8c" stroke-width="1.200"/><path d="M637.0 16 V24.500" stroke="#a4a4a4" stroke-width="1.500"/><path d="M645.4 20 V24.500" stroke="#8c8c8c" stroke-width="1.200"/><path d="M653.9 20 V24.500" stroke="#8c8c8c" stroke-width="1.200"/><path d="M662.3 20 V24.500" stroke="#8c8c8c" stroke-width="1.200"/><path d="M670.7 20 V24.500" stroke="#8c8c8c" stroke-width="1.200"/><path d="M679.1 16 V24.500" stroke="#a4a4a4" stroke-width="1.500"/><path d="M687.5 20 V24.500" stroke="#8c8c8c" stroke-width="1.200"/><path d="M695.9 20 V24.500" stroke="#8c8c8c" stroke-width="1.200"/><path d="M704.3 20 V24.500" stroke="#8c8c8c" stroke-width="1.200"/></svg><div style="left:1185.9px;top:631.8px;height:14px;line-height:14px;color:#dcdcdc;font-size:12.3px;letter-spacing:-0.2px;white-space:nowrap;width:40px;text-align:center;">0</div><div style="left:1227.9750000000001px;top:631.8px;height:14px;line-height:14px;color:#dcdcdc;font-size:12.3px;letter-spacing:-0.2px;white-space:nowrap;width:40px;text-align:center;">15</div><div style="left:1270.0500000000002px;top:631.8px;height:14px;line-height:14px;color:#dcdcdc;font-size:12.3px;letter-spacing:-0.2px;white-space:nowrap;width:40px;text-align:center;">30</div><div style="left:1312.125px;top:631.8px;height:14px;line-height:14px;color:#dcdcdc;font-size:12.3px;letter-spacing:-0.2px;white-space:nowrap;width:40px;text-align:center;">45</div><div style="left:1354.2px;top:631.8px;height:14px;line-height:14px;color:#dcdcdc;font-size:12.3px;letter-spacing:-0.2px;white-space:nowrap;width:40px;text-align:center;">60</div><div style="left:1396.275px;top:631.8px;height:14px;line-height:14px;color:#dcdcdc;font-size:12.3px;letter-spacing:-0.2px;white-space:nowrap;width:40px;text-align:center;">75</div><div style="left:1438.3500000000001px;top:631.8px;height:14px;line-height:14px;color:#dcdcdc;font-size:12.3px;letter-spacing:-0.2px;white-space:nowrap;width:40px;text-align:center;">90</div><div style="left:1480.4250000000002px;top:631.8px;height:14px;line-height:14px;color:#dcdcdc;font-size:12.3px;letter-spacing:-0.2px;white-space:nowrap;width:40px;text-align:center;">105</div><div style="left:1522.5px;top:631.8px;height:14px;line-height:14px;color:#dcdcdc;font-size:12.3px;letter-spacing:-0.2px;white-space:nowrap;width:40px;text-align:center;">120</div><div style="left:1564.575px;top:631.8px;height:14px;line-height:14px;color:#dcdcdc;font-size:12.3px;letter-spacing:-0.2px;white-space:nowrap;width:40px;text-align:center;">135</div><div style="left:1606.65px;top:631.8px;height:14px;line-height:14px;color:#dcdcdc;font-size:12.3px;letter-spacing:-0.2px;white-space:nowrap;width:40px;text-align:center;">150</div><div style="left:1648.7250000000001px;top:631.8px;height:14px;line-height:14px;color:#dcdcdc;font-size:12.3px;letter-spacing:-0.2px;white-space:nowrap;width:40px;text-align:center;">165</div><div style="left:1690.8000000000002px;top:631.8px;height:14px;line-height:14px;color:#dcdcdc;font-size:12.3px;letter-spacing:-0.2px;white-space:nowrap;width:40px;text-align:center;">180</div><div style="left:1732.875px;top:631.8px;height:14px;line-height:14px;color:#dcdcdc;font-size:12.3px;letter-spacing:-0.2px;white-space:nowrap;width:40px;text-align:center;">195</div><div style="left:1774.9500000000003px;top:631.8px;height:14px;line-height:14px;color:#dcdcdc;font-size:12.3px;letter-spacing:-0.2px;white-space:nowrap;width:40px;text-align:center;">210</div><div style="left:1817.025px;top:631.8px;height:14px;line-height:14px;color:#dcdcdc;font-size:12.3px;letter-spacing:-0.2px;white-space:nowrap;width:40px;text-align:center;">225</div><div style="left:1859.1000000000001px;top:631.8px;height:14px;line-height:14px;color:#dcdcdc;font-size:12.3px;letter-spacing:-0.2px;white-space:nowrap;width:40px;text-align:center;">240</div><div style="left:1203px;top:654.5px;width:708px;height:16px;background:#464646;"></div><div style="left:1202px;top:653px;width:5.2px;height:18px;background:#6ec5ab;border-radius:1px;"></div><div style="left:1907px;top:653px;width:5.2px;height:18px;background:#6ec5ab;border-radius:1px;"></div><div style="left:1207px;top:674px;width:700px;height:18px;background:repeating-linear-gradient(135deg,#c9f07d 0 8.5px,#b5dc70 8.5px 17px);border-radius:1px;"></div><div style="left:1215px;top:674.7px;height:16px;line-height:16px;color:#333;font-size:12.5px;letter-spacing:-0.04px;white-space:nowrap;">GridStrokeWidth</div><div style="left:1207px;top:696px;width:700px;height:18px;background:repeating-linear-gradient(135deg,#f5a972 0 8.5px,#e0945f 8.5px 17px);border-radius:1px;"></div><div style="left:1215px;top:696.7px;height:16px;line-height:16px;color:#fff;font-size:12.5px;letter-spacing:-0.2px;white-space:nowrap;">DivideToGetAverage</div><div style="left:1207px;top:718px;width:700px;height:18px;background:repeating-linear-gradient(135deg,#f5a972 0 8.5px,#e0945f 8.5px 17px);border-radius:1px;"></div><div style="left:1215px;top:718.7px;height:16px;line-height:16px;color:#fff;font-size:12.5px;letter-spacing:-0.43px;white-space:nowrap;">AddGridSizes</div><div style="left:1207px;top:740px;width:700px;height:18px;background:radial-gradient(#e2cf60 0.6px,#fff08c 0.9px) 0 0/2.5px 2.5px;border-radius:1px;border:1px solid #fff;border-radius:3px;"></div><div style="left:1215px;top:740.7px;height:16px;line-height:16px;color:#333;font-size:12.5px;letter-spacing:-0.65px;white-space:nowrap;">SquaresOnShape</div><div style="left:1207px;top:762px;width:700px;height:18px;background:#c4c4c4;border-radius:1px;"></div><div style="left:1215px;top:762.7px;height:16px;line-height:16px;color:#333;font-size:12.5px;letter-spacing:-0.03px;white-space:nowrap;">VerticalGrid</div><div style="left:1207px;top:784px;width:700px;height:18px;background:#c4c4c4;border-radius:1px;"></div><div style="left:1215px;top:784.7px;height:16px;line-height:16px;color:#333;font-size:12.5px;letter-spacing:-0.02px;white-space:nowrap;">HorizontalGrid</div><div style="left:1207px;top:806px;width:700px;height:18px;background:#ffe87c;border-radius:1px;"></div><div style="left:1215px;top:806.7px;height:16px;line-height:16px;color:#333;font-size:12.5px;letter-spacing:-0.33px;white-space:nowrap;">CenterRectangle</div><div style="left:1207px;top:894px;width:700px;height:18px;background:#ffe87c;border-radius:1px;"></div><div style="left:1215px;top:894.7px;height:16px;line-height:16px;color:#333;font-size:12.5px;letter-spacing:-0.52px;white-space:nowrap;">RectangleBG</div><svg style="left:1201px;top:608px;" width="712" height="390" viewBox="0 0 712 390"><path d="M11.4 228 H98.6" stroke="#ffe87c" stroke-width="2.400"/><path d="M109.6 228 H140.7" stroke="#ffe87c" stroke-width="2.400"/><path d="M151.7 228 H224.8" stroke="#ffe87c" stroke-width="2.400"/><path d="M235.8 228 H252.9" stroke="#ffe87c" stroke-width="2.400" stroke-dasharray="5 5" stroke-dashoffset="5.500"/><path d="M263.9 228 H323.0" stroke="#ffe87c" stroke-width="2.400"/><path d="M334.0 228 H407.1" stroke="#ffe87c" stroke-width="2.400" stroke-dasharray="5 5" stroke-dashoffset="5.500"/><path d="M418.1 228 H698.8" stroke="#ffe87c" stroke-width="2.400"/><path d="M1.2 228 L5.9 223.3 L10.6 228 L5.9 232.7 Z" fill="#cfcfcf"/><path d="M99.4 228 L104.1 223.3 L108.8 228 L104.1 232.7 Z" fill="#cfcfcf"/><path d="M141.5 228 L146.2 223.3 L150.9 228 L146.2 232.7 Z" fill="#cfcfcf"/><path d="M225.6 228 L230.3 223.3 L235.0 228 L230.3 232.7 Z" fill="#cfcfcf"/><path d="M253.7 228 L258.4 223.3 L263.1 228 L258.4 232.7 Z" fill="#cfcfcf"/><path d="M323.8 228 L328.5 223.3 L333.2 228 L328.5 232.7 Z" fill="#cfcfcf"/><path d="M407.9 228 L412.6 223.3 L417.3 228 L412.6 232.7 Z" fill="#cfcfcf"/><path d="M699.6 228 L704.3 223.3 L709.0 228 L704.3 232.7 Z" fill="#cfcfcf"/><path d="M33.8 250 H84.6" stroke="#ffe87c" stroke-width="2.400"/><path d="M95.6 250 H157.5" stroke="#ffe87c" stroke-width="2.400"/><path d="M168.5 250 H202.4" stroke="#ffe87c" stroke-width="2.400" stroke-dasharray="5 5" stroke-dashoffset="5.500"/><path d="M213.4 250 H266.9" stroke="#ffe87c" stroke-width="2.400"/><path d="M277.9 250 H337.0" stroke="#ffe87c" stroke-width="2.400"/><path d="M348.0 250 H421.2" stroke="#ffe87c" stroke-width="2.400"/><path d="M23.6 250 L28.3 245.3 L33.0 250 L28.3 254.7 Z" fill="#cfcfcf"/><path d="M85.4 250 L90.1 245.3 L94.8 250 L90.1 254.7 Z" fill="#cfcfcf"/><path d="M158.3 250 L163.0 245.3 L167.7 250 L163.0 254.7 Z" fill="#cfcfcf"/><path d="M203.2 250 L207.9 245.3 L212.6 250 L207.9 254.7 Z" fill="#cfcfcf"/><path d="M267.7 250 L272.4 245.3 L277.1 250 L272.4 254.7 Z" fill="#cfcfcf"/><path d="M337.8 250 L342.5 245.3 L347.2 250 L342.5 254.7 Z" fill="#cfcfcf"/><path d="M422.0 250 L426.7 245.3 L431.4 250 L426.7 254.7 Z" fill="#cfcfcf"/><path d="M67.5 272 H112.6" stroke="#ffe87c" stroke-width="2.400"/><path d="M123.6 272 H140.7" stroke="#ffe87c" stroke-width="2.400"/><path d="M151.7 272 H202.4" stroke="#ffe87c" stroke-width="2.400" stroke-dasharray="5 5" stroke-dashoffset="5.500"/><path d="M213.4 272 H309.0" stroke="#ffe87c" stroke-width="2.400"/><path d="M320.0 272 H421.2" stroke="#ffe87c" stroke-width="2.400"/><path d="M57.3 272 L62.0 267.3 L66.7 272 L62.0 276.7 Z" fill="#cfcfcf"/><path d="M113.4 272 L118.1 267.3 L122.8 272 L118.1 276.7 Z" fill="#cfcfcf"/><path d="M141.5 272 L146.2 267.3 L150.9 272 L146.2 276.7 Z" fill="#cfcfcf"/><path d="M203.2 272 L207.9 267.3 L212.6 272 L207.9 276.7 Z" fill="#cfcfcf"/><path d="M309.8 272 L314.5 267.3 L319.2 272 L314.5 276.7 Z" fill="#cfcfcf"/><path d="M422.0 272 L426.7 267.3 L431.4 272 L426.7 276.7 Z" fill="#cfcfcf"/></svg><div style="left:1251.1px;top:652px;width:1.6px;height:309px;background:#66b9a1;"></div><svg style="left:1244.4px;top:643.3px;" width="15" height="10" viewBox="0 0 15 10"><path d="M0.300 0.300 H14.700 L7.500 10 Z" fill="#6ec5ab"/></svg><div style="left:1203px;top:964px;width:709px;height:10px;background:#464646;border-radius:5px;"></div><div style="left:1201px;top:976px;width:712px;height:22px;background:#464646;"></div><div class="btn" style="left:1203px;top:978px;width:18px;height:18px;"></div><svg style="left:1205px;top:981px;" width="14" height="12" viewBox="0 0 14 12"><path d="M0 1 H14 M0 5 H14" stroke="#e0e0e0" stroke-width="1.4"/><path d="M0 9.5 H14" stroke="#e0e0e0" stroke-width="1.4" stroke-dasharray="2.5 2"/></svg><div style="left:1223px;top:978px;width:151px;height:18px;background:#2a2a2a;border-radius:3px;"></div><div style="left:1227px;top:979.5px;height:16px;line-height:16px;color:#e8e8e8;font-size:12.5px;letter-spacing:-0.25px;white-space:nowrap;">Default Keyframe Layer</div><div style="left:1381px;top:978px;width:70px;height:18px;background:#2e2e2e;border-radius:3px;"></div><div style="left:1385px;top:979.5px;height:16px;line-height:16px;color:#5a5a5a;font-size:12.5px;letter-spacing:-0.25px;white-space:nowrap;">F</div><div style="left:1398px;top:979.5px;height:16px;line-height:16px;color:#c8c8c8;font-size:12.5px;letter-spacing:-0.25px;white-space:nowrap;">-</div><div style="left:1456px;top:979.5px;height:16px;line-height:16px;color:#e0e0e0;font-size:12.5px;letter-spacing:-0.25px;white-space:nowrap;">Align:</div><div style="left:1491px;top:977px;width:55px;height:20px;background:#1c1c1c;border-radius:4px;"></div><div style="left:1492px;top:978px;width:17px;height:18px;background:#2b2b2b;border-radius:3px;"></div><svg style="left:1494px;top:980px;" width="13" height="14" viewBox="0 0 13 14"><path d="M1.5 1 V13" stroke="#e8e8e8" stroke-width="1.2"/><path d="M3.5 4.5 H6 M3.5 10 H12" stroke="#e8e8e8" stroke-width="1.6"/><rect x="3.5" y="3.7" width="2" height="1.8" fill="#6ec5ab"/></svg><div style="left:1510px;top:978px;width:17px;height:18px;background:#2b2b2b;border-radius:3px;"></div><svg style="left:1512px;top:980px;" width="13" height="14" viewBox="0 0 13 14"><path d="M6.5 0.5 V13.5" stroke="#e8e8e8" stroke-width="1.2"/><path d="M1 10 H12" stroke="#e8e8e8" stroke-width="1.6"/><rect x="5.4" y="3.5" width="2.2" height="2" fill="#6ec5ab"/><path d="M2.5 4.5 H4.5 M8.5 4.5 H10.5" stroke="#e8e8e8" stroke-width="1.4"/></svg><div style="left:1527px;top:978px;width:17px;height:18px;background:#2b2b2b;border-radius:3px;"></div><svg style="left:1529px;top:980px;" width="13" height="14" viewBox="0 0 13 14"><path d="M11.5 1 V13" stroke="#e8e8e8" stroke-width="1.2"/><path d="M7 4.5 H9.5 M1 10 H9.5" stroke="#e8e8e8" stroke-width="1.6"/><rect x="7.5" y="3.7" width="2" height="1.8" fill="#6ec5ab"/></svg><div class="btn" style="left:1549px;top:978px;width:18px;height:18px;"></div><svg style="left:1552px;top:981px;" width="12" height="12" viewBox="0 0 12 12"><path d="M0.5 3 V0.5 H3 M9 0.5 H11.5 V3 M11.5 9 V11.5 H9 M3 11.5 H0.5 V9" fill="none" stroke="#e8e8e8" stroke-width="1.1"/><rect x="4.7" y="4.7" width="2.6" height="2.6" fill="#e8e8e8"/></svg><div class="btn" style="left:1570px;top:977px;width:32px;height:20px;"></div><svg style="left:1574px;top:980px;" width="12" height="12" viewBox="0 0 12 12"><path d="M2.6 10.6 L1.5 7.4 Q0 2.3 4.7 1.2 Q9 0.5 10.6 4.6 L11.2 6.9 L9 7.6 L8.4 5.5 Q7.5 3 5.2 3.5 Q3 4.2 3.9 6.7 L4.7 9.9 Z" fill="#e4e4e4"/></svg><div style="left:1589px;top:978px;width:1px;height:18px;background:#1c1c1c;"></div><svg style="left:1592px;top:983.5px;" width="6" height="8" viewBox="0 0 6 8"><path d="M0.6 0.6 L5.2 4 L0.6 7.4 Z" fill="none" stroke="#9a9a9a" stroke-width="0.9"/></svg><div class="btn" style="left:1605px;top:977px;width:32px;height:20px;"></div><svg style="left:1608px;top:980px;" width="14" height="14" viewBox="0 0 14 14"><path d="M7 0.5 V13.5 M4.5 3 V11 M9.5 3.5 V10.5" stroke="#e0e0e0" stroke-width="1"/><path d="M0 7 H3 M11 7 H14" stroke="#e0e0e0" stroke-width="1"/></svg><div style="left:1624px;top:978px;width:1px;height:18px;background:#1c1c1c;"></div><svg style="left:1627px;top:983.5px;" width="6" height="8" viewBox="0 0 6 8"><path d="M0.6 0.6 L5.2 4 L0.6 7.4 Z" fill="none" stroke="#9a9a9a" stroke-width="0.9"/></svg><svg style="left:1743px;top:980px;" width="14" height="14" viewBox="0 0 14 14"><circle cx="6" cy="6" r="5.2" fill="none" stroke="#d0d0d0" stroke-width="1"/><path d="M3.5 6 H8.5" stroke="#d0d0d0" stroke-width="1"/><path d="M10 10 L13 13" stroke="#d0d0d0" stroke-width="1.6"/></svg><div style="left:1767px;top:986px;width:115px;height:2px;background:#555;border-radius:1px;"></div><svg style="left:1761px;top:981px;" width="12" height="12" viewBox="0 0 12 12"><circle cx="6" cy="6" r="5.4" fill="#7fd6bd"/><circle cx="6" cy="6" r="3.2" fill="#62b89e"/></svg><svg style="left:1887px;top:980px;" width="14" height="14" viewBox="0 0 14 14"><circle cx="6" cy="6" r="5.2" fill="none" stroke="#d0d0d0" stroke-width="1"/><path d="M3.5 6 H8.5 M6 3.5 V8.5" stroke="#d0d0d0" stroke-width="1"/><path d="M10 10 L13 13" stroke="#d0d0d0" stroke-width="1.6"/></svg><div style="left:490px;top:1004px;width:1423px;height:23px;background:#333333;"></div><div style="left:1349px;top:1007.0px;height:16px;line-height:16px;color:#e4e4e4;font-size:12.5px;letter-spacing:-0.95px;white-space:nowrap;font-style:italic;">Click to see next message</div><div style="left:1477px;top:1006px;width:80px;height:18px;background:#dcbc5e;border-radius:2px;"></div><div style="left:1482px;top:1007.5px;height:16px;line-height:16px;color:#2a2a2a;font-size:12.5px;letter-spacing:-0.25px;white-space:nowrap;">Feedback</div><svg style="left:1538px;top:1009px;" width="12" height="12" viewBox="0 0 12 12"><path d="M1 0.5 H8 L10.5 3 V11.5 H1 Z" fill="#f4f4f4"/><path d="M3 8.5 L9.5 2 L11.5 4 L5 10.5 L2.5 11 Z" fill="#f08a3c"/></svg><div style="left:1560px;top:1006px;width:109px;height:18px;background:#31c865;border-radius:2px;"></div><div style="left:1565px;top:1007.5px;height:16px;line-height:16px;color:#2a2a2a;font-size:12.5px;letter-spacing:-0.25px;white-space:nowrap;">Upgrade to Pro</div><svg style="left:1649px;top:1009px;" width="14" height="12" viewBox="0 0 14 12"><path d="M1 6 Q0 2 3 2.5 L4 6 Q6.5 6.5 6.5 9 V12 H2 Q0.5 9 1 6 Z M13 6 Q14 2 11 2.5 L10 6 Q7.5 6.5 7.5 9 V12 H12 Q13.500 9 13 6 Z" fill="#f7cf3e"/></svg><div style="left:1672px;top:1006px;width:130px;height:18px;background:#b58cf2;border-radius:2px;"></div><div style="left:1677px;top:1007.5px;height:16px;line-height:16px;color:#2a2a2a;font-size:12.5px;letter-spacing:-0.25px;white-space:nowrap;">New Beta Available</div><svg style="left:1783px;top:1008px;" width="13" height="14" viewBox="0 0 13 14"><circle cx="6.5" cy="8" r="5.5" fill="#f8c840"/><path d="M2 4 L7 0 L8 5 Z" fill="#e8506a"/><circle cx="4.5" cy="7.5" r="0.9" fill="#6a3a10"/><circle cx="8.5" cy="7.5" r="0.9" fill="#6a3a10"/><path d="M4 10 Q6.500 12 9 10" stroke="#6a3a10" stroke-width="0.9" fill="none"/></svg><div style="left:1805px;top:1006px;width:106px;height:18px;background:#369ff0;border-radius:2px;"></div><div style="left:1810px;top:1007.5px;height:16px;line-height:16px;color:#2a2a2a;font-size:12.5px;letter-spacing:-0.25px;white-space:nowrap;">Tips and Tricks</div><svg style="left:1892px;top:1009px;" width="13" height="12" viewBox="0 0 13 12"><path d="M12.5 0.500 Q7 0.500 3.500 5 L1 5.500 L3 7 L5.500 9.500 L7 11.500 L7.500 9 Q12 5.500 12.500 0.500 Z" fill="#f4f4f4"/><path d="M12.500 0.500 Q10 0.500 8.500 1.500 L11.500 4.500 Q12.500 3 12.500 0.500 Z" fill="#e8405a"/><path d="M1 11.500 L2 8.500 L4 10.500 Z" fill="#f8a030"/></svg><div style="left:0px;top:1032px;width:1920px;height:48px;background:linear-gradient(to right,#d8e5f7 0%,#d9e5f6 35%,#e6e7dc 40%,#f1e9be 45%,#f3ebb4 50%,#f2eab8 60%,#efe7c6 68%,#f3eca8 76%,#f5f09c 83%,#f2efa4 85%,#dde9ef 86.400%,#d4e3f8 88%,#d3e2f8 100%);"></div><svg style="left:18.0px;top:1042.0px;" width="28" height="28" viewBox="0 0 28 28"><defs><linearGradient id="wg" x1="0" y1="0" x2="1" y2="1"><stop offset="0" stop-color="#4cc2ff"/><stop offset="1" stop-color="#0a64c8"/></linearGradient></defs><rect x="3" y="3" width="10.500" height="10.500" rx="1" fill="url(#wg)"/><rect x="14.500" y="3" width="10.500" height="10.500" rx="1" fill="url(#wg)"/><rect x="3" y="14.500" width="10.500" height="10.500" rx="1" fill="url(#wg)"/><rect x="14.500" y="14.500" width="10.500" height="10.500" rx="1" fill="url(#wg)"/></svg><svg style="left:62.0px;top:1042.0px;" width="28" height="28" viewBox="0 0 28 28"><defs><linearGradient id="sg" x1="0" y1="0" x2="1" y2="1"><stop offset="0" stop-color="#2ab4f0"/><stop offset="0.500" stop-color="#1a6fd8"/><stop offset="1" stop-color="#38c878"/></linearGradient></defs><circle cx="12" cy="12" r="8.500" fill="none" stroke="url(#sg)" stroke-width="3"/><path d="M18.500 18.500 L25 25" stroke="#1a6fd8" stroke-width="3.200" stroke-linecap="round"/></svg><svg style="left:106.0px;top:1042.0px;" width="28" height="28" viewBox="0 0 28 28"><rect x="9.500" y="2.500" width="16.500" height="16" rx="2" fill="#f6f6f6" stroke="#d4d4d4" stroke-width="0.500"/><rect x="3" y="9" width="16.500" height="15.500" rx="2" fill="#262626"/><rect x="9.500" y="9" width="10" height="9.500" fill="#c8c8c8" opacity="0.850"/></svg><svg style="left:150.0px;top:1042.0px;" width="28" height="28" viewBox="0 0 28 28"><defs><linearGradient id="cg" x1="0" y1="0" x2="1" y2="1"><stop offset="0" stop-color="#2a8cf0"/><stop offset="0.350" stop-color="#38c8a0"/><stop offset="0.600" stop-color="#f0c840"/><stop offset="0.800" stop-color="#f06a80"/><stop offset="1" stop-color="#b860f0"/></linearGradient></defs><path d="M10 3 H17 Q20 3 21 6 L24.500 16 Q26 21 21.500 21 H19.500 L18 25 H11 Q8 25 7 22 L3.500 12 Q2 7 6.500 7 H8.500 Z" fill="url(#cg)"/><path d="M11 9 H15 L17.500 19 H13.500 Z" fill="#e8f0fa"/></svg><svg style="left:194.0px;top:1042.0px;" width="28" height="28" viewBox="0 0 28 28"><path d="M2.500 6 Q2.500 4.500 4 4.500 H10 L12.500 7 H24 Q25.500 7 25.500 8.500 V10 H2.500 Z" fill="#e8a820"/><rect x="2.500" y="8.500" width="23" height="15.500" rx="1.500" fill="#ffd24a"/><rect x="2.500" y="18" width="23" height="6" rx="1.500" fill="#f4b830"/><rect x="8" y="19" width="12" height="5" rx="1" fill="#1a78d0"/></svg><div style="left:205.0px;top:1072px;width:6px;height:3px;background:#8a8e96;border-radius:1.5px;"></div><svg style="left:238.0px;top:1042.0px;" width="28" height="28" viewBox="0 0 28 28"><path d="M9.500 8 V6 Q9.500 3.500 12 3.500 H16 Q18.500 3.500 18.500 6 V8" fill="none" stroke="#1a8ce0" stroke-width="1.800"/><path d="M3 8 H25 V21.500 Q25 24.500 22 24.500 H6 Q3 24.500 3 21.500 Z" fill="#0f4fa0"/><rect x="9" y="11" width="4.600" height="4.600" fill="#f05028"/><rect x="14.400" y="11" width="4.600" height="4.600" fill="#80c020"/><rect x="9" y="16.400" width="4.600" height="4.600" fill="#28a8f0"/><rect x="14.400" y="16.400" width="4.600" height="4.600" fill="#f8b820"/></svg><svg style="left:282.0px;top:1042.0px;" width="28" height="28" viewBox="0 0 28 28"><path d="M14 2.500 L20 8.500 L14 14.500 L8 8.500 Z" fill="#f07878"/><path d="M8 8.500 L14 14.500 L8 20.500 L2 14.500 Z" fill="#88b8f0"/><path d="M20 8.500 L26 14.500 L20 20.500 L14 14.500 Z" fill="#78c870"/><path d="M14 14.500 L20 20.500 L14 26.500 L8 20.500 Z" fill="#f0d860"/><circle cx="14" cy="8" r="1.500" fill="#fff"/><circle cx="20" cy="15" r="1.500" fill="#fff"/></svg><div style="left:293.0px;top:1072px;width:6px;height:3px;background:#8a8e96;border-radius:1.5px;"></div><svg style="left:326.0px;top:1042.0px;" width="28" height="28" viewBox="0 0 28 28"><rect x="2.500" y="4.500" width="23" height="19" rx="2" fill="#2e2e2e"/><rect x="2.500" y="4.500" width="23" height="3" rx="1.500" fill="#4a4a4a"/><path d="M6 11.500 L10.500 14.500 L6 17.500" fill="none" stroke="#f4f4f4" stroke-width="1.800"/><path d="M12 18.500 H18" stroke="#f4f4f4" stroke-width="1.800"/></svg><div style="left:337.0px;top:1072px;width:6px;height:3px;background:#8a8e96;border-radius:1.5px;"></div><svg style="left:370.0px;top:1042.0px;" width="28" height="28" viewBox="0 0 28 28"><circle cx="14" cy="14" r="11.500" fill="#e84335"/><path d="M14 14 L4.040 8.250 A11.500 11.500 0 0 0 14 25.500 Z" fill="#34a853"/><path d="M14 14 L14 25.500 A11.500 11.500 0 0 0 23.960 8.250 Z" fill="#fbbc05"/><path d="M4.040 8.250 A11.500 11.500 0 0 1 23.960 8.250 L14 8.250 Z" fill="#e84335"/><circle cx="14" cy="14" r="5.600" fill="#fff"/><circle cx="14" cy="14" r="4.400" fill="#4285f4"/></svg><div style="left:381.0px;top:1072px;width:6px;height:3px;background:#8a8e96;border-radius:1.5px;"></div><svg style="left:414.0px;top:1042.0px;" width="28" height="28" viewBox="0 0 28 28"><path d="M20 2.500 L25.500 5 V23 L20 25.500 L7 14 Z" fill="#1f9cf0"/><path d="M20 2.500 L8.500 14 L20 25.500 V19.500 L13.500 14 L20 8.500 Z" fill="#0a6fc8"/><path d="M2.500 10 L5 8 L11 13 L8.500 15.500 Z M2.500 18 L5 20 L11 15 L8.500 12.500 Z" fill="#2a8ce0"/></svg><div style="left:425.0px;top:1072px;width:6px;height:3px;background:#8a8e96;border-radius:1.5px;"></div><svg style="left:458.0px;top:1042.0px;" width="28" height="28" viewBox="0 0 28 28"><defs><linearGradient id="eg" x1="0" y1="0" x2="1" y2="1"><stop offset="0" stop-color="#38c8d8"/><stop offset="0.500" stop-color="#1a88d8"/><stop offset="1" stop-color="#0c4fa8"/></linearGradient><linearGradient id="eg2" x1="0" y1="0" x2="1" y2="0"><stop offset="0" stop-color="#48d868"/><stop offset="1" stop-color="#28b8e0"/></linearGradient></defs><circle cx="14" cy="14" r="11.500" fill="url(#eg)"/><path d="M2.500 14 Q3 4 14 2.500 Q24 3 25.500 12 Q25.500 17 20 17 H14 Q14 12 9 12 Q4 12 2.500 14 Z" fill="url(#eg2)"/><path d="M9 12 Q14 12 14 17 Q14 21 19 22.500 Q14 26 9 22 Q5 17 9 12 Z" fill="#0c58b8"/></svg><div style="left:469.0px;top:1072px;width:6px;height:3px;background:#8a8e96;border-radius:1.5px;"></div><svg style="left:502.0px;top:1042.0px;" width="28" height="28" viewBox="0 0 28 28"><defs><linearGradient id="mg" x1="0" y1="0" x2="1" y2="1"><stop offset="0" stop-color="#f0a040"/><stop offset="0.500" stop-color="#e05a88"/><stop offset="1" stop-color="#8a50d8"/></linearGradient></defs><circle cx="14" cy="14" r="11.500" fill="url(#mg)"/><circle cx="14" cy="14" r="8.800" fill="#1c1c1c"/><path d="M11 8.500 L20 14 L11 19.500 Z" fill="#fff"/></svg><div style="left:513.0px;top:1072px;width:6px;height:3px;background:#8a8e96;border-radius:1.5px;"></div><svg style="left:546.0px;top:1042.0px;" width="28" height="28" viewBox="0 0 28 28"><rect x="5" y="4" width="18" height="21" rx="2" fill="#38b0e8"/><rect x="5" y="20" width="18" height="5" rx="1.500" fill="#b85828"/><rect x="5" y="19" width="18" height="2" fill="#e8e8e8"/><path d="M8 9 H20 M8 12 H20 M8 15 H20" stroke="#1a6898" stroke-width="1.300"/><path d="M8 3 V6 M11 3 V6 M14 3 V6 M17 3 V6 M20 3 V6" stroke="#505860" stroke-width="1.200"/></svg><div style="left:557.0px;top:1072px;width:6px;height:3px;background:#8a8e96;border-radius:1.5px;"></div><div style="left:584px;top:1036px;width:40px;height:42px;background:rgba(255,255,255,.600);border-radius:5px;"></div><svg style="left:591.0px;top:1043.0px;" width="26" height="26" viewBox="0 0 28 28"><rect x="3" y="3" width="22" height="22" rx="5" fill="#141414"/><path d="M18.500 9.500 L14 7 L8.500 10 V18 L14 21 L18.500 18.500" fill="none" stroke="#d8d8d8" stroke-width="1.600"/><path d="M8.500 10 L14 13 M14 13 V21 M14 13 L17 11.500" stroke="#8a8a8a" stroke-width="0.800" fill="none"/></svg><div style="left:596.0px;top:1072px;width:16px;height:3px;background:#1a78d8;border-radius:1.5px;"></div><svg style="left:1640px;top:1052px;" width="13" height="8" viewBox="0 0 13 8"><path d="M1 7 L6.500 1.500 L12 7" fill="none" stroke="#1a1a1a" stroke-width="1.400"/></svg><svg style="left:1671px;top:1050px;" width="16" height="13" viewBox="0 0 16 13"><path d="M0 3.500 H16 M0 9.500 H16" stroke="#1a1a1a" stroke-width="1.600"/><rect x="9" y="0.500" width="3" height="6" fill="#1a1a1a"/><rect x="3.500" y="6.500" width="3" height="6" fill="#1a1a1a"/></svg><svg style="left:1702px;top:1051px;" width="15" height="12" viewBox="0 0 15 12"><path d="M1 0.500 V11.500 M14 0.500 V11.500" stroke="#1a1a1a" stroke-width="1.800"/><path d="M3.500 11 V3 L7.500 8.500 L11.500 3 V11" fill="none" stroke="#1a1a1a" stroke-width="1.800"/></svg><svg style="left:1733px;top:1049px;" width="17" height="14" viewBox="0 0 17 14"><path d="M1 5 Q8.500 -2 16 5" fill="none" stroke="#1a1a1a" stroke-width="1.300"/><path d="M3.500 7.800 Q8.500 3 13.500 7.800" fill="none" stroke="#1a1a1a" stroke-width="1.300"/><path d="M6 10.500 Q8.500 8.200 11 10.500" fill="none" stroke="#1a1a1a" stroke-width="1.300"/><circle cx="8.500" cy="12.600" r="1.100" fill="#1a1a1a"/></svg><svg style="left:1758px;top:1050px;" width="16" height="13" viewBox="0 0 16 13"><path d="M0.700 4.500 H3.500 L7 1.200 V11.800 L3.500 8.500 H0.700 Z" fill="none" stroke="#1a1a1a" stroke-width="1.100"/><path d="M9.500 4 Q11 6.500 9.500 9 M11.800 2 Q14.500 6.500 11.800 11" fill="none" stroke="#1a1a1a" stroke-width="1.100"/><path d="M14 0.500 Q17 6.500 14 12.500" fill="none" stroke="#9aa0a8" stroke-width="1"/></svg><svg style="left:1781px;top:1049px;" width="18" height="14" viewBox="0 0 18 14"><rect x="1.700" y="4" width="13" height="8" rx="1.500" fill="none" stroke="#1a1a1a" stroke-width="1.200"/><rect x="3.500" y="5.800" width="9.500" height="4.500" fill="#1a1a1a"/><path d="M15.500 6.500 V9.500" stroke="#1a1a1a" stroke-width="1.500"/><path d="M2 0 L1 5 M0 2.500 L4 2.500" stroke="#1a1a1a" stroke-width="1"/></svg><div style="left:1776.5px;top:1040.0px;height:16px;line-height:16px;color:#1a1a1a;font-size:11.7px;letter-spacing:0px;white-space:nowrap;width:100px;text-align:right;">16.38</div><div style="left:1776.5px;top:1056.0px;height:16px;line-height:16px;color:#1a1a1a;font-size:11.7px;letter-spacing:0px;white-space:nowrap;width:100px;text-align:right;">01/10/2025</div><svg style="left:1885px;top:1048px;" width="16" height="17" viewBox="0 0 16 17"><path d="M2 12 Q3.500 10 3.500 6.500 Q3.500 2 8 2 Q12.500 2 12.500 6.500 Q12.500 10 14 12 Z" fill="#1a1a1a"/><path d="M6 14 Q8 16 10 14" fill="none" stroke="#1a1a1a" stroke-width="1.200"/><text x="5.200" y="10" font-size="6.500" font-weight="bold" fill="#fff" font-family="Liberation Sans">z</text><text x="11" y="4.500" font-size="6" font-weight="bold" fill="#1a1a1a" font-family="Liberation Sans">z</text></svg><div style="left:406px;top:708px;width:67px;height:21px;background:#4a4a4a;border-radius:3px;"></div><div style="left:407px;top:717px;width:237px;height:322px;background:#262626;box-shadow:2px 3px 6px rgba(0,0,0,.550);"></div><div style="left:429px;top:720.5px;height:16px;line-height:16px;color:#e8e8e8;font-size:12.5px;letter-spacing:-0.25px;white-space:nowrap;">Set Keyframe</div><div style="left:588px;top:720.5px;height:16px;line-height:16px;color:#e8e8e8;font-size:12.5px;letter-spacing:-0.25px;white-space:nowrap;">W</div><div style="left:623px;top:720.5px;height:16px;line-height:16px;color:#e8e8e8;font-size:12.5px;letter-spacing:-0.25px;white-space:nowrap;">H</div><div style="left:407px;top:740px;width:237px;height:1px;background:#4a4a4a;"></div><div style="left:429px;top:744.5px;height:16px;line-height:16px;color:#6e6e6e;font-size:12.5px;letter-spacing:-0.25px;white-space:nowrap;">Add Expression...</div><div style="left:407px;top:764px;width:237px;height:1px;background:#4a4a4a;"></div><div style="left:429px;top:768.5px;height:16px;line-height:16px;color:#6e6e6e;font-size:12.5px;letter-spacing:-0.25px;white-space:nowrap;">Reset Attribute Value to Default</div><div style="left:407px;top:788px;width:237px;height:1px;background:#4a4a4a;"></div><div style="left:429px;top:792.5px;height:16px;line-height:16px;color:#6e6e6e;font-size:12.5px;letter-spacing:-0.25px;white-space:nowrap;">Rename...</div><div style="left:402px;top:812px;width:240px;height:25px;background:#b8e62e;"></div><div style="left:405px;top:815px;width:234px;height:19px;background:#262626;"></div><div style="left:429px;top:816.5px;height:16px;line-height:16px;color:#e8e8e8;font-size:12.5px;letter-spacing:-0.25px;white-space:nowrap;">Add Behaviour</div><svg style="left:411px;top:819.5px;" width="10" height="10" viewBox="0 0 10 10"><path d="M5 0 V10 M0 5 H10" stroke="#e8e8e8" stroke-width="1.500"/></svg><svg style="left:632px;top:819px;" width="5" height="9" viewBox="0 0 5 9"><path d="M0.500 0.500 L4.500 4.500 L0.500 8.500" fill="none" stroke="#b8b8b8" stroke-width="1"/></svg><div style="left:429px;top:838.5px;height:16px;line-height:16px;color:#e8e8e8;font-size:12.5px;letter-spacing:-0.25px;white-space:nowrap;">Add Array</div><svg style="left:411px;top:841.5px;" width="10" height="10" viewBox="0 0 10 10"><path d="M5 0 V10 M0 5 H10" stroke="#e8e8e8" stroke-width="1.500"/></svg><svg style="left:632px;top:841px;" width="5" height="9" viewBox="0 0 5 9"><path d="M0.500 0.500 L4.500 4.500 L0.500 8.500" fill="none" stroke="#b8b8b8" stroke-width="1"/></svg><div style="left:429px;top:860.5px;height:16px;line-height:16px;color:#e8e8e8;font-size:12.5px;letter-spacing:-0.25px;white-space:nowrap;">Add Math/ Script</div><svg style="left:411px;top:863.5px;" width="10" height="10" viewBox="0 0 10 10"><path d="M5 0 V10 M0 5 H10" stroke="#e8e8e8" stroke-width="1.500"/></svg><svg style="left:632px;top:863px;" width="5" height="9" viewBox="0 0 5 9"><path d="M0.500 0.500 L4.500 4.500 L0.500 8.500" fill="none" stroke="#b8b8b8" stroke-width="1"/></svg><div style="left:429px;top:882.5px;height:16px;line-height:16px;color:#e8e8e8;font-size:12.5px;letter-spacing:-0.25px;white-space:nowrap;">Add Utility</div><svg style="left:411px;top:885.5px;" width="10" height="10" viewBox="0 0 10 10"><path d="M5 0 V10 M0 5 H10" stroke="#e8e8e8" stroke-width="1.500"/></svg><svg style="left:632px;top:885px;" width="5" height="9" viewBox="0 0 5 9"><path d="M0.500 0.500 L4.500 4.500 L0.500 8.500" fill="none" stroke="#b8b8b8" stroke-width="1"/></svg><div style="left:407px;top:902px;width:237px;height:1px;background:#4a4a4a;"></div><div style="left:429px;top:906.5px;height:16px;line-height:16px;color:#6e6e6e;font-size:12.5px;letter-spacing:-0.25px;white-space:nowrap;">Set Selected Attributes</div><div style="left:429px;top:928.5px;height:16px;line-height:16px;color:#e8e8e8;font-size:12.5px;letter-spacing:-0.25px;white-space:nowrap;">Set Selected Layers</div><div style="left:407px;top:948px;width:237px;height:1px;background:#4a4a4a;"></div><div style="left:429px;top:952.5px;height:16px;line-height:16px;color:#e8e8e8;font-size:12.5px;letter-spacing:-0.25px;white-space:nowrap;">Copy Value</div><div style="left:407px;top:972px;width:237px;height:1px;background:#4a4a4a;"></div><div style="left:429px;top:976.5px;height:16px;line-height:16px;color:#e8e8e8;font-size:12.5px;letter-spacing:-0.25px;white-space:nowrap;">Copy Layer Id</div><div style="left:429px;top:998.5px;height:16px;line-height:16px;color:#e8e8e8;font-size:12.5px;letter-spacing:-0.25px;white-space:nowrap;">Copy Scripting Path</div><svg style="left:632px;top:1001px;" width="5" height="9" viewBox="0 0 5 9"><path d="M0.500 0.500 L4.500 4.500 L0.500 8.500" fill="none" stroke="#b8b8b8" stroke-width="1"/></svg><div style="left:429px;top:1020.5px;height:16px;line-height:16px;color:#e8e8e8;font-size:12.5px;letter-spacing:-0.25px;white-space:nowrap;">Copy Generator Type</div><div style="left:644px;top:618px;width:238px;height:462px;background:#262626;box-shadow:2px 3px 6px rgba(0,0,0,.550);"></div><svg style="left:646.5px;top:622.5px;" width="13.5" height="13.5" viewBox="0 0 15 15"><rect x="1" y="6.500" width="7.500" height="7.500" fill="#9edc96"/><path d="M1 4.500 V1.500 H13.500 V13.500 H10.500" fill="none" stroke="#e8e8e8" stroke-width="1"/><path d="M8.500 6.500 L12.500 2.500" stroke="#9edc96" stroke-width="1"/></svg><div style="left:666px;top:621.5px;height:16px;line-height:16px;color:#e8e8e8;font-size:12.5px;letter-spacing:-0.25px;white-space:nowrap;">Area Range</div><div style="left:825px;top:621.5px;height:16px;line-height:16px;color:#686868;font-size:12.5px;letter-spacing:-0.25px;white-space:nowrap;">W</div><div style="left:860px;top:621.5px;height:16px;line-height:16px;color:#686868;font-size:12.5px;letter-spacing:-0.25px;white-space:nowrap;">H</div><svg style="left:646.5px;top:644.5px;" width="13.5" height="13.5" viewBox="0 0 15 15"><path d="M0.500 6.500 H14.500 Q14.500 13.500 7.500 13.500 Q0.500 13.500 0.500 6.500 Z" fill="#9edc96"/><ellipse cx="7.500" cy="6.500" rx="7" ry="2.200" fill="#262626" stroke="#9edc96" stroke-width="1"/><path d="M7 7 L11 1.500" stroke="#e8e8e8" stroke-width="2"/></svg><div style="left:666px;top:643.5px;height:16px;line-height:16px;color:#e8e8e8;font-size:12.5px;letter-spacing:-0.25px;white-space:nowrap;">Behaviour Mixer</div><div style="left:825px;top:643.5px;height:16px;line-height:16px;color:#e8e8e8;font-size:12.5px;letter-spacing:-0.25px;white-space:nowrap;">W</div><div style="left:860px;top:643.5px;height:16px;line-height:16px;color:#e8e8e8;font-size:12.5px;letter-spacing:-0.25px;white-space:nowrap;">H</div><svg style="left:646.5px;top:666.5px;" width="13.5" height="13.5" viewBox="0 0 15 15"><path d="M4.500 1.500 H10.500 L7.500 5.500 Z" fill="#9edc96"/><path d="M7.500 5 V14" stroke="#5c9a62" stroke-width="2"/><circle cx="2" cy="7.500" r="0.800" fill="#e8e8e8"/><circle cx="13" cy="7.500" r="0.800" fill="#e8e8e8"/></svg><div style="left:666px;top:665.5px;height:16px;line-height:16px;color:#e8e8e8;font-size:12.5px;letter-spacing:-0.25px;white-space:nowrap;">Frame</div><div style="left:825px;top:665.5px;height:16px;line-height:16px;color:#e8e8e8;font-size:12.5px;letter-spacing:-0.25px;white-space:nowrap;">W</div><div style="left:860px;top:665.5px;height:16px;line-height:16px;color:#e8e8e8;font-size:12.5px;letter-spacing:-0.25px;white-space:nowrap;">H</div><svg style="left:646.5px;top:688.5px;" width="13.5" height="13.5" viewBox="0 0 15 15"><path d="M1.500 0.500 V11" stroke="#e8e8e8" stroke-width="1" stroke-dasharray="1 1.500"/><path d="M3 14 H14.500" stroke="#e8e8e8" stroke-width="1" stroke-dasharray="1 1.500"/><path d="M2 13 L13 2 M8 2 H13 V7" fill="none" stroke="#9edc96" stroke-width="1.100"/></svg><div style="left:666px;top:687.5px;height:16px;line-height:16px;color:#e8e8e8;font-size:12.5px;letter-spacing:-0.25px;white-space:nowrap;">Get Vector</div><div style="left:825px;top:687.5px;height:16px;line-height:16px;color:#686868;font-size:12.5px;letter-spacing:-0.25px;white-space:nowrap;">W</div><div style="left:860px;top:687.5px;height:16px;line-height:16px;color:#686868;font-size:12.5px;letter-spacing:-0.25px;white-space:nowrap;">H</div><svg style="left:646.5px;top:710.5px;" width="13.5" height="13.5" viewBox="0 0 15 15"><rect x="0.600" y="4" width="14" height="7.500" rx="3.750" fill="none" stroke="#e8e8e8" stroke-width="1.200"/><path d="M4.300 4 A3.750 3.750 0 0 0 4.300 11.500 H7 V4 Z" fill="#9edc96"/></svg><div style="left:666px;top:709.5px;height:16px;line-height:16px;color:#e8e8e8;font-size:12.5px;letter-spacing:-0.25px;white-space:nowrap;">Is Within</div><div style="left:825px;top:709.5px;height:16px;line-height:16px;color:#e8e8e8;font-size:12.5px;letter-spacing:-0.25px;white-space:nowrap;">W</div><div style="left:860px;top:709.5px;height:16px;line-height:16px;color:#e8e8e8;font-size:12.5px;letter-spacing:-0.25px;white-space:nowrap;">H</div><svg style="left:646.5px;top:732.5px;" width="13.5" height="13.5" viewBox="0 0 15 15"><rect x="1" y="1" width="2" height="2" fill="#e8e8e8"/><rect x="4" y="1" width="2" height="2" fill="#9edc96"/><rect x="7" y="1" width="2" height="2" fill="#9edc96"/><rect x="10" y="1" width="2" height="2" fill="#e8e8e8"/><rect x="13" y="1" width="2" height="2" fill="#9edc96"/><rect x="1" y="4" width="2" height="2" fill="#9edc96"/><rect x="4" y="4" width="2" height="2" fill="#e8e8e8"/><rect x="7" y="4" width="2" height="2" fill="#9edc96"/><rect x="10" y="4" width="2" height="2" fill="#9edc96"/><rect x="13" y="4" width="2" height="2" fill="#e8e8e8"/><rect x="1" y="7" width="2" height="2" fill="#9edc96"/><rect x="4" y="7" width="2" height="2" fill="#9edc96"/><rect x="7" y="7" width="2" height="2" fill="#e8e8e8"/><rect x="10" y="7" width="2" height="2" fill="#9edc96"/><rect x="13" y="7" width="2" height="2" fill="#9edc96"/><rect x="1" y="10" width="2" height="2" fill="#e8e8e8"/><rect x="4" y="10" width="2" height="2" fill="#9edc96"/><rect x="7" y="10" width="2" height="2" fill="#9edc96"/><rect x="10" y="10" width="2" height="2" fill="#e8e8e8"/><rect x="13" y="10" width="2" height="2" fill="#9edc96"/><rect x="1" y="13" width="2" height="2" fill="#9edc96"/><rect x="4" y="13" width="2" height="2" fill="#e8e8e8"/><rect x="7" y="13" width="2" height="2" fill="#9edc96"/><rect x="10" y="13" width="2" height="2" fill="#9edc96"/><rect x="13" y="13" width="2" height="2" fill="#e8e8e8"/></svg><div style="left:666px;top:731.5px;height:16px;line-height:16px;color:#e8e8e8;font-size:12.5px;letter-spacing:-0.25px;white-space:nowrap;">Material Sampler</div><div style="left:825px;top:731.5px;height:16px;line-height:16px;color:#e8e8e8;font-size:12.5px;letter-spacing:-0.25px;white-space:nowrap;">W</div><div style="left:860px;top:731.5px;height:16px;line-height:16px;color:#e8e8e8;font-size:12.5px;letter-spacing:-0.25px;white-space:nowrap;">H</div><svg style="left:646.5px;top:754.5px;" width="13.5" height="13.5" viewBox="0 0 15 15"><path d="M0.500 12 H2.500 V3 H5.500 V12 H8 V3 H11 V12 H14.500" fill="none" stroke="#9edc96" stroke-width="1.100"/></svg><div style="left:666px;top:753.5px;height:16px;line-height:16px;color:#e8e8e8;font-size:12.5px;letter-spacing:-0.25px;white-space:nowrap;">Modulate</div><div style="left:825px;top:753.5px;height:16px;line-height:16px;color:#e8e8e8;font-size:12.5px;letter-spacing:-0.25px;white-space:nowrap;">W</div><div style="left:860px;top:753.5px;height:16px;line-height:16px;color:#e8e8e8;font-size:12.5px;letter-spacing:-0.25px;white-space:nowrap;">H</div><svg style="left:646.5px;top:776.5px;" width="13.5" height="13.5" viewBox="0 0 15 15"><rect x="1.0" y="1.0" width="2.300" height="2.300" fill="#9edc96"/><rect x="3.3" y="1.0" width="2.300" height="2.300" fill="#9edc96"/><rect x="5.6" y="1.0" width="2.300" height="2.300" fill="#7cc07c"/><rect x="7.9" y="1.0" width="2.300" height="2.300" fill="#3a6a42"/><rect x="10.2" y="1.0" width="2.300" height="2.300" fill="#3a6a42"/><rect x="12.5" y="1.0" width="2.300" height="2.300" fill="#7cc07c"/><rect x="1.0" y="3.3" width="2.300" height="2.300" fill="#5c9a62"/><rect x="3.3" y="3.3" width="2.300" height="2.300" fill="#7cc07c"/><rect x="5.6" y="3.3" width="2.300" height="2.300" fill="#5c9a62"/><rect x="7.9" y="3.3" width="2.300" height="2.300" fill="#9edc96"/><rect x="10.2" y="3.3" width="2.300" height="2.300" fill="#262626"/><rect x="12.5" y="3.3" width="2.300" height="2.300" fill="#262626"/><rect x="1.0" y="5.6" width="2.300" height="2.300" fill="#5c9a62"/><rect x="3.3" y="5.6" width="2.300" height="2.300" fill="#3a6a42"/><rect x="5.6" y="5.6" width="2.300" height="2.300" fill="#9edc96"/><rect x="7.9" y="5.6" width="2.300" height="2.300" fill="#3a6a42"/><rect x="10.2" y="5.6" width="2.300" height="2.300" fill="#5c9a62"/><rect x="12.5" y="5.6" width="2.300" height="2.300" fill="#2e4a34"/><rect x="1.0" y="7.9" width="2.300" height="2.300" fill="#9edc96"/><rect x="3.3" y="7.9" width="2.300" height="2.300" fill="#3a6a42"/><rect x="5.6" y="7.9" width="2.300" height="2.300" fill="#262626"/><rect x="7.9" y="7.9" width="2.300" height="2.300" fill="#5c9a62"/><rect x="10.2" y="7.9" width="2.300" height="2.300" fill="#262626"/><rect x="12.5" y="7.9" width="2.300" height="2.300" fill="#3a6a42"/><rect x="1.0" y="10.2" width="2.300" height="2.300" fill="#7cc07c"/><rect x="3.3" y="10.2" width="2.300" height="2.300" fill="#7cc07c"/><rect x="5.6" y="10.2" width="2.300" height="2.300" fill="#262626"/><rect x="7.9" y="10.2" width="2.300" height="2.300" fill="#2e4a34"/><rect x="10.2" y="10.2" width="2.300" height="2.300" fill="#3a6a42"/><rect x="12.5" y="10.2" width="2.300" height="2.300" fill="#2e4a34"/><rect x="1.0" y="12.5" width="2.300" height="2.300" fill="#2e4a34"/><rect x="3.3" y="12.5" width="2.300" height="2.300" fill="#9edc96"/><rect x="5.6" y="12.5" width="2.300" height="2.300" fill="#9edc96"/><rect x="7.9" y="12.5" width="2.300" height="2.300" fill="#2e4a34"/><rect x="10.2" y="12.5" width="2.300" height="2.300" fill="#9edc96"/><rect x="12.5" y="12.5" width="2.300" height="2.300" fill="#262626"/></svg><div style="left:666px;top:775.5px;height:16px;line-height:16px;color:#e8e8e8;font-size:12.5px;letter-spacing:-0.25px;white-space:nowrap;">Noise</div><div style="left:825px;top:775.5px;height:16px;line-height:16px;color:#e8e8e8;font-size:12.5px;letter-spacing:-0.25px;white-space:nowrap;">W</div><div style="left:860px;top:775.5px;height:16px;line-height:16px;color:#e8e8e8;font-size:12.5px;letter-spacing:-0.25px;white-space:nowrap;">H</div><div style="left:644px;top:794px;width:238px;height:22px;background:#323232;"></div><div style="left:643px;top:792px;width:180px;height:29px;background:#b8e62e;"></div><div style="left:646px;top:795px;width:174px;height:23px;background:#262626;"></div><div style="left:646px;top:795px;width:168px;height:23px;background:#3e3e3e;"></div><svg style="left:646.5px;top:798.5px;" width="13.5" height="13.5" viewBox="0 0 15 15"><rect x="2" y="8.500" width="4.500" height="5.500" fill="#e8e8e8"/><rect x="7" y="1.500" width="2.500" height="12.500" fill="#9edc96"/></svg><div style="left:666px;top:797.5px;height:16px;line-height:16px;color:#e8e8e8;font-size:12.5px;letter-spacing:-0.25px;white-space:nowrap;">Number Range</div><div style="left:825px;top:797.5px;height:16px;line-height:16px;color:#e8e8e8;font-size:12.5px;letter-spacing:-0.25px;white-space:nowrap;">W</div><div style="left:860px;top:797.5px;height:16px;line-height:16px;color:#e8e8e8;font-size:12.5px;letter-spacing:-0.25px;white-space:nowrap;">H</div><svg style="left:646.5px;top:820.5px;" width="13.5" height="13.5" viewBox="0 0 15 15"><path d="M0.500 7.500 Q2 -2 4.500 7.500 Q7 17 9.500 7.500 Q11.500 -1 14.500 10" fill="none" stroke="#9edc96" stroke-width="1.300"/></svg><div style="left:666px;top:819.5px;height:16px;line-height:16px;color:#e8e8e8;font-size:12.5px;letter-spacing:-0.25px;white-space:nowrap;">Oscillator</div><div style="left:825px;top:819.5px;height:16px;line-height:16px;color:#e8e8e8;font-size:12.5px;letter-spacing:-0.25px;white-space:nowrap;">W</div><div style="left:860px;top:819.5px;height:16px;line-height:16px;color:#e8e8e8;font-size:12.5px;letter-spacing:-0.25px;white-space:nowrap;">H</div><svg style="left:646.5px;top:842.5px;" width="13.5" height="13.5" viewBox="0 0 15 15"><path d="M1.500 8 Q1.500 2 5.500 2 Q8 2 8 7 Q8 12 11 12 Q14 12 14 8" fill="none" stroke="#9edc96" stroke-width="1.300"/><circle cx="1.800" cy="8.500" r="1.500" fill="#262626" stroke="#e8e8e8" stroke-width="1"/><circle cx="13.800" cy="7.500" r="1.500" fill="#262626" stroke="#e8e8e8" stroke-width="1"/></svg><div style="left:666px;top:841.5px;height:16px;line-height:16px;color:#e8e8e8;font-size:12.5px;letter-spacing:-0.25px;white-space:nowrap;">Pathfinder</div><div style="left:825px;top:841.5px;height:16px;line-height:16px;color:#686868;font-size:12.5px;letter-spacing:-0.25px;white-space:nowrap;">W</div><div style="left:860px;top:841.5px;height:16px;line-height:16px;color:#686868;font-size:12.5px;letter-spacing:-0.25px;white-space:nowrap;">H</div><svg style="left:646.5px;top:864.5px;" width="13.5" height="13.5" viewBox="0 0 15 15"><rect x="1" y="1" width="3" height="3" fill="#e8e8e8"/><rect x="11.500" y="11.500" width="3" height="3" fill="#e8e8e8"/><path d="M4 4.500 L11 11.500 M6.500 11.500 H11 V7" fill="none" stroke="#9edc96" stroke-width="1.100"/></svg><div style="left:666px;top:863.5px;height:16px;line-height:16px;color:#e8e8e8;font-size:12.5px;letter-spacing:-0.25px;white-space:nowrap;">Position Blend</div><div style="left:825px;top:863.5px;height:16px;line-height:16px;color:#686868;font-size:12.5px;letter-spacing:-0.25px;white-space:nowrap;">W</div><div style="left:860px;top:863.5px;height:16px;line-height:16px;color:#686868;font-size:12.5px;letter-spacing:-0.25px;white-space:nowrap;">H</div><svg style="left:646.5px;top:886.5px;" width="13.5" height="13.5" viewBox="0 0 15 15"><path d="M2 2 L5 5 M5 2 L2 5 M10 3 L13 6 M13 3 L10 6 M3 10 L6 13 M6 10 L3 13 M10 10 L13 13 M13 10 L10 13" stroke="#9edc96" stroke-width="1"/><circle cx="7.500" cy="1.500" r="0.800" fill="#e8e8e8"/><circle cx="7.500" cy="8" r="0.800" fill="#e8e8e8"/></svg><div style="left:666px;top:885.5px;height:16px;line-height:16px;color:#e8e8e8;font-size:12.5px;letter-spacing:-0.25px;white-space:nowrap;">Random</div><div style="left:825px;top:885.5px;height:16px;line-height:16px;color:#e8e8e8;font-size:12.5px;letter-spacing:-0.25px;white-space:nowrap;">W</div><div style="left:860px;top:885.5px;height:16px;line-height:16px;color:#e8e8e8;font-size:12.5px;letter-spacing:-0.25px;white-space:nowrap;">H</div><svg style="left:646.5px;top:908.5px;" width="13.5" height="13.5" viewBox="0 0 15 15"><path d="M1.500 7.500 H13.500" stroke="#9edc96" stroke-width="1.200"/><path d="M7.500 5.500 V1 M5.500 3 L7.500 1 L9.500 3 M7.500 9.500 V14 M5.500 12 L7.500 14 L9.500 12" fill="none" stroke="#e8e8e8" stroke-width="1"/></svg><div style="left:666px;top:907.5px;height:16px;line-height:16px;color:#e8e8e8;font-size:12.5px;letter-spacing:-0.25px;white-space:nowrap;">Round</div><div style="left:825px;top:907.5px;height:16px;line-height:16px;color:#e8e8e8;font-size:12.5px;letter-spacing:-0.25px;white-space:nowrap;">W</div><div style="left:860px;top:907.5px;height:16px;line-height:16px;color:#e8e8e8;font-size:12.5px;letter-spacing:-0.25px;white-space:nowrap;">H</div><svg style="left:646.5px;top:930.5px;" width="13.5" height="13.5" viewBox="0 0 15 15"><path d="M5 12 V2.500 L13 1 V10.500" fill="none" stroke="#9edc96" stroke-width="1.300"/><path d="M5 2.500 L13 1 V3.500 L5 5 Z" fill="#9edc96"/><ellipse cx="3.200" cy="12.200" rx="2.400" ry="1.900" fill="#9edc96"/><ellipse cx="11.200" cy="10.700" rx="2.400" ry="1.900" fill="#9edc96"/></svg><div style="left:666px;top:929.5px;height:16px;line-height:16px;color:#e8e8e8;font-size:12.5px;letter-spacing:-0.25px;white-space:nowrap;">Sound</div><div style="left:825px;top:929.5px;height:16px;line-height:16px;color:#e8e8e8;font-size:12.5px;letter-spacing:-0.25px;white-space:nowrap;">W</div><div style="left:860px;top:929.5px;height:16px;line-height:16px;color:#e8e8e8;font-size:12.5px;letter-spacing:-0.25px;white-space:nowrap;">H</div><svg style="left:646.5px;top:952.5px;" width="13.5" height="13.5" viewBox="0 0 15 15"><path d="M0.500 2.500 H8 M3 7 H11 M6 11.500 H14.500" stroke="#9edc96" stroke-width="2.400"/><path d="M0.500 5 H6 M4 9.300 H9" stroke="#e8e8e8" stroke-width="1"/></svg><div style="left:666px;top:951.5px;height:16px;line-height:16px;color:#e8e8e8;font-size:12.5px;letter-spacing:-0.25px;white-space:nowrap;">Stagger</div><div style="left:825px;top:951.5px;height:16px;line-height:16px;color:#e8e8e8;font-size:12.5px;letter-spacing:-0.25px;white-space:nowrap;">W</div><div style="left:860px;top:951.5px;height:16px;line-height:16px;color:#e8e8e8;font-size:12.5px;letter-spacing:-0.25px;white-space:nowrap;">H</div><svg style="left:646.5px;top:974.5px;" width="13.5" height="13.5" viewBox="0 0 15 15"><path d="M2 3.500 H13 L7.500 12.500 Z" fill="none" stroke="#9edc96" stroke-width="1.300"/></svg><div style="left:666px;top:973.5px;height:16px;line-height:16px;color:#e8e8e8;font-size:12.5px;letter-spacing:-0.25px;white-space:nowrap;">Value</div><div style="left:825px;top:973.5px;height:16px;line-height:16px;color:#e8e8e8;font-size:12.5px;letter-spacing:-0.25px;white-space:nowrap;">W</div><div style="left:860px;top:973.5px;height:16px;line-height:16px;color:#e8e8e8;font-size:12.5px;letter-spacing:-0.25px;white-space:nowrap;">H</div><svg style="left:646.5px;top:996.5px;" width="13.5" height="13.5" viewBox="0 0 15 15"><path d="M0.500 3.500 H14.500 L9.500 12.500 L7.500 9 L5.500 12.500 Z M5 3.500 L7.500 9 L10 3.500" fill="none" stroke="#9edc96" stroke-width="1.200"/></svg><div style="left:666px;top:995.5px;height:16px;line-height:16px;color:#e8e8e8;font-size:12.5px;letter-spacing:-0.25px;white-space:nowrap;">Value Blend</div><div style="left:825px;top:995.5px;height:16px;line-height:16px;color:#e8e8e8;font-size:12.5px;letter-spacing:-0.25px;white-space:nowrap;">W</div><div style="left:860px;top:995.5px;height:16px;line-height:16px;color:#e8e8e8;font-size:12.5px;letter-spacing:-0.25px;white-space:nowrap;">H</div><svg style="left:646.5px;top:1018.5px;" width="13.5" height="13.5" viewBox="0 0 15 15"><path d="M1 5.500 H10 L5.500 13.500 Z" fill="none" stroke="#9edc96" stroke-width="1.300"/><text x="10.500" y="6" font-size="7.500" fill="#e8e8e8" font-family="Liberation Sans">2</text></svg><div style="left:666px;top:1017.5px;height:16px;line-height:16px;color:#e8e8e8;font-size:12.5px;letter-spacing:-0.25px;white-space:nowrap;">Value2</div><div style="left:825px;top:1017.5px;height:16px;line-height:16px;color:#686868;font-size:12.5px;letter-spacing:-0.25px;white-space:nowrap;">W</div><div style="left:860px;top:1017.5px;height:16px;line-height:16px;color:#686868;font-size:12.5px;letter-spacing:-0.25px;white-space:nowrap;">H</div><svg style="left:646.5px;top:1040.5px;" width="13.5" height="13.5" viewBox="0 0 15 15"><path d="M0 5.500 H11 L7.500 13.500 L5.500 10 L3.500 13.500 Z" fill="none" stroke="#9edc96" stroke-width="1.200"/><text x="10.500" y="6" font-size="7.500" fill="#e8e8e8" font-family="Liberation Sans">2</text></svg><div style="left:666px;top:1039.5px;height:16px;line-height:16px;color:#e8e8e8;font-size:12.5px;letter-spacing:-0.25px;white-space:nowrap;">Value2 Blend</div><div style="left:825px;top:1039.5px;height:16px;line-height:16px;color:#686868;font-size:12.5px;letter-spacing:-0.25px;white-space:nowrap;">W</div><div style="left:860px;top:1039.5px;height:16px;line-height:16px;color:#686868;font-size:12.5px;letter-spacing:-0.25px;white-space:nowrap;">H</div><svg style="left:646.5px;top:1062.5px;" width="13.5" height="13.5" viewBox="0 0 15 15"><path d="M0.500 4.500 H9.500 L7 9" fill="none" stroke="#9edc96" stroke-width="1.200"/><path d="M0.500 4.500 L5 12" stroke="#9edc96" stroke-width="1.200"/><text x="10" y="5.500" font-size="7.500" fill="#e8e8e8" font-family="Liberation Sans">2</text><rect x="6.500" y="8.500" width="7" height="7" fill="#9edc96"/><path d="M10 9.500 V14.500 M7.500 12 H12.500" stroke="#262626" stroke-width="1.200"/></svg><div style="left:666px;top:1061.5px;height:16px;line-height:16px;color:#e8e8e8;font-size:12.5px;letter-spacing:-0.25px;white-space:nowrap;">Value2 Solver (Pro)</div><div style="left:825px;top:1061.5px;height:16px;line-height:16px;color:#686868;font-size:12.5px;letter-spacing:-0.25px;white-space:nowrap;">W</div><div style="left:860px;top:1061.5px;height:16px;line-height:16px;color:#686868;font-size:12.5px;letter-spacing:-0.25px;white-space:nowrap;">H</div></body></html>
